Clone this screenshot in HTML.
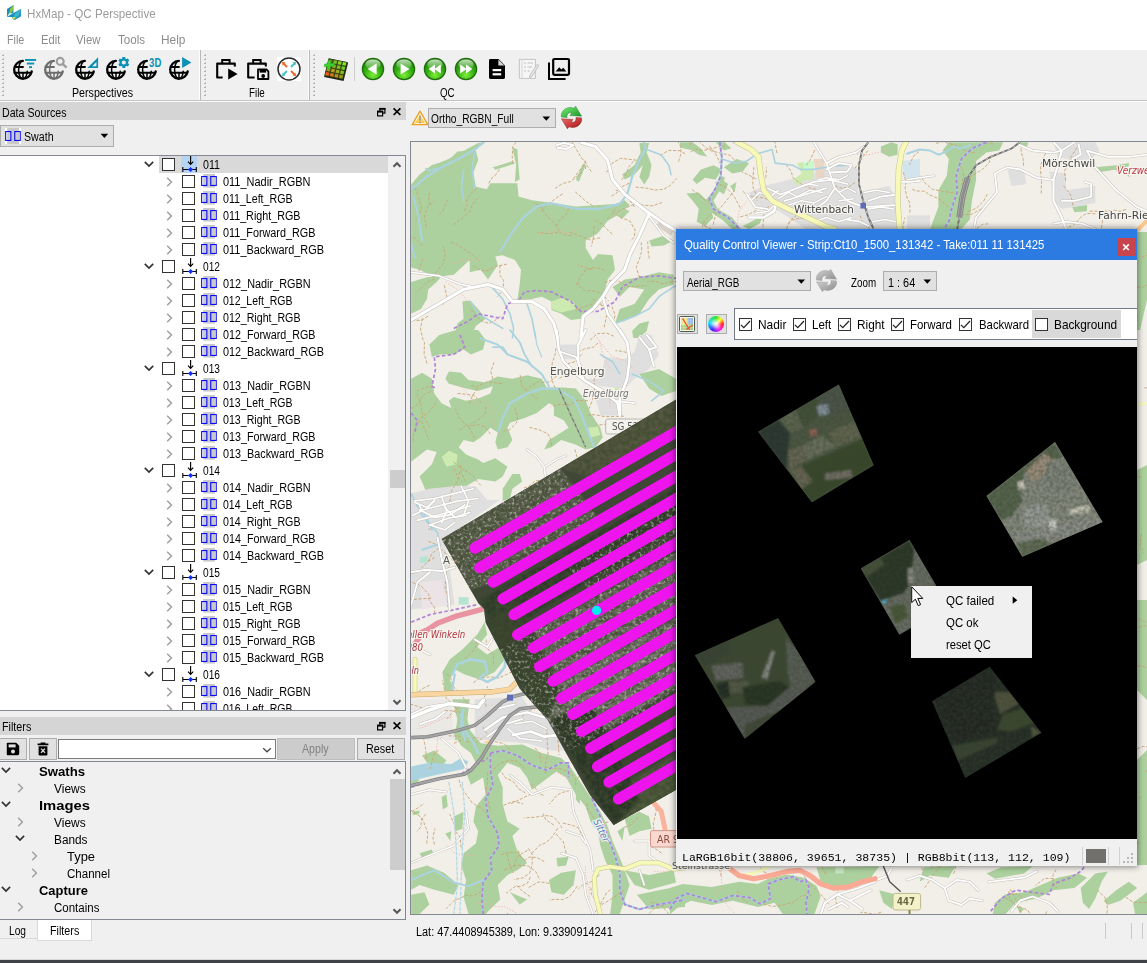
<!DOCTYPE html>
<html lang="en"><head><meta charset="utf-8"><title>HxMap - QC Perspective</title>
<style>
html,body{margin:0;padding:0}
body{width:1147px;height:963px;overflow:hidden;background:#f0f0f0;font-family:"Liberation Sans",sans-serif;font-size:12px;position:relative}
.t{position:absolute;white-space:pre;transform-origin:0 50%;line-height:1.3333;display:block}
.a{position:absolute}
svg{position:absolute;overflow:visible}

</style></head>
<body>
<div class="a" style="left:0px;top:0px;width:1147px;height:50px;background:#fff;"></div>
<svg style="left:0px;top:0px" width="28" height="26" viewBox="0 0 28 26">
<polygon points="7,9 13.4,5 13.4,13 7,17" fill="#1a8db9"/>
<polygon points="13.4,5 13.4,9.5 9,16 8,16.4 10.4,8.5" fill="#8cc63f"/>
<polygon points="7,17 9,13.6 13.4,13 " fill="#e8f4f8"/>
<polygon points="13.4,13 20.9,9 20.9,16.6 14.5,20 11.8,17.1 7,17" fill="#1690c2"/>
<polygon points="15,13.4 20.9,9 18.5,16.5 13.5,17" fill="#3db6c9"/>
<polygon points="11.9,17.1 16.7,16.9 13.7,20.3" fill="#8cc63f"/>
<polygon points="13.2,17.3 14.6,17.3 13.8,18.9" fill="#fff"/>
</svg>
<span class="t" style="left:27.3px;top:5.94px;font-size:12.5px;color:#9b9b9b;transform:scaleX(0.9310)">HxMap - QC Perspective</span>
<span class="t" style="left:6.6px;top:32.54px;font-size:12px;color:#8c8c8c;transform:scaleX(0.8943)">File</span>
<span class="t" style="left:40.5px;top:32.54px;font-size:12px;color:#8c8c8c;transform:scaleX(0.9329)">Edit</span>
<span class="t" style="left:76.4px;top:32.54px;font-size:12px;color:#8c8c8c;transform:scaleX(0.9459)">View</span>
<span class="t" style="left:117.7px;top:32.54px;font-size:12px;color:#8c8c8c;transform:scaleX(0.9637)">Tools</span>
<span class="t" style="left:161.3px;top:32.54px;font-size:12px;color:#8c8c8c;transform:scaleX(0.9884)">Help</span>
<div class="a" style="left:0px;top:50px;width:1147px;height:50px;background:#f0f0f0;"></div>
<div class="a" style="left:0px;top:100px;width:1147px;height:1px;background:#c4c4c4;"></div>
<div class="a" style="left:0px;top:101px;width:1147px;height:1px;background:#fbfbfb;"></div>
<svg style="left:0;top:0" width="1147" height="110"><rect x="3" y="54" width="1" height="1" fill="#c6c6c6"/><rect x="2" y="55" width="2" height="1" fill="#b2b2b2"/><rect x="3" y="58" width="1" height="1" fill="#c6c6c6"/><rect x="2" y="59" width="2" height="1" fill="#b2b2b2"/><rect x="3" y="62" width="1" height="1" fill="#c6c6c6"/><rect x="2" y="63" width="2" height="1" fill="#b2b2b2"/><rect x="3" y="66" width="1" height="1" fill="#c6c6c6"/><rect x="2" y="67" width="2" height="1" fill="#b2b2b2"/><rect x="3" y="70" width="1" height="1" fill="#c6c6c6"/><rect x="2" y="71" width="2" height="1" fill="#b2b2b2"/><rect x="3" y="74" width="1" height="1" fill="#c6c6c6"/><rect x="2" y="75" width="2" height="1" fill="#b2b2b2"/><rect x="3" y="78" width="1" height="1" fill="#c6c6c6"/><rect x="2" y="79" width="2" height="1" fill="#b2b2b2"/><rect x="3" y="82" width="1" height="1" fill="#c6c6c6"/><rect x="2" y="83" width="2" height="1" fill="#b2b2b2"/><rect x="3" y="86" width="1" height="1" fill="#c6c6c6"/><rect x="2" y="87" width="2" height="1" fill="#b2b2b2"/><rect x="3" y="90" width="1" height="1" fill="#c6c6c6"/><rect x="2" y="91" width="2" height="1" fill="#b2b2b2"/><rect x="3" y="94" width="1" height="1" fill="#c6c6c6"/><rect x="2" y="95" width="2" height="1" fill="#b2b2b2"/></svg>
<svg style="left:0;top:0" width="1147" height="110"><rect x="205" y="54" width="1" height="1" fill="#c6c6c6"/><rect x="204" y="55" width="2" height="1" fill="#b2b2b2"/><rect x="205" y="58" width="1" height="1" fill="#c6c6c6"/><rect x="204" y="59" width="2" height="1" fill="#b2b2b2"/><rect x="205" y="62" width="1" height="1" fill="#c6c6c6"/><rect x="204" y="63" width="2" height="1" fill="#b2b2b2"/><rect x="205" y="66" width="1" height="1" fill="#c6c6c6"/><rect x="204" y="67" width="2" height="1" fill="#b2b2b2"/><rect x="205" y="70" width="1" height="1" fill="#c6c6c6"/><rect x="204" y="71" width="2" height="1" fill="#b2b2b2"/><rect x="205" y="74" width="1" height="1" fill="#c6c6c6"/><rect x="204" y="75" width="2" height="1" fill="#b2b2b2"/><rect x="205" y="78" width="1" height="1" fill="#c6c6c6"/><rect x="204" y="79" width="2" height="1" fill="#b2b2b2"/><rect x="205" y="82" width="1" height="1" fill="#c6c6c6"/><rect x="204" y="83" width="2" height="1" fill="#b2b2b2"/><rect x="205" y="86" width="1" height="1" fill="#c6c6c6"/><rect x="204" y="87" width="2" height="1" fill="#b2b2b2"/><rect x="205" y="90" width="1" height="1" fill="#c6c6c6"/><rect x="204" y="91" width="2" height="1" fill="#b2b2b2"/><rect x="205" y="94" width="1" height="1" fill="#c6c6c6"/><rect x="204" y="95" width="2" height="1" fill="#b2b2b2"/></svg>
<svg style="left:0;top:0" width="1147" height="110"><rect x="314" y="54" width="1" height="1" fill="#c6c6c6"/><rect x="313" y="55" width="2" height="1" fill="#b2b2b2"/><rect x="314" y="58" width="1" height="1" fill="#c6c6c6"/><rect x="313" y="59" width="2" height="1" fill="#b2b2b2"/><rect x="314" y="62" width="1" height="1" fill="#c6c6c6"/><rect x="313" y="63" width="2" height="1" fill="#b2b2b2"/><rect x="314" y="66" width="1" height="1" fill="#c6c6c6"/><rect x="313" y="67" width="2" height="1" fill="#b2b2b2"/><rect x="314" y="70" width="1" height="1" fill="#c6c6c6"/><rect x="313" y="71" width="2" height="1" fill="#b2b2b2"/><rect x="314" y="74" width="1" height="1" fill="#c6c6c6"/><rect x="313" y="75" width="2" height="1" fill="#b2b2b2"/><rect x="314" y="78" width="1" height="1" fill="#c6c6c6"/><rect x="313" y="79" width="2" height="1" fill="#b2b2b2"/><rect x="314" y="82" width="1" height="1" fill="#c6c6c6"/><rect x="313" y="83" width="2" height="1" fill="#b2b2b2"/><rect x="314" y="86" width="1" height="1" fill="#c6c6c6"/><rect x="313" y="87" width="2" height="1" fill="#b2b2b2"/><rect x="314" y="90" width="1" height="1" fill="#c6c6c6"/><rect x="313" y="91" width="2" height="1" fill="#b2b2b2"/><rect x="314" y="94" width="1" height="1" fill="#c6c6c6"/><rect x="313" y="95" width="2" height="1" fill="#b2b2b2"/></svg>
<div class="a" style="left:199px;top:50px;width:1px;height:50px;background:#fdfdfd;"></div>
<div class="a" style="left:200px;top:50px;width:1px;height:50px;background:#b9b9b9;"></div>
<div class="a" style="left:308px;top:50px;width:1px;height:50px;background:#fdfdfd;"></div>
<div class="a" style="left:309px;top:50px;width:1px;height:50px;background:#b9b9b9;"></div>
<svg style="left:11px;top:56px" width="28" height="26" viewBox="-12 -14 28 26"><g transform="translate(0,-0.2)"><g fill="none" stroke="#000" stroke-width="2.3" stroke-linecap="round">
<path d="M -0.2 -8.85 A 8.85 8.85 0 1 0 8.75 1.5"/>
<path d="M -0.2 -8.9 A 4.3 8.9 0 0 0 0 8.9" stroke-width="1.5"/>
<path d="M 4.2 1.5 A 4.3 8.9 0 0 1 0 8.9" stroke-width="1.5"/>
<path d="M 0 3 V 8.6" stroke-width="1.5"/>
<path d="M -8.2 -2.8 H 0 M -8.4 2.9 H 8.4" stroke-width="1.9"/>
</g></g><g fill="#0b90b6"><rect x="2" y="-11" width="11.1" height="1.9"/><rect x="3.9" y="-7.4" width="7.3" height="1.9"/><rect x="6" y="-3.8" width="3" height="1.9"/></g></svg>
<svg style="left:42px;top:56px" width="28" height="26" viewBox="-12 -14 28 26"><g transform="translate(0,-0.2)"><g fill="none" stroke="#6c6c6c" stroke-width="2.3" stroke-linecap="round">
<path d="M -0.2 -8.85 A 8.85 8.85 0 1 0 8.75 1.5"/>
<path d="M -0.2 -8.9 A 4.3 8.9 0 0 0 0 8.9" stroke-width="1.5"/>
<path d="M 4.2 1.5 A 4.3 8.9 0 0 1 0 8.9" stroke-width="1.5"/>
<path d="M 0 3 V 8.6" stroke-width="1.5"/>
<path d="M -8.2 -2.8 H 0 M -8.4 2.9 H 8.4" stroke-width="1.9"/>
</g></g><g fill="none" stroke="#9d9d9d" stroke-width="2.1"><circle cx="6.2" cy="-8.6" r="3.5"/><path d="M 8.8 -5.9 L 12.6 -2.4" stroke-width="2.3"/></g></svg>
<svg style="left:73px;top:56px" width="28" height="26" viewBox="-12 -14 28 26"><g transform="translate(0,-0.2)"><g fill="none" stroke="#000" stroke-width="2.3" stroke-linecap="round">
<path d="M -0.2 -8.85 A 8.85 8.85 0 1 0 8.75 1.5"/>
<path d="M -0.2 -8.9 A 4.3 8.9 0 0 0 0 8.9" stroke-width="1.5"/>
<path d="M 4.2 1.5 A 4.3 8.9 0 0 1 0 8.9" stroke-width="1.5"/>
<path d="M 0 3 V 8.6" stroke-width="1.5"/>
<path d="M -8.2 -2.8 H 0 M -8.4 2.9 H 8.4" stroke-width="1.9"/>
</g></g><path d="M 13.1 -12.7 V -2 H 2.3 Z M 11.4 -7.9 V -3.8 H 7.2 Z" fill="#0b90b6" fill-rule="evenodd"/></svg>
<svg style="left:104px;top:56px" width="28" height="26" viewBox="-12 -14 28 26"><g transform="translate(0,-0.2)"><g fill="none" stroke="#000" stroke-width="2.3" stroke-linecap="round">
<path d="M -0.2 -8.85 A 8.85 8.85 0 1 0 8.75 1.5"/>
<path d="M -0.2 -8.9 A 4.3 8.9 0 0 0 0 8.9" stroke-width="1.5"/>
<path d="M 4.2 1.5 A 4.3 8.9 0 0 1 0 8.9" stroke-width="1.5"/>
<path d="M 0 3 V 8.6" stroke-width="1.5"/>
<path d="M -8.2 -2.8 H 0 M -8.4 2.9 H 8.4" stroke-width="1.9"/>
</g></g><g transform="translate(7.8,-7.5)" fill="#0b90b6"><rect x="-1.45" y="-5.6" width="2.9" height="11.2" rx="0.3" transform="rotate(0)"/><rect x="-1.45" y="-5.6" width="2.9" height="11.2" rx="0.3" transform="rotate(60)"/><rect x="-1.45" y="-5.6" width="2.9" height="11.2" rx="0.3" transform="rotate(120)"/><circle r="4.3"/><circle r="2.1" fill="#f0f0f0"/></g></svg>
<svg style="left:135px;top:56px" width="28" height="26" viewBox="-12 -14 28 26"><g transform="translate(0,-0.2)"><g fill="none" stroke="#000" stroke-width="2.3" stroke-linecap="round">
<path d="M -0.2 -8.85 A 8.85 8.85 0 1 0 8.75 1.5"/>
<path d="M -0.2 -8.9 A 4.3 8.9 0 0 0 0 8.9" stroke-width="1.5"/>
<path d="M 4.2 1.5 A 4.3 8.9 0 0 1 0 8.9" stroke-width="1.5"/>
<path d="M 0 3 V 8.6" stroke-width="1.5"/>
<path d="M -8.2 -2.8 H 0 M -8.4 2.9 H 8.4" stroke-width="1.9"/>
</g></g><text x="2.1" y="-3" font-family="Liberation Sans, sans-serif" font-weight="bold" font-size="13.2" fill="#0b90b6" textLength="12.2" lengthAdjust="spacingAndGlyphs">3D</text></svg>
<svg style="left:166.5px;top:56px" width="28" height="26" viewBox="-12 -14 28 26"><g transform="translate(0,-0.2)"><g fill="none" stroke="#000" stroke-width="2.3" stroke-linecap="round">
<path d="M -0.2 -8.85 A 8.85 8.85 0 1 0 8.75 1.5"/>
<path d="M -0.2 -8.9 A 4.3 8.9 0 0 0 0 8.9" stroke-width="1.5"/>
<path d="M 4.2 1.5 A 4.3 8.9 0 0 1 0 8.9" stroke-width="1.5"/>
<path d="M 0 3 V 8.6" stroke-width="1.5"/>
<path d="M -8.2 -2.8 H 0 M -8.4 2.9 H 8.4" stroke-width="1.9"/>
</g></g><path d="M 3.1 -13 L 12.4 -7.5 L 3.1 -2 Z" fill="#0b90b6"/></svg>
<span class="t" style="left:71.5px;top:86.24px;font-size:12px;color:#000;transform:scaleX(0.8879)">Perspectives</span>
<svg style="left:214px;top:56px" width="26" height="26" viewBox="0 0 26 26">
<path d="M 8.6 21.5 H 3.2 V 7.6 H 20.8 V 10.5" fill="none" stroke="#000" stroke-width="2.1" stroke-linejoin="round"/>
<path d="M 8.2 7.4 V 4 H 15.6 V 7.4" fill="none" stroke="#000" stroke-width="2"/>
<path d="M 14.2 12.6 L 23.6 18.1 L 14.2 23.6 Z" fill="#000"/></svg>
<svg style="left:245px;top:56px" width="26" height="26" viewBox="0 0 26 26">
<path d="M 9.6 21.5 H 3.2 V 7.6 H 20.8 V 10.5" fill="none" stroke="#000" stroke-width="2.1" stroke-linejoin="round"/>
<path d="M 8.2 7.4 V 4 H 15.6 V 7.4" fill="none" stroke="#000" stroke-width="2"/>
<path d="M 13 13.4 H 21.4 L 23.4 15.4 V 23 H 13 Z" fill="#f0f0f0" stroke="#000" stroke-width="1.8" stroke-linejoin="round"/>
<rect x="14.6" y="14" width="6.6" height="2.6" fill="#000"/><circle cx="18.2" cy="20" r="1.9" fill="#000"/></svg>
<svg style="left:277px;top:57px" width="24" height="24" viewBox="-12 -12 24 24">
<rect x="-12" y="-12" width="24" height="24" fill="#fff"/>
<circle r="11" fill="#fff" stroke="#2b2b2b" stroke-width="1.5"/>
<g stroke-width="2" fill="none">
<path d="M -2 -2 L -5.8 -5.8" stroke="#ee6a2c"/><path d="M 2 2 L 5.8 5.8" stroke="#ee6a2c"/>
<path d="M 2 -2 L 5.8 -5.8" stroke="#4fc1c9"/><path d="M -2 2 L -5.8 5.8" stroke="#4fc1c9"/></g>
<path d="M -7.2 -7.2 L -3.4 -6.4 L -6.4 -3.4 Z M 7.2 7.2 L 3.4 6.4 L 6.4 3.4 Z" fill="#ee6a2c"/>
<path d="M 7.2 -7.2 L 3.4 -6.4 L 6.4 -3.4 Z M -7.2 7.2 L -3.4 6.4 L -6.4 3.4 Z" fill="#4fc1c9"/>
</svg>
<span class="t" style="left:249.3px;top:86.24px;font-size:12px;color:#000;transform:scaleX(0.8168)">File</span>
<svg style="left:323px;top:56px" width="26" height="26" viewBox="0 0 26 26">
<g transform="matrix(18.3,3.7,-4.3,17.1,5.8,2.5)"><rect x="0" y="0" width="1.06" height="1.08" fill="#22280f"/><rect x="-0.01" y="-0.01" width="1.0" height="1.0" fill="#3a4418"/><rect x="0.035" y="0.035" width="0.18" height="0.18" fill="#4a8a14"/><rect x="0.28500000000000003" y="0.035" width="0.18" height="0.18" fill="#7fc01c"/><rect x="0.535" y="0.035" width="0.18" height="0.18" fill="#86d81f"/><rect x="0.785" y="0.035" width="0.18" height="0.18" fill="#7fe828"/><rect x="0.035" y="0.28500000000000003" width="0.18" height="0.18" fill="#a89414"/><rect x="0.28500000000000003" y="0.28500000000000003" width="0.18" height="0.18" fill="#8fb018"/><rect x="0.535" y="0.28500000000000003" width="0.18" height="0.18" fill="#79c41c"/><rect x="0.785" y="0.28500000000000003" width="0.18" height="0.18" fill="#6fd420"/><rect x="0.035" y="0.535" width="0.18" height="0.18" fill="#d08a18"/><rect x="0.28500000000000003" y="0.535" width="0.18" height="0.18" fill="#b8a018"/><rect x="0.535" y="0.535" width="0.18" height="0.18" fill="#9ab01a"/><rect x="0.785" y="0.535" width="0.18" height="0.18" fill="#86c01c"/><rect x="0.035" y="0.785" width="0.18" height="0.18" fill="#e8601a"/><rect x="0.28500000000000003" y="0.785" width="0.18" height="0.18" fill="#d87818"/><rect x="0.535" y="0.785" width="0.18" height="0.18" fill="#c08c18"/><rect x="0.785" y="0.785" width="0.18" height="0.18" fill="#a09c1a"/></g>
<path d="M 1.4 8.2 L 4.6 7.6 L 5.2 4.4 H 8 L 7.6 7.4 L 11.4 7.2 V 10 L 7.4 10.4 L 7 13.6 H 4 L 4.4 10.6 L 1.4 11 Z" fill="#3fd030" stroke="#2fae25" stroke-width="0.5"/></svg>
<div class="a" style="left:354px;top:57px;width:1px;height:24px;background:#cfcfcf;"></div>
<svg style="left:361px;top:56.599999999999994px" width="24" height="24" viewBox="-12 -12 24 24">
<defs><radialGradient id="gg373" cx="50%" cy="78%" r="70%"><stop offset="0" stop-color="#7ef03a"/><stop offset="0.55" stop-color="#34b012"/><stop offset="1" stop-color="#1c8608"/></radialGradient>
<linearGradient id="gh373" x1="0" y1="0" x2="0" y2="1"><stop offset="0" stop-color="#fff" stop-opacity="0.75"/><stop offset="1" stop-color="#fff" stop-opacity="0.05"/></linearGradient></defs>
<circle r="10.6" fill="url(#gg373)" stroke="#1f6e0c" stroke-width="1.3"/>
<ellipse cx="0" cy="-4.6" rx="7.6" ry="5" fill="url(#gh373)"/>
<g fill="#fff"><path d="M 3.6 -5.4 V 5.4 L -5.4 0 Z"/></g></svg>
<svg style="left:392px;top:56.599999999999994px" width="24" height="24" viewBox="-12 -12 24 24">
<defs><radialGradient id="gg404" cx="50%" cy="78%" r="70%"><stop offset="0" stop-color="#7ef03a"/><stop offset="0.55" stop-color="#34b012"/><stop offset="1" stop-color="#1c8608"/></radialGradient>
<linearGradient id="gh404" x1="0" y1="0" x2="0" y2="1"><stop offset="0" stop-color="#fff" stop-opacity="0.75"/><stop offset="1" stop-color="#fff" stop-opacity="0.05"/></linearGradient></defs>
<circle r="10.6" fill="url(#gg404)" stroke="#1f6e0c" stroke-width="1.3"/>
<ellipse cx="0" cy="-4.6" rx="7.6" ry="5" fill="url(#gh404)"/>
<g fill="#fff"><path d="M -3.4 -5.4 V 5.4 L 5.6 0 Z"/></g></svg>
<svg style="left:423px;top:56.599999999999994px" width="24" height="24" viewBox="-12 -12 24 24">
<defs><radialGradient id="gg435" cx="50%" cy="78%" r="70%"><stop offset="0" stop-color="#7ef03a"/><stop offset="0.55" stop-color="#34b012"/><stop offset="1" stop-color="#1c8608"/></radialGradient>
<linearGradient id="gh435" x1="0" y1="0" x2="0" y2="1"><stop offset="0" stop-color="#fff" stop-opacity="0.75"/><stop offset="1" stop-color="#fff" stop-opacity="0.05"/></linearGradient></defs>
<circle r="10.6" fill="url(#gg435)" stroke="#1f6e0c" stroke-width="1.3"/>
<ellipse cx="0" cy="-4.6" rx="7.6" ry="5" fill="url(#gh435)"/>
<g fill="#fff"><path d="M 0 -4.6 V 4.6 L -6.4 0 Z M 5.8 -4.6 V 4.6 L -0.6 0 Z"/></g></svg>
<svg style="left:454px;top:56.599999999999994px" width="24" height="24" viewBox="-12 -12 24 24">
<defs><radialGradient id="gg466" cx="50%" cy="78%" r="70%"><stop offset="0" stop-color="#7ef03a"/><stop offset="0.55" stop-color="#34b012"/><stop offset="1" stop-color="#1c8608"/></radialGradient>
<linearGradient id="gh466" x1="0" y1="0" x2="0" y2="1"><stop offset="0" stop-color="#fff" stop-opacity="0.75"/><stop offset="1" stop-color="#fff" stop-opacity="0.05"/></linearGradient></defs>
<circle r="10.6" fill="url(#gg466)" stroke="#1f6e0c" stroke-width="1.3"/>
<ellipse cx="0" cy="-4.6" rx="7.6" ry="5" fill="url(#gh466)"/>
<g fill="#fff"><path d="M 0 -4.6 V 4.6 L 6.4 0 Z M -5.8 -4.6 V 4.6 L 0.6 0 Z"/></g></svg>
<svg style="left:488px;top:58px" width="18" height="22" viewBox="0 0 18 22">
<path d="M 2.4 1 H 10.6 L 17 7.4 V 19.6 Q 17 21 15.6 21 H 2.4 Q 1 21 1 19.6 V 2.4 Q 1 1 2.4 1 Z" fill="#000"/>
<path d="M 10.4 1.6 V 7.6 H 16.4 Z" fill="#d8d8d8"/>
<rect x="4.6" y="11" width="8.6" height="2.2" fill="#fff"/><rect x="4.6" y="15.2" width="8.6" height="2.2" fill="#fff"/></svg>
<svg style="left:518px;top:58px" width="22" height="22" viewBox="0 0 22 22">
<rect x="1.4" y="1.4" width="16" height="19" fill="#f6f6f6" stroke="#c6c6c6" stroke-width="1"/>
<path d="M 4 1.4 V 20.4" stroke="#d4d4d4" stroke-width="1"/>
<g stroke="#c2c2c2" stroke-width="1.1"><path d="M 6 5 H 8 M 9.6 5 H 15 M 6 9 H 8 M 9.6 9 H 14 M 6 13 H 8 M 9.6 13 H 12"/></g>
<path d="M 19.2 6.2 L 20.8 7.4 L 14 18.4 L 11.6 19.6 L 12 17 Z" fill="#e8e8e8" stroke="#bdbdbd" stroke-width="0.9"/></svg>
<svg style="left:547px;top:57px" width="24" height="24" viewBox="0 0 24 24">
<path d="M 2 5.6 V 22 H 18.6" fill="none" stroke="#000" stroke-width="2"/>
<rect x="6.2" y="2" width="15.8" height="15.8" rx="1.2" fill="none" stroke="#000" stroke-width="2.2"/>
<path d="M 8.6 14.6 L 12.2 10.2 L 14.4 12.6 L 16.2 10.8 L 19.4 14.6 Z" fill="#000"/></svg>
<span class="t" style="left:439.6px;top:86.24px;font-size:12px;color:#000;transform:scaleX(0.8111)">QC</span>
<div class="a" style="left:0px;top:102.4px;width:405.6px;height:18px;background:#d5d5d5;"></div>
<span class="t" style="left:2px;top:106.44px;font-size:12px;color:#000;transform:scaleX(0.8872)">Data Sources</span>
<svg style="left:374px;top:103px" width="32" height="18" viewBox="0 0 32 18">
<g fill="#d5d5d5" stroke="#000" stroke-width="1.2"><rect x="5.9" y="5.5" width="5" height="4.6"/><path d="M 5.3 5.9 H 11.5" stroke-width="1.8"/><rect x="3.6" y="8.3" width="5" height="4.6"/><path d="M 3 8.7 H 9.2" stroke-width="1.8"/></g>
<path d="M 19.6 5.4 L 26.4 12 M 26.4 5.4 L 19.6 12" stroke="#000" stroke-width="1.7" fill="none"/></svg>
<div class="a" style="left:0px;top:125px;width:114px;height:22px;background:#e1e1e1;border:1px solid #adadad;box-sizing:border-box;"></div>
<svg style="left:5px;top:128px" width="16" height="16" viewBox="0 0 16 16">
<rect x="0" y="0" width="16" height="16" fill="#fff"/><rect x="2.2" y="0" width="11.8" height="16" fill="#c9c9c9"/>
<rect x="0.65" y="3.55" width="5.2" height="8.9" fill="none" stroke="#0a0af8" stroke-width="1.1"/><rect x="9.75" y="3.55" width="5.5" height="8.9" fill="none" stroke="#0a0af8" stroke-width="1.1"/></svg>
<span class="t" style="left:23.8px;top:130.44px;font-size:12px;color:#000;transform:scaleX(0.8873)">Swath</span>
<svg style="left:100px;top:133px" width="9" height="6"><path d="M 0.6 0.8 H 8.2 L 4.4 5 Z" fill="#000"/></svg>
<div class="a" style="left:0px;top:155px;width:406px;height:556px;background:#fff;border:1px solid #828790;box-sizing:border-box;border-left:none;"></div>
<div class="a" style="left:388px;top:156px;width:17px;height:554px;background:#f0f0f0;"></div>
<div class="a" style="left:390px;top:470px;width:15px;height:18px;background:#cdcdcd;"></div>
<svg style="left:390.6px;top:159px" width="12" height="12" viewBox="-6 -6 12 12"><path d="M -3.5 1.8 L 0 -1.8 L 3.5 1.8" fill="none" stroke="#555" stroke-width="2"/></svg>
<svg style="left:390.6px;top:695.5px" width="12" height="12" viewBox="-6 -6 12 12"><path d="M -3.5 -1.8 L 0 1.8 L 3.5 -1.8" fill="none" stroke="#555" stroke-width="2"/></svg>
<div class="a" style="left:0;top:156px;width:388px;height:554px;overflow:hidden">
<div class="a" style="left:159px;top:0px;width:229px;height:16.6px;background:#d9d9d9;"></div>
<svg style="left:142.5px;top:2.1999999999999993px" width="12" height="12" viewBox="-6 -6 12 12"><path d="M -4.2 -2.1 L 0 2.1 L 4.2 -2.1" fill="none" stroke="#333" stroke-width="1.7"/></svg>
<div class="a" style="left:162px;top:2px;width:13px;height:13px;box-sizing:border-box;border:1px solid #333;background:#fff"></div>
<svg style="left:181px;top:0px" width="16" height="17" viewBox="0 0 16 17"><rect x="0" y="0" width="16" height="16.6" fill="#b5d5f2"/>
<path d="M 9.6 0 V 8 M 7 5.6 L 9.6 8.4 L 12.2 5.6" fill="none" stroke="#000" stroke-width="1.15"/>
<path d="M 1.3 13.5 H 15.8 M 1.8 11 V 16 M 15.3 11 V 16" stroke="#000" stroke-width="1.1" fill="none"/>
<path d="M 9.6 10.9 L 12.2 13.5 L 9.6 16.1 L 7 13.5 Z" fill="#1030ff"/></svg>
<span class="t" style="left:203px;top:2.24px;font-size:12px;color:#000;transform:scaleX(0.8882)">011</span>
<svg style="left:162.6px;top:19.5px" width="12" height="12" viewBox="-6 -6 12 12"><path d="M -1.8 -4.2 L 2.4 0 L -1.8 4.2" fill="none" stroke="#a0a0a0" stroke-width="1.5"/></svg>
<div class="a" style="left:182px;top:19px;width:13px;height:13px;box-sizing:border-box;border:1px solid #333;background:#fff"></div>
<svg style="left:201px;top:17px" width="16" height="16" viewBox="0 0 16 16">
<rect x="2.2" y="1" width="11.8" height="13.6" fill="#c9c9c9"/>
<rect x="0.65" y="3.55" width="5.2" height="8.9" fill="none" stroke="#0a0af8" stroke-width="1.1"/><rect x="9.75" y="3.55" width="5.5" height="8.9" fill="none" stroke="#0a0af8" stroke-width="1.1"/></svg>
<span class="t" style="left:223px;top:19.24px;font-size:12px;color:#000;transform:scaleX(0.9131)">011_Nadir_RGBN</span>
<svg style="left:162.6px;top:36.5px" width="12" height="12" viewBox="-6 -6 12 12"><path d="M -1.8 -4.2 L 2.4 0 L -1.8 4.2" fill="none" stroke="#a0a0a0" stroke-width="1.5"/></svg>
<div class="a" style="left:182px;top:36px;width:13px;height:13px;box-sizing:border-box;border:1px solid #333;background:#fff"></div>
<svg style="left:201px;top:34px" width="16" height="16" viewBox="0 0 16 16">
<rect x="2.2" y="1" width="11.8" height="13.6" fill="#c9c9c9"/>
<rect x="0.65" y="3.55" width="5.2" height="8.9" fill="none" stroke="#0a0af8" stroke-width="1.1"/><rect x="9.75" y="3.55" width="5.5" height="8.9" fill="none" stroke="#0a0af8" stroke-width="1.1"/></svg>
<span class="t" style="left:223px;top:36.24px;font-size:12px;color:#000;transform:scaleX(0.8854)">011_Left_RGB</span>
<svg style="left:162.6px;top:53.5px" width="12" height="12" viewBox="-6 -6 12 12"><path d="M -1.8 -4.2 L 2.4 0 L -1.8 4.2" fill="none" stroke="#a0a0a0" stroke-width="1.5"/></svg>
<div class="a" style="left:182px;top:53px;width:13px;height:13px;box-sizing:border-box;border:1px solid #333;background:#fff"></div>
<svg style="left:201px;top:51px" width="16" height="16" viewBox="0 0 16 16">
<rect x="2.2" y="1" width="11.8" height="13.6" fill="#c9c9c9"/>
<rect x="0.65" y="3.55" width="5.2" height="8.9" fill="none" stroke="#0a0af8" stroke-width="1.1"/><rect x="9.75" y="3.55" width="5.5" height="8.9" fill="none" stroke="#0a0af8" stroke-width="1.1"/></svg>
<span class="t" style="left:223px;top:53.24px;font-size:12px;color:#000;transform:scaleX(0.8960)">011_Right_RGB</span>
<svg style="left:162.6px;top:70.5px" width="12" height="12" viewBox="-6 -6 12 12"><path d="M -1.8 -4.2 L 2.4 0 L -1.8 4.2" fill="none" stroke="#a0a0a0" stroke-width="1.5"/></svg>
<div class="a" style="left:182px;top:70px;width:13px;height:13px;box-sizing:border-box;border:1px solid #333;background:#fff"></div>
<svg style="left:201px;top:68px" width="16" height="16" viewBox="0 0 16 16">
<rect x="2.2" y="1" width="11.8" height="13.6" fill="#c9c9c9"/>
<rect x="0.65" y="3.55" width="5.2" height="8.9" fill="none" stroke="#0a0af8" stroke-width="1.1"/><rect x="9.75" y="3.55" width="5.5" height="8.9" fill="none" stroke="#0a0af8" stroke-width="1.1"/></svg>
<span class="t" style="left:223px;top:70.24px;font-size:12px;color:#000;transform:scaleX(0.9024)">011_Forward_RGB</span>
<svg style="left:162.6px;top:87.5px" width="12" height="12" viewBox="-6 -6 12 12"><path d="M -1.8 -4.2 L 2.4 0 L -1.8 4.2" fill="none" stroke="#a0a0a0" stroke-width="1.5"/></svg>
<div class="a" style="left:182px;top:87px;width:13px;height:13px;box-sizing:border-box;border:1px solid #333;background:#fff"></div>
<svg style="left:201px;top:85px" width="16" height="16" viewBox="0 0 16 16">
<rect x="2.2" y="1" width="11.8" height="13.6" fill="#c9c9c9"/>
<rect x="0.65" y="3.55" width="5.2" height="8.9" fill="none" stroke="#0a0af8" stroke-width="1.1"/><rect x="9.75" y="3.55" width="5.5" height="8.9" fill="none" stroke="#0a0af8" stroke-width="1.1"/></svg>
<span class="t" style="left:223px;top:87.24px;font-size:12px;color:#000;transform:scaleX(0.9085)">011_Backward_RGB</span>
<svg style="left:142.5px;top:104.2px" width="12" height="12" viewBox="-6 -6 12 12"><path d="M -4.2 -2.1 L 0 2.1 L 4.2 -2.1" fill="none" stroke="#333" stroke-width="1.7"/></svg>
<div class="a" style="left:162px;top:104px;width:13px;height:13px;box-sizing:border-box;border:1px solid #333;background:#fff"></div>
<svg style="left:181px;top:102px" width="16" height="17" viewBox="0 0 16 17">
<path d="M 9.6 0 V 8 M 7 5.6 L 9.6 8.4 L 12.2 5.6" fill="none" stroke="#000" stroke-width="1.15"/>
<path d="M 1.3 13.5 H 15.8 M 1.8 11 V 16 M 15.3 11 V 16" stroke="#000" stroke-width="1.1" fill="none"/>
<path d="M 9.6 10.9 L 12.2 13.5 L 9.6 16.1 L 7 13.5 Z" fill="#1030ff"/></svg>
<span class="t" style="left:203px;top:104.24px;font-size:12px;color:#000;transform:scaleX(0.8487)">012</span>
<svg style="left:162.6px;top:121.5px" width="12" height="12" viewBox="-6 -6 12 12"><path d="M -1.8 -4.2 L 2.4 0 L -1.8 4.2" fill="none" stroke="#a0a0a0" stroke-width="1.5"/></svg>
<div class="a" style="left:182px;top:121px;width:13px;height:13px;box-sizing:border-box;border:1px solid #333;background:#fff"></div>
<svg style="left:201px;top:119px" width="16" height="16" viewBox="0 0 16 16">
<rect x="2.2" y="1" width="11.8" height="13.6" fill="#c9c9c9"/>
<rect x="0.65" y="3.55" width="5.2" height="8.9" fill="none" stroke="#0a0af8" stroke-width="1.1"/><rect x="9.75" y="3.55" width="5.5" height="8.9" fill="none" stroke="#0a0af8" stroke-width="1.1"/></svg>
<span class="t" style="left:223px;top:121.24px;font-size:12px;color:#000;transform:scaleX(0.9047)">012_Nadir_RGBN</span>
<svg style="left:162.6px;top:138.5px" width="12" height="12" viewBox="-6 -6 12 12"><path d="M -1.8 -4.2 L 2.4 0 L -1.8 4.2" fill="none" stroke="#a0a0a0" stroke-width="1.5"/></svg>
<div class="a" style="left:182px;top:138px;width:13px;height:13px;box-sizing:border-box;border:1px solid #333;background:#fff"></div>
<svg style="left:201px;top:136px" width="16" height="16" viewBox="0 0 16 16">
<rect x="2.2" y="1" width="11.8" height="13.6" fill="#c9c9c9"/>
<rect x="0.65" y="3.55" width="5.2" height="8.9" fill="none" stroke="#0a0af8" stroke-width="1.1"/><rect x="9.75" y="3.55" width="5.5" height="8.9" fill="none" stroke="#0a0af8" stroke-width="1.1"/></svg>
<span class="t" style="left:223px;top:138.24px;font-size:12px;color:#000;transform:scaleX(0.8754)">012_Left_RGB</span>
<svg style="left:162.6px;top:155.5px" width="12" height="12" viewBox="-6 -6 12 12"><path d="M -1.8 -4.2 L 2.4 0 L -1.8 4.2" fill="none" stroke="#a0a0a0" stroke-width="1.5"/></svg>
<div class="a" style="left:182px;top:155px;width:13px;height:13px;box-sizing:border-box;border:1px solid #333;background:#fff"></div>
<svg style="left:201px;top:153px" width="16" height="16" viewBox="0 0 16 16">
<rect x="2.2" y="1" width="11.8" height="13.6" fill="#c9c9c9"/>
<rect x="0.65" y="3.55" width="5.2" height="8.9" fill="none" stroke="#0a0af8" stroke-width="1.1"/><rect x="9.75" y="3.55" width="5.5" height="8.9" fill="none" stroke="#0a0af8" stroke-width="1.1"/></svg>
<span class="t" style="left:223px;top:155.24px;font-size:12px;color:#000;transform:scaleX(0.8868)">012_Right_RGB</span>
<svg style="left:162.6px;top:172.5px" width="12" height="12" viewBox="-6 -6 12 12"><path d="M -1.8 -4.2 L 2.4 0 L -1.8 4.2" fill="none" stroke="#a0a0a0" stroke-width="1.5"/></svg>
<div class="a" style="left:182px;top:172px;width:13px;height:13px;box-sizing:border-box;border:1px solid #333;background:#fff"></div>
<svg style="left:201px;top:170px" width="16" height="16" viewBox="0 0 16 16">
<rect x="2.2" y="1" width="11.8" height="13.6" fill="#c9c9c9"/>
<rect x="0.65" y="3.55" width="5.2" height="8.9" fill="none" stroke="#0a0af8" stroke-width="1.1"/><rect x="9.75" y="3.55" width="5.5" height="8.9" fill="none" stroke="#0a0af8" stroke-width="1.1"/></svg>
<span class="t" style="left:223px;top:172.24px;font-size:12px;color:#000;transform:scaleX(0.8947)">012_Forward_RGB</span>
<svg style="left:162.6px;top:189.5px" width="12" height="12" viewBox="-6 -6 12 12"><path d="M -1.8 -4.2 L 2.4 0 L -1.8 4.2" fill="none" stroke="#a0a0a0" stroke-width="1.5"/></svg>
<div class="a" style="left:182px;top:189px;width:13px;height:13px;box-sizing:border-box;border:1px solid #333;background:#fff"></div>
<svg style="left:201px;top:187px" width="16" height="16" viewBox="0 0 16 16">
<rect x="2.2" y="1" width="11.8" height="13.6" fill="#c9c9c9"/>
<rect x="0.65" y="3.55" width="5.2" height="8.9" fill="none" stroke="#0a0af8" stroke-width="1.1"/><rect x="9.75" y="3.55" width="5.5" height="8.9" fill="none" stroke="#0a0af8" stroke-width="1.1"/></svg>
<span class="t" style="left:223px;top:189.24px;font-size:12px;color:#000;transform:scaleX(0.9013)">012_Backward_RGB</span>
<svg style="left:142.5px;top:206.2px" width="12" height="12" viewBox="-6 -6 12 12"><path d="M -4.2 -2.1 L 0 2.1 L 4.2 -2.1" fill="none" stroke="#333" stroke-width="1.7"/></svg>
<div class="a" style="left:162px;top:206px;width:13px;height:13px;box-sizing:border-box;border:1px solid #333;background:#fff"></div>
<svg style="left:181px;top:204px" width="16" height="17" viewBox="0 0 16 17">
<path d="M 9.6 0 V 8 M 7 5.6 L 9.6 8.4 L 12.2 5.6" fill="none" stroke="#000" stroke-width="1.15"/>
<path d="M 1.3 13.5 H 15.8 M 1.8 11 V 16 M 15.3 11 V 16" stroke="#000" stroke-width="1.1" fill="none"/>
<path d="M 9.6 10.9 L 12.2 13.5 L 9.6 16.1 L 7 13.5 Z" fill="#1030ff"/></svg>
<span class="t" style="left:203px;top:206.24px;font-size:12px;color:#000;transform:scaleX(0.8487)">013</span>
<svg style="left:162.6px;top:223.5px" width="12" height="12" viewBox="-6 -6 12 12"><path d="M -1.8 -4.2 L 2.4 0 L -1.8 4.2" fill="none" stroke="#a0a0a0" stroke-width="1.5"/></svg>
<div class="a" style="left:182px;top:223px;width:13px;height:13px;box-sizing:border-box;border:1px solid #333;background:#fff"></div>
<svg style="left:201px;top:221px" width="16" height="16" viewBox="0 0 16 16">
<rect x="2.2" y="1" width="11.8" height="13.6" fill="#c9c9c9"/>
<rect x="0.65" y="3.55" width="5.2" height="8.9" fill="none" stroke="#0a0af8" stroke-width="1.1"/><rect x="9.75" y="3.55" width="5.5" height="8.9" fill="none" stroke="#0a0af8" stroke-width="1.1"/></svg>
<span class="t" style="left:223px;top:223.24px;font-size:12px;color:#000;transform:scaleX(0.9047)">013_Nadir_RGBN</span>
<svg style="left:162.6px;top:240.5px" width="12" height="12" viewBox="-6 -6 12 12"><path d="M -1.8 -4.2 L 2.4 0 L -1.8 4.2" fill="none" stroke="#a0a0a0" stroke-width="1.5"/></svg>
<div class="a" style="left:182px;top:240px;width:13px;height:13px;box-sizing:border-box;border:1px solid #333;background:#fff"></div>
<svg style="left:201px;top:238px" width="16" height="16" viewBox="0 0 16 16">
<rect x="2.2" y="1" width="11.8" height="13.6" fill="#c9c9c9"/>
<rect x="0.65" y="3.55" width="5.2" height="8.9" fill="none" stroke="#0a0af8" stroke-width="1.1"/><rect x="9.75" y="3.55" width="5.5" height="8.9" fill="none" stroke="#0a0af8" stroke-width="1.1"/></svg>
<span class="t" style="left:223px;top:240.24px;font-size:12px;color:#000;transform:scaleX(0.8754)">013_Left_RGB</span>
<svg style="left:162.6px;top:257.5px" width="12" height="12" viewBox="-6 -6 12 12"><path d="M -1.8 -4.2 L 2.4 0 L -1.8 4.2" fill="none" stroke="#a0a0a0" stroke-width="1.5"/></svg>
<div class="a" style="left:182px;top:257px;width:13px;height:13px;box-sizing:border-box;border:1px solid #333;background:#fff"></div>
<svg style="left:201px;top:255px" width="16" height="16" viewBox="0 0 16 16">
<rect x="2.2" y="1" width="11.8" height="13.6" fill="#c9c9c9"/>
<rect x="0.65" y="3.55" width="5.2" height="8.9" fill="none" stroke="#0a0af8" stroke-width="1.1"/><rect x="9.75" y="3.55" width="5.5" height="8.9" fill="none" stroke="#0a0af8" stroke-width="1.1"/></svg>
<span class="t" style="left:223px;top:257.24px;font-size:12px;color:#000;transform:scaleX(0.8868)">013_Right_RGB</span>
<svg style="left:162.6px;top:274.5px" width="12" height="12" viewBox="-6 -6 12 12"><path d="M -1.8 -4.2 L 2.4 0 L -1.8 4.2" fill="none" stroke="#a0a0a0" stroke-width="1.5"/></svg>
<div class="a" style="left:182px;top:274px;width:13px;height:13px;box-sizing:border-box;border:1px solid #333;background:#fff"></div>
<svg style="left:201px;top:272px" width="16" height="16" viewBox="0 0 16 16">
<rect x="2.2" y="1" width="11.8" height="13.6" fill="#c9c9c9"/>
<rect x="0.65" y="3.55" width="5.2" height="8.9" fill="none" stroke="#0a0af8" stroke-width="1.1"/><rect x="9.75" y="3.55" width="5.5" height="8.9" fill="none" stroke="#0a0af8" stroke-width="1.1"/></svg>
<span class="t" style="left:223px;top:274.24px;font-size:12px;color:#000;transform:scaleX(0.8947)">013_Forward_RGB</span>
<svg style="left:162.6px;top:291.5px" width="12" height="12" viewBox="-6 -6 12 12"><path d="M -1.8 -4.2 L 2.4 0 L -1.8 4.2" fill="none" stroke="#a0a0a0" stroke-width="1.5"/></svg>
<div class="a" style="left:182px;top:291px;width:13px;height:13px;box-sizing:border-box;border:1px solid #333;background:#fff"></div>
<svg style="left:201px;top:289px" width="16" height="16" viewBox="0 0 16 16">
<rect x="2.2" y="1" width="11.8" height="13.6" fill="#c9c9c9"/>
<rect x="0.65" y="3.55" width="5.2" height="8.9" fill="none" stroke="#0a0af8" stroke-width="1.1"/><rect x="9.75" y="3.55" width="5.5" height="8.9" fill="none" stroke="#0a0af8" stroke-width="1.1"/></svg>
<span class="t" style="left:223px;top:291.24px;font-size:12px;color:#000;transform:scaleX(0.9013)">013_Backward_RGB</span>
<svg style="left:142.5px;top:308.2px" width="12" height="12" viewBox="-6 -6 12 12"><path d="M -4.2 -2.1 L 0 2.1 L 4.2 -2.1" fill="none" stroke="#333" stroke-width="1.7"/></svg>
<div class="a" style="left:162px;top:308px;width:13px;height:13px;box-sizing:border-box;border:1px solid #333;background:#fff"></div>
<svg style="left:181px;top:306px" width="16" height="17" viewBox="0 0 16 17">
<path d="M 9.6 0 V 8 M 7 5.6 L 9.6 8.4 L 12.2 5.6" fill="none" stroke="#000" stroke-width="1.15"/>
<path d="M 1.3 13.5 H 15.8 M 1.8 11 V 16 M 15.3 11 V 16" stroke="#000" stroke-width="1.1" fill="none"/>
<path d="M 9.6 10.9 L 12.2 13.5 L 9.6 16.1 L 7 13.5 Z" fill="#1030ff"/></svg>
<span class="t" style="left:203px;top:308.24px;font-size:12px;color:#000;transform:scaleX(0.8487)">014</span>
<svg style="left:162.6px;top:325.5px" width="12" height="12" viewBox="-6 -6 12 12"><path d="M -1.8 -4.2 L 2.4 0 L -1.8 4.2" fill="none" stroke="#a0a0a0" stroke-width="1.5"/></svg>
<div class="a" style="left:182px;top:325px;width:13px;height:13px;box-sizing:border-box;border:1px solid #333;background:#fff"></div>
<svg style="left:201px;top:323px" width="16" height="16" viewBox="0 0 16 16">
<rect x="2.2" y="1" width="11.8" height="13.6" fill="#c9c9c9"/>
<rect x="0.65" y="3.55" width="5.2" height="8.9" fill="none" stroke="#0a0af8" stroke-width="1.1"/><rect x="9.75" y="3.55" width="5.5" height="8.9" fill="none" stroke="#0a0af8" stroke-width="1.1"/></svg>
<span class="t" style="left:223px;top:325.24px;font-size:12px;color:#000;transform:scaleX(0.9047)">014_Nadir_RGBN</span>
<svg style="left:162.6px;top:342.5px" width="12" height="12" viewBox="-6 -6 12 12"><path d="M -1.8 -4.2 L 2.4 0 L -1.8 4.2" fill="none" stroke="#a0a0a0" stroke-width="1.5"/></svg>
<div class="a" style="left:182px;top:342px;width:13px;height:13px;box-sizing:border-box;border:1px solid #333;background:#fff"></div>
<svg style="left:201px;top:340px" width="16" height="16" viewBox="0 0 16 16">
<rect x="2.2" y="1" width="11.8" height="13.6" fill="#c9c9c9"/>
<rect x="0.65" y="3.55" width="5.2" height="8.9" fill="none" stroke="#0a0af8" stroke-width="1.1"/><rect x="9.75" y="3.55" width="5.5" height="8.9" fill="none" stroke="#0a0af8" stroke-width="1.1"/></svg>
<span class="t" style="left:223px;top:342.24px;font-size:12px;color:#000;transform:scaleX(0.8754)">014_Left_RGB</span>
<svg style="left:162.6px;top:359.5px" width="12" height="12" viewBox="-6 -6 12 12"><path d="M -1.8 -4.2 L 2.4 0 L -1.8 4.2" fill="none" stroke="#a0a0a0" stroke-width="1.5"/></svg>
<div class="a" style="left:182px;top:359px;width:13px;height:13px;box-sizing:border-box;border:1px solid #333;background:#fff"></div>
<svg style="left:201px;top:357px" width="16" height="16" viewBox="0 0 16 16">
<rect x="2.2" y="1" width="11.8" height="13.6" fill="#c9c9c9"/>
<rect x="0.65" y="3.55" width="5.2" height="8.9" fill="none" stroke="#0a0af8" stroke-width="1.1"/><rect x="9.75" y="3.55" width="5.5" height="8.9" fill="none" stroke="#0a0af8" stroke-width="1.1"/></svg>
<span class="t" style="left:223px;top:359.24px;font-size:12px;color:#000;transform:scaleX(0.8868)">014_Right_RGB</span>
<svg style="left:162.6px;top:376.5px" width="12" height="12" viewBox="-6 -6 12 12"><path d="M -1.8 -4.2 L 2.4 0 L -1.8 4.2" fill="none" stroke="#a0a0a0" stroke-width="1.5"/></svg>
<div class="a" style="left:182px;top:376px;width:13px;height:13px;box-sizing:border-box;border:1px solid #333;background:#fff"></div>
<svg style="left:201px;top:374px" width="16" height="16" viewBox="0 0 16 16">
<rect x="2.2" y="1" width="11.8" height="13.6" fill="#c9c9c9"/>
<rect x="0.65" y="3.55" width="5.2" height="8.9" fill="none" stroke="#0a0af8" stroke-width="1.1"/><rect x="9.75" y="3.55" width="5.5" height="8.9" fill="none" stroke="#0a0af8" stroke-width="1.1"/></svg>
<span class="t" style="left:223px;top:376.24px;font-size:12px;color:#000;transform:scaleX(0.8947)">014_Forward_RGB</span>
<svg style="left:162.6px;top:393.5px" width="12" height="12" viewBox="-6 -6 12 12"><path d="M -1.8 -4.2 L 2.4 0 L -1.8 4.2" fill="none" stroke="#a0a0a0" stroke-width="1.5"/></svg>
<div class="a" style="left:182px;top:393px;width:13px;height:13px;box-sizing:border-box;border:1px solid #333;background:#fff"></div>
<svg style="left:201px;top:391px" width="16" height="16" viewBox="0 0 16 16">
<rect x="2.2" y="1" width="11.8" height="13.6" fill="#c9c9c9"/>
<rect x="0.65" y="3.55" width="5.2" height="8.9" fill="none" stroke="#0a0af8" stroke-width="1.1"/><rect x="9.75" y="3.55" width="5.5" height="8.9" fill="none" stroke="#0a0af8" stroke-width="1.1"/></svg>
<span class="t" style="left:223px;top:393.24px;font-size:12px;color:#000;transform:scaleX(0.9013)">014_Backward_RGB</span>
<svg style="left:142.5px;top:410.2px" width="12" height="12" viewBox="-6 -6 12 12"><path d="M -4.2 -2.1 L 0 2.1 L 4.2 -2.1" fill="none" stroke="#333" stroke-width="1.7"/></svg>
<div class="a" style="left:162px;top:410px;width:13px;height:13px;box-sizing:border-box;border:1px solid #333;background:#fff"></div>
<svg style="left:181px;top:408px" width="16" height="17" viewBox="0 0 16 17">
<path d="M 9.6 0 V 8 M 7 5.6 L 9.6 8.4 L 12.2 5.6" fill="none" stroke="#000" stroke-width="1.15"/>
<path d="M 1.3 13.5 H 15.8 M 1.8 11 V 16 M 15.3 11 V 16" stroke="#000" stroke-width="1.1" fill="none"/>
<path d="M 9.6 10.9 L 12.2 13.5 L 9.6 16.1 L 7 13.5 Z" fill="#1030ff"/></svg>
<span class="t" style="left:203px;top:410.24px;font-size:12px;color:#000;transform:scaleX(0.8487)">015</span>
<svg style="left:162.6px;top:427.5px" width="12" height="12" viewBox="-6 -6 12 12"><path d="M -1.8 -4.2 L 2.4 0 L -1.8 4.2" fill="none" stroke="#a0a0a0" stroke-width="1.5"/></svg>
<div class="a" style="left:182px;top:427px;width:13px;height:13px;box-sizing:border-box;border:1px solid #333;background:#fff"></div>
<svg style="left:201px;top:425px" width="16" height="16" viewBox="0 0 16 16">
<rect x="2.2" y="1" width="11.8" height="13.6" fill="#c9c9c9"/>
<rect x="0.65" y="3.55" width="5.2" height="8.9" fill="none" stroke="#0a0af8" stroke-width="1.1"/><rect x="9.75" y="3.55" width="5.5" height="8.9" fill="none" stroke="#0a0af8" stroke-width="1.1"/></svg>
<span class="t" style="left:223px;top:427.24px;font-size:12px;color:#000;transform:scaleX(0.9047)">015_Nadir_RGBN</span>
<svg style="left:162.6px;top:444.5px" width="12" height="12" viewBox="-6 -6 12 12"><path d="M -1.8 -4.2 L 2.4 0 L -1.8 4.2" fill="none" stroke="#a0a0a0" stroke-width="1.5"/></svg>
<div class="a" style="left:182px;top:444px;width:13px;height:13px;box-sizing:border-box;border:1px solid #333;background:#fff"></div>
<svg style="left:201px;top:442px" width="16" height="16" viewBox="0 0 16 16">
<rect x="2.2" y="1" width="11.8" height="13.6" fill="#c9c9c9"/>
<rect x="0.65" y="3.55" width="5.2" height="8.9" fill="none" stroke="#0a0af8" stroke-width="1.1"/><rect x="9.75" y="3.55" width="5.5" height="8.9" fill="none" stroke="#0a0af8" stroke-width="1.1"/></svg>
<span class="t" style="left:223px;top:444.24px;font-size:12px;color:#000;transform:scaleX(0.8754)">015_Left_RGB</span>
<svg style="left:162.6px;top:461.5px" width="12" height="12" viewBox="-6 -6 12 12"><path d="M -1.8 -4.2 L 2.4 0 L -1.8 4.2" fill="none" stroke="#a0a0a0" stroke-width="1.5"/></svg>
<div class="a" style="left:182px;top:461px;width:13px;height:13px;box-sizing:border-box;border:1px solid #333;background:#fff"></div>
<svg style="left:201px;top:459px" width="16" height="16" viewBox="0 0 16 16">
<rect x="2.2" y="1" width="11.8" height="13.6" fill="#c9c9c9"/>
<rect x="0.65" y="3.55" width="5.2" height="8.9" fill="none" stroke="#0a0af8" stroke-width="1.1"/><rect x="9.75" y="3.55" width="5.5" height="8.9" fill="none" stroke="#0a0af8" stroke-width="1.1"/></svg>
<span class="t" style="left:223px;top:461.24px;font-size:12px;color:#000;transform:scaleX(0.8868)">015_Right_RGB</span>
<svg style="left:162.6px;top:478.5px" width="12" height="12" viewBox="-6 -6 12 12"><path d="M -1.8 -4.2 L 2.4 0 L -1.8 4.2" fill="none" stroke="#a0a0a0" stroke-width="1.5"/></svg>
<div class="a" style="left:182px;top:478px;width:13px;height:13px;box-sizing:border-box;border:1px solid #333;background:#fff"></div>
<svg style="left:201px;top:476px" width="16" height="16" viewBox="0 0 16 16">
<rect x="2.2" y="1" width="11.8" height="13.6" fill="#c9c9c9"/>
<rect x="0.65" y="3.55" width="5.2" height="8.9" fill="none" stroke="#0a0af8" stroke-width="1.1"/><rect x="9.75" y="3.55" width="5.5" height="8.9" fill="none" stroke="#0a0af8" stroke-width="1.1"/></svg>
<span class="t" style="left:223px;top:478.24px;font-size:12px;color:#000;transform:scaleX(0.8947)">015_Forward_RGB</span>
<svg style="left:162.6px;top:495.5px" width="12" height="12" viewBox="-6 -6 12 12"><path d="M -1.8 -4.2 L 2.4 0 L -1.8 4.2" fill="none" stroke="#a0a0a0" stroke-width="1.5"/></svg>
<div class="a" style="left:182px;top:495px;width:13px;height:13px;box-sizing:border-box;border:1px solid #333;background:#fff"></div>
<svg style="left:201px;top:493px" width="16" height="16" viewBox="0 0 16 16">
<rect x="2.2" y="1" width="11.8" height="13.6" fill="#c9c9c9"/>
<rect x="0.65" y="3.55" width="5.2" height="8.9" fill="none" stroke="#0a0af8" stroke-width="1.1"/><rect x="9.75" y="3.55" width="5.5" height="8.9" fill="none" stroke="#0a0af8" stroke-width="1.1"/></svg>
<span class="t" style="left:223px;top:495.24px;font-size:12px;color:#000;transform:scaleX(0.9013)">015_Backward_RGB</span>
<svg style="left:142.5px;top:512.2px" width="12" height="12" viewBox="-6 -6 12 12"><path d="M -4.2 -2.1 L 0 2.1 L 4.2 -2.1" fill="none" stroke="#333" stroke-width="1.7"/></svg>
<div class="a" style="left:162px;top:512px;width:13px;height:13px;box-sizing:border-box;border:1px solid #333;background:#fff"></div>
<svg style="left:181px;top:510px" width="16" height="17" viewBox="0 0 16 17">
<path d="M 9.6 0 V 8 M 7 5.6 L 9.6 8.4 L 12.2 5.6" fill="none" stroke="#000" stroke-width="1.15"/>
<path d="M 1.3 13.5 H 15.8 M 1.8 11 V 16 M 15.3 11 V 16" stroke="#000" stroke-width="1.1" fill="none"/>
<path d="M 9.6 10.9 L 12.2 13.5 L 9.6 16.1 L 7 13.5 Z" fill="#1030ff"/></svg>
<span class="t" style="left:203px;top:512.24px;font-size:12px;color:#000;transform:scaleX(0.8487)">016</span>
<svg style="left:162.6px;top:529.5px" width="12" height="12" viewBox="-6 -6 12 12"><path d="M -1.8 -4.2 L 2.4 0 L -1.8 4.2" fill="none" stroke="#a0a0a0" stroke-width="1.5"/></svg>
<div class="a" style="left:182px;top:529px;width:13px;height:13px;box-sizing:border-box;border:1px solid #333;background:#fff"></div>
<svg style="left:201px;top:527px" width="16" height="16" viewBox="0 0 16 16">
<rect x="2.2" y="1" width="11.8" height="13.6" fill="#c9c9c9"/>
<rect x="0.65" y="3.55" width="5.2" height="8.9" fill="none" stroke="#0a0af8" stroke-width="1.1"/><rect x="9.75" y="3.55" width="5.5" height="8.9" fill="none" stroke="#0a0af8" stroke-width="1.1"/></svg>
<span class="t" style="left:223px;top:529.24px;font-size:12px;color:#000;transform:scaleX(0.9047)">016_Nadir_RGBN</span>
<svg style="left:162.6px;top:546.5px" width="12" height="12" viewBox="-6 -6 12 12"><path d="M -1.8 -4.2 L 2.4 0 L -1.8 4.2" fill="none" stroke="#a0a0a0" stroke-width="1.5"/></svg>
<div class="a" style="left:182px;top:546px;width:13px;height:13px;box-sizing:border-box;border:1px solid #333;background:#fff"></div>
<svg style="left:201px;top:544px" width="16" height="16" viewBox="0 0 16 16">
<rect x="2.2" y="1" width="11.8" height="13.6" fill="#c9c9c9"/>
<rect x="0.65" y="3.55" width="5.2" height="8.9" fill="none" stroke="#0a0af8" stroke-width="1.1"/><rect x="9.75" y="3.55" width="5.5" height="8.9" fill="none" stroke="#0a0af8" stroke-width="1.1"/></svg>
<span class="t" style="left:223px;top:546.24px;font-size:12px;color:#000;transform:scaleX(0.8754)">016_Left_RGB</span>
</div>
<div class="a" style="left:0px;top:716.8px;width:405.6px;height:17.8px;background:#d5d5d5;"></div>
<span class="t" style="left:2.2px;top:720.24px;font-size:12px;color:#000;transform:scaleX(0.8968)">Filters</span>
<svg style="left:374px;top:717.2px" width="32" height="18" viewBox="0 0 32 18">
<g fill="#d5d5d5" stroke="#000" stroke-width="1.2"><rect x="5.9" y="5.5" width="5" height="4.6"/><path d="M 5.3 5.9 H 11.5" stroke-width="1.8"/><rect x="3.6" y="8.3" width="5" height="4.6"/><path d="M 3 8.7 H 9.2" stroke-width="1.8"/></g>
<path d="M 19.6 5.4 L 26.4 12 M 26.4 5.4 L 19.6 12" stroke="#000" stroke-width="1.7" fill="none"/></svg>
<div class="a" style="left:0px;top:738px;width:27px;height:22px;background:#e1e1e1;border:1px solid #adadad;box-sizing:border-box;border-left:none;"></div>
<svg style="left:6px;top:742px" width="14" height="14" viewBox="0 0 14 14"><path d="M 1.6 0.8 H 10.2 L 13.2 3.8 V 11.8 Q 13.2 13.2 11.8 13.2 H 1.6 Q 0.8 13.2 0.8 12.4 V 1.6 Q 0.8 0.8 1.6 0.8 Z" fill="#000"/><rect x="2.6" y="2.4" width="7" height="3" fill="#e1e1e1"/><circle cx="7" cy="9.4" r="2" fill="#e1e1e1"/></svg>
<div class="a" style="left:29px;top:738px;width:27.5px;height:22px;background:#e1e1e1;border:1px solid #adadad;box-sizing:border-box;"></div>
<svg style="left:37px;top:742px" width="12" height="14" viewBox="0 0 12 14"><path d="M 3.6 0.6 H 8.4 V 1.6 H 11.4 V 3.2 H 0.6 V 1.6 H 3.6 Z" fill="#000"/><path d="M 1.6 4.2 H 10.4 V 12.2 Q 10.4 13.4 9.2 13.4 H 2.8 Q 1.6 13.4 1.6 12.2 Z" fill="#000"/><path d="M 4 6.6 L 8 10.8 M 8 6.6 L 4 10.8" stroke="#e1e1e1" stroke-width="1.3"/></svg>
<div class="a" style="left:58px;top:739px;width:217.5px;height:20px;background:#fff;border:1px solid #7a7a7a;box-sizing:border-box;"></div>
<svg style="left:261px;top:744px" width="12" height="12" viewBox="-6 -6 12 12"><path d="M -3.8 -1.8 L 0 1.8 L 3.8 -1.8" fill="none" stroke="#444" stroke-width="1.2"/></svg>
<div class="a" style="left:277px;top:738px;width:78px;height:21.5px;background:#cccccc;border:1px solid #bfbfbf;box-sizing:border-box;"></div>
<span class="t" style="left:301.6px;top:742.44px;font-size:12px;color:#838383;transform:scaleX(0.8857)">Apply</span>
<div class="a" style="left:357px;top:738px;width:48px;height:21.5px;background:#e1e1e1;border:1px solid #adadad;box-sizing:border-box;"></div>
<span class="t" style="left:366.2px;top:742.44px;font-size:12px;color:#000;transform:scaleX(0.8993)">Reset</span>
<div class="a" style="left:0px;top:761px;width:406px;height:159px;background:#f0f0f0;border:1px solid #828790;box-sizing:border-box;border-left:none;"></div>
<div class="a" style="left:390px;top:779px;width:14.5px;height:91px;background:#cdcdcd;"></div>
<svg style="left:390.6px;top:765.5px" width="12" height="12" viewBox="-6 -6 12 12"><path d="M -3.5 1.8 L 0 -1.8 L 3.5 1.8" fill="none" stroke="#555" stroke-width="2"/></svg>
<svg style="left:390.6px;top:905px" width="12" height="12" viewBox="-6 -6 12 12"><path d="M -3.5 -1.8 L 0 1.8 L 3.5 -1.8" fill="none" stroke="#555" stroke-width="2"/></svg>
<svg style="left:-0.5px;top:764px" width="12" height="12" viewBox="-6 -6 12 12"><path d="M -4.1 -2.1 L 0 2.1 L 4.1 -2.1" fill="none" stroke="#333" stroke-width="1.7"/></svg>
<span class="t" style="left:39px;top:764.84px;font-size:12px;color:#000;font-weight:bold;transform:scaleX(1.0972)">Swaths</span>
<svg style="left:14.0px;top:781.5px" width="12" height="12" viewBox="-6 -6 12 12"><path d="M -1.8 -4.2 L 2.4 0 L -1.8 4.2" fill="none" stroke="#a0a0a0" stroke-width="1.5"/></svg>
<span class="t" style="left:53.5px;top:781.84px;font-size:12px;color:#000;transform:scaleX(0.9938)">Views</span>
<svg style="left:-0.5px;top:798px" width="12" height="12" viewBox="-6 -6 12 12"><path d="M -4.1 -2.1 L 0 2.1 L 4.1 -2.1" fill="none" stroke="#333" stroke-width="1.7"/></svg>
<span class="t" style="left:39px;top:798.84px;font-size:12px;color:#000;font-weight:bold;transform:scaleX(1.2331)">Images</span>
<svg style="left:14.0px;top:815.5px" width="12" height="12" viewBox="-6 -6 12 12"><path d="M -1.8 -4.2 L 2.4 0 L -1.8 4.2" fill="none" stroke="#a0a0a0" stroke-width="1.5"/></svg>
<span class="t" style="left:53.5px;top:815.84px;font-size:12px;color:#000;transform:scaleX(0.9938)">Views</span>
<svg style="left:13.8px;top:832px" width="12" height="12" viewBox="-6 -6 12 12"><path d="M -4.1 -2.1 L 0 2.1 L 4.1 -2.1" fill="none" stroke="#333" stroke-width="1.7"/></svg>
<span class="t" style="left:53.5px;top:832.84px;font-size:12px;color:#000;transform:scaleX(0.9844)">Bands</span>
<svg style="left:28.0px;top:849.5px" width="12" height="12" viewBox="-6 -6 12 12"><path d="M -1.8 -4.2 L 2.4 0 L -1.8 4.2" fill="none" stroke="#a0a0a0" stroke-width="1.5"/></svg>
<span class="t" style="left:67.4px;top:849.84px;font-size:12px;color:#000;transform:scaleX(1.0763)">Type</span>
<svg style="left:28.0px;top:866.5px" width="12" height="12" viewBox="-6 -6 12 12"><path d="M -1.8 -4.2 L 2.4 0 L -1.8 4.2" fill="none" stroke="#a0a0a0" stroke-width="1.5"/></svg>
<span class="t" style="left:67.4px;top:866.84px;font-size:12px;color:#000;transform:scaleX(0.9619)">Channel</span>
<svg style="left:-0.5px;top:883px" width="12" height="12" viewBox="-6 -6 12 12"><path d="M -4.1 -2.1 L 0 2.1 L 4.1 -2.1" fill="none" stroke="#333" stroke-width="1.7"/></svg>
<span class="t" style="left:39px;top:883.84px;font-size:12px;color:#000;font-weight:bold;transform:scaleX(1.0784)">Capture</span>
<svg style="left:14.0px;top:900.5px" width="12" height="12" viewBox="-6 -6 12 12"><path d="M -1.8 -4.2 L 2.4 0 L -1.8 4.2" fill="none" stroke="#a0a0a0" stroke-width="1.5"/></svg>
<span class="t" style="left:53.5px;top:900.84px;font-size:12px;color:#000;transform:scaleX(0.9583)">Contains</span>
<div class="a" style="left:0px;top:921px;width:38px;height:18px;background:#f0f0f0;border:1px solid #d9d9d9;box-sizing:border-box;border-left:none;border-top:none;"></div>
<div class="a" style="left:37px;top:920px;width:55px;height:21px;background:#fff;border:1px solid #d9d9d9;box-sizing:border-box;border-top:none;"></div>
<span class="t" style="left:9.2px;top:923.64px;font-size:12px;color:#000;transform:scaleX(0.8487)">Log</span>
<span class="t" style="left:50.3px;top:924.04px;font-size:12px;color:#000;transform:scaleX(0.8968)">Filters</span>
<span class="t" style="left:416.3px;top:925.44px;font-size:12px;color:#000;transform:scaleX(0.9070)">Lat: 47.4408945389, Lon: 9.3390914241</span>
<div class="a" style="left:1105px;top:923px;width:1px;height:16px;background:#c9c9c9;"></div>
<div class="a" style="left:1131px;top:923px;width:1px;height:16px;background:#c9c9c9;"></div>
<div class="a" style="left:1142px;top:923px;width:1px;height:16px;background:#c9c9c9;"></div>
<div class="a" style="left:0px;top:960px;width:1147px;height:3px;background:#3f4347;"></div>
<div class="a" style="left:0px;top:959px;width:1147px;height:1px;background:#d8d8d8;"></div>
<svg style="left:411px;top:110px" width="18" height="16" viewBox="0 0 18 16">
<defs><linearGradient id="wg" x1="0" y1="0" x2="0" y2="1"><stop offset="0" stop-color="#fdf0b0"/><stop offset="1" stop-color="#f6c341"/></linearGradient></defs>
<path d="M 9 1.2 L 16.8 14.6 H 1.2 Z" fill="url(#wg)" stroke="#eea026" stroke-width="1.3" stroke-linejoin="round"/><path d="M 9 3.6 L 14.8 13.5 H 3.2 Z" fill="none" stroke="#fff6d8" stroke-width="0.9" stroke-linejoin="round"/>
<path d="M 9 5.6 V 10.4" stroke="#9a9a9a" stroke-width="1.6"/><circle cx="9" cy="12.4" r="0.95" fill="#9a9a9a"/></svg>
<div class="a" style="left:428px;top:108px;width:128px;height:20px;background:#e1e1e1;border:1px solid #adadad;box-sizing:border-box;"></div>
<span class="t" style="left:431.4px;top:110.23px;font-size:13px;color:#000;transform:scaleX(0.7850)">Ortho_RGBN_Full</span>
<svg style="left:542px;top:115.6px" width="9" height="6"><path d="M 0.5 0.4 H 8.1 L 4.3 4.7 Z" fill="#000"/></svg>
<svg style="left:560px;top:106px" width="23" height="23" viewBox="0 0 23 23">
<defs><linearGradient id="rg1" x1="0" y1="0" x2="1" y2="1"><stop offset="0" stop-color="#7cf070"/><stop offset="1" stop-color="#15902a"/></linearGradient>
<linearGradient id="rr1" x1="0" y1="0" x2="1" y2="1"><stop offset="0" stop-color="#f47070"/><stop offset="1" stop-color="#a01010"/></linearGradient></defs>
<path d="M 1.4 11 C 0.4 4.4 7.6 -0.4 14 2.2 L 15.6 0.2 L 21.6 10.2 L 10 9.6 L 11.8 7 C 8.8 6 6.6 7.8 7 11.6 Z" fill="url(#rg1)" stroke="#2a8a30" stroke-width="0.5"/>
<path d="M 21.6 12 C 22.6 18.6 15.4 23.4 9 20.8 L 7.4 22.8 L 1.4 12.8 L 13 13.4 L 11.2 16 C 14.2 17 16.4 15.2 16 11.4 Z" fill="url(#rr1)" stroke="#8a2020" stroke-width="0.5"/></svg>
<svg style="left:0;top:0" width="1147" height="963" viewBox="0 0 1147 963"><defs><clipPath id="mapclip"><rect x="411" y="142" width="736" height="772"/></clipPath></defs><g clip-path="url(#mapclip)">
<rect x="411" y="142" width="736" height="772" fill="#f2efe9"/>
<polygon points="411.1,184.4 419.6,174.6 431.9,164.9 448.9,160.0 457.5,151.4 475.8,150.2 478.2,160.0 473.4,172.2 475.8,186.8 486.8,189.3 490.4,183.2 517.3,183.2 518.5,196.6 532.0,200.3 551.5,202.7 575.9,206.4 615.0,203.9 624.7,200.3 629.6,205.1 619.8,213.7 607.6,221.0 597.9,233.2 585.7,240.5 585.7,247.9 593.0,260.1 597.9,254.0 612.5,255.2 615.0,269.8 607.6,279.6 604.0,294.2 597.9,306.5 590.5,311.3 580.8,318.7 571.0,319.9 561.2,313.8 551.5,310.1 551.5,301.6 541.7,296.7 532.0,299.1 517.3,300.4 519.7,284.5 521.0,269.8 514.9,260.1 502.7,255.2 495.3,256.4 497.8,265.0 488.0,279.6 480.7,269.8 469.7,272.3 469.7,260.1 453.8,274.7 434.3,277.2 419.6,269.8 411.1,267.4" fill="#add19e" />
<polygon points="411.1,282.0 427.0,277.2 441.6,275.9 436.7,282.0 428.2,289.4 427.0,299.1 420.9,308.9 411.1,313.8" fill="#add19e" />
<polygon points="453.8,338.0 457.5,323.5 463.6,318.7 462.4,301.6 469.7,300.4 478.2,308.9 485.6,318.7 475.8,326.0 470.9,338.0" fill="#add19e" />
<polygon points="551.5,301.6 561.2,297.9 573.5,301.6 575.9,308.9 561.2,312.6 551.5,308.9" fill="#cdebb0" />
<polygon points="478.2,142.9 485.6,142.4 466.0,155.1 453.8,162.4 434.3,169.7 427.0,174.6 429.4,167.3 448.9,158.8" fill="#add19e" />
<polygon points="512.4,147.8 517.3,149.0 518.5,167.3 519.7,179.5 514.9,181.9 516.1,164.9" fill="#add19e" />
<polygon points="492.9,167.3 512.4,161.2 514.9,163.6 495.3,169.7" fill="#add19e" />
<polygon points="575.9,179.5 583.2,163.6 585.7,164.9 578.8,181.9" fill="#add19e" />
<polygon points="639.4,142.9 649.1,142.9 646.7,152.6 651.6,164.9 649.1,177.1 644.3,184.4 639.4,177.1 643.0,164.9 634.5,174.6 624.7,179.5 622.3,174.6 634.5,164.9 640.6,152.6" fill="#add19e" />
<polygon points="649.1,240.5 663.8,235.7 673.6,240.5 663.8,245.4 651.6,246.6" fill="#add19e" />
<polygon points="612.5,286.9 624.7,279.6 639.4,277.2 658.9,272.3 673.6,274.7 673.6,284.5 658.9,289.4 649.1,299.1 639.4,313.8 624.7,321.1 615.0,323.5 619.8,308.9 634.5,304.0 644.3,289.4 629.6,286.9 619.8,296.7" fill="#add19e" />
<polygon points="632.1,330.9 639.4,323.5 649.1,321.1 646.7,330.9 639.4,338.0 633.3,338.0" fill="#add19e" />
<polygon points="617.4,216.1 624.7,208.8 629.6,211.2 622.3,218.6" fill="#add19e" />
<polygon points="658.9,221.0 673.6,230.8 671.1,235.7 656.5,225.9" fill="#d9d0c9" />
<polygon points="749.1,192.4 763.7,186.1 788.8,179.8 813.9,173.6 826.5,167.3 847.4,163.1 857.9,169.4 857.9,192.4 889.2,186.1 897.6,200.8 897.6,229.0 805.5,229.0 788.8,217.5 772.1,207.1 759.5,209.1 751.1,200.8" fill="#e0dfdf" />
<polygon points="680.0,142.2 692.6,142.2 700.9,148.5 707.2,156.8 698.8,154.7 692.6,150.6 680.0,147.4" fill="#add19e" />
<polygon points="715.6,142.2 725.0,142.2 731.3,148.5 723.9,150.6" fill="#add19e" />
<polygon points="692.6,179.8 700.9,169.4 713.5,165.2 721.8,169.4 715.6,179.8 705.1,177.8 696.7,184.0" fill="#add19e" />
<polygon points="686.3,193.5 698.8,192.4 707.2,200.8 713.5,217.5 705.1,225.9 696.7,221.7 698.8,209.1 692.6,200.8" fill="#add19e" />
<polygon points="723.9,167.3 736.5,158.9 749.1,163.1 742.8,171.5 732.3,173.6" fill="#add19e" />
<polygon points="719.8,177.8 728.1,184.0 723.9,194.5 717.7,190.3" fill="#add19e" />
<polygon points="730.2,186.1 736.5,181.9 734.4,192.4" fill="#add19e" />
<polygon points="880.9,146.4 891.3,142.2 897.6,144.3 897.6,154.7 889.2,156.8 880.9,152.6" fill="#add19e" />
<polygon points="742.8,225.9 755.3,219.6 763.7,215.4 759.5,223.8 749.1,229.0" fill="#add19e" />
<polygon points="705.1,200.8 715.6,188.2 721.8,175.7 725.0,177.8 719.8,190.3 713.5,200.8 717.7,209.1 732.3,217.5 740.7,229.0 732.3,229.0 721.8,219.6 709.3,211.2" fill="#add19e" />
<polygon points="797.2,163.1 813.9,161.0 813.9,179.8 805.5,179.8 797.2,186.1 793.0,179.8 801.4,173.6" fill="#cdebb0" />
<polygon points="803.5,162.1 813.9,161.4 813.9,169.4 803.5,169.4" fill="#c8facc" />
<polygon points="813.9,158.9 824.4,158.9 824.4,177.8 816.0,177.8" fill="#e8d5c4" />
<polygon points="901.8,161.0 920.0,158.9 920.0,177.8 903.9,177.8" fill="#d4e4ee" />
<polygon points="948.8,142.2 1003.3,142.2 999.1,150.6 986.5,152.6 976.1,161.0 976.1,179.8 971.9,200.8 969.8,219.6 961.4,229.0 930.0,229.0 938.4,207.1 938.4,190.3 946.8,175.7 948.8,158.9 942.6,150.6" fill="#add19e" />
<polygon points="1072.3,207.1 1087.0,205.0 1087.0,211.2 1074.4,212.3" fill="#add19e" />
<polygon points="1095.3,167.3 1116.2,165.2 1128.8,163.1 1128.8,166.2 1116.2,169.4 1097.4,172.5" fill="#add19e" />
<polygon points="1020.0,142.2 1028.4,142.2 1026.3,148.5 1021.0,147.4" fill="#add19e" />
<polygon points="907.0,161.0 917.5,161.0 918.5,177.8 907.0,178.8" fill="#d4e4ee" />
<polygon points="1053.5,142.2 1095.3,142.2 1099.5,150.6 1091.1,158.9 1074.4,161.0 1057.7,156.8" fill="#e0dfdf" />
<polygon points="1007.4,169.4 1024.2,169.4 1026.3,184.0 1011.6,186.1" fill="#e0dfdf" />
<polygon points="1049.3,171.5 1066.0,173.6 1066.0,190.3 1095.3,186.1 1095.3,202.9 1061.8,209.1 1053.5,200.8" fill="#e0dfdf" />
<polygon points="907.0,215.4 930.0,215.4 930.0,229.0 907.0,229.0" fill="#e0dfdf" />
<polygon points="429.4,344.6 439.2,334.9 456.3,330.0 478.2,330.0 485.6,339.8 483.1,349.5 470.9,354.4 463.6,349.5 453.8,354.4 439.2,354.4 431.9,356.9" fill="#add19e" />
<polygon points="411.1,378.8 422.1,372.7 431.9,378.8 434.3,393.5 441.6,403.2 451.4,408.1 448.9,400.8 453.8,397.1 466.0,400.8 478.2,398.4 490.4,393.5 492.9,386.2 478.2,391.0 466.0,388.6 448.9,383.7 445.3,378.8 448.9,371.5 461.2,372.7 468.5,380.0 485.6,382.5 497.8,376.4 512.4,378.8 527.1,375.2 541.7,378.8 546.6,387.4 563.7,387.4 575.9,388.6 585.7,400.8 590.5,413.0 600.3,427.7 602.8,437.4 595.4,447.2 585.7,449.6 575.9,444.7 561.2,439.9 551.5,447.2 544.2,449.6 549.0,439.9 561.2,432.5 568.6,427.7 563.7,420.3 553.9,415.4 553.9,405.7 549.0,403.2 536.8,413.0 524.6,417.9 510.0,422.8 507.5,427.7 512.4,439.9 507.5,447.2 497.8,449.6 495.3,442.3 497.8,432.5 490.4,427.7 480.7,437.4 473.4,442.3 463.6,439.9 458.7,447.2 466.0,454.5 478.2,459.4 483.1,463.1 495.3,458.2 507.5,466.7 502.7,476.5 495.3,481.4 478.2,478.9 466.0,486.2 453.8,486.2 427.0,493.6 419.6,476.5 431.9,464.3 436.7,452.1 427.0,449.6 417.2,457.0 411.1,461.8" fill="#add19e" />
<polygon points="512.4,474.0 519.7,474.0 522.2,481.4 512.4,488.7 510.0,498.5 502.7,500.9 502.7,488.7 507.5,481.4" fill="#add19e" />
<polygon points="441.6,457.0 448.9,450.8 457.5,454.5 456.3,464.3 446.5,466.7" fill="#cdebb0" />
<polygon points="612.5,378.8 622.3,375.2 624.7,386.2 615.0,391.0" fill="#cdebb0" />
<polygon points="588.1,427.7 597.9,426.4 600.3,435.0 590.5,437.4" fill="#cdebb0" />
<polygon points="411.1,493.6 429.4,488.7 453.8,486.2 475.8,486.2 488.0,500.9 478.2,513.1 461.2,522.9 453.8,530.0 411.1,530.0" fill="#e0dfdf" />
<polygon points="556.4,344.6 575.9,344.6 580.8,378.8 600.3,386.2 624.7,388.6 634.5,378.8 649.1,369.1 658.9,354.4 651.6,334.9 639.4,334.9 634.5,352.0 624.7,359.3 605.2,356.9 600.3,378.8 585.7,378.8 575.9,359.3 561.2,359.3" fill="#e0dfdf" />
<polygon points="595.4,398.4 619.8,395.9 622.3,415.4 600.3,415.4" fill="#e0dfdf" />
<polygon points="639.4,373.9 658.9,369.1 676.0,378.8 676.0,391.0 661.3,395.9 649.1,388.6" fill="#add19e" />
<polygon points="411.2,500.0 499.7,500.0 442.4,539.9 464.8,599.7 454.8,604.6 411.2,609.6" fill="#e0dfdf" />
<polygon points="419.9,582.2 442.4,579.7 447.4,604.6 422.4,609.6" fill="#ebe3e6" />
<polygon points="447.4,549.8 469.8,547.3 479.7,604.6 454.8,607.1" fill="#f2efe9" />
<polygon points="411.2,699.3 449.8,699.3 454.8,739.9 411.2,739.9" fill="#ebe9e6" />
<polygon points="474.8,699.3 522.1,696.8 544.5,734.2 544.5,739.9 474.8,739.9" fill="#e0dfdf" />
<polygon points="442.4,671.9 449.8,659.4 462.3,649.5 477.2,634.5 484.7,622.1 487.2,634.5 477.2,647.0 487.2,654.5 499.7,647.0 504.7,659.4 494.7,671.9 479.7,679.4 464.8,674.4 454.8,669.4 449.8,679.4 454.8,691.8 444.9,691.8" fill="#add19e" />
<polygon points="452.3,699.3 469.8,699.3 467.3,719.2 472.3,739.9 454.8,739.9 457.3,719.2" fill="#add19e" />
<polygon points="458.6,597.2 468.5,597.2 468.5,604.6 458.6,604.6" fill="#b5e3d1" />
<polygon points="419.9,557.3 427.4,556.1 427.9,562.3 420.4,563.5" fill="#b5e3d1" />
<polygon points="484.3,742.0 495.7,736.7 492.2,743.7 487.0,745.4" fill="#f9d6a0" />
<polygon points="478.2,714.0 546.6,714.0 563.7,750.6 551.5,750.6 527.1,743.3 497.8,740.9 485.6,733.5" fill="#e0dfdf" />
<polygon points="461.2,714.0 468.5,728.6 480.7,743.3 497.8,745.7 522.2,744.5 541.7,753.1 561.2,757.9 571.0,767.7 580.8,782.4 590.5,797.0 600.3,811.7 607.6,826.3 612.5,841.0 619.8,858.0 624.7,870.2 629.6,884.9 624.7,899.5 619.8,914.0 610.1,914.0 612.5,894.7 612.5,875.1 605.2,860.5 600.3,845.8 597.9,831.2 590.5,821.4 585.7,806.8 575.9,794.6 566.1,777.5 556.4,771.4 541.7,782.4 532.0,789.7 527.1,777.5 519.7,767.7 507.5,762.8 497.8,775.0 502.7,787.2 502.7,804.3 507.5,821.4 519.7,828.7 512.4,836.1 517.3,850.7 527.1,862.9 517.3,870.2 507.5,875.1 497.8,884.9 500.2,899.5 485.6,914.0 468.5,914.0 463.6,897.1 466.0,880.0 461.2,865.4 463.6,853.2 475.8,843.4 478.2,831.2 473.4,821.4 475.8,806.8 485.6,794.6 483.1,777.5 470.9,784.8 466.0,772.6 475.8,762.8 470.9,753.1 461.2,745.7 453.8,733.5" fill="#add19e" />
<polygon points="422.1,755.5 434.3,750.6 446.5,760.4 441.6,766.5 427.0,762.8" fill="#add19e" />
<polygon points="411.1,772.6 419.6,779.9 411.1,787.2" fill="#add19e" />
<polygon points="549.0,880.0 561.2,872.7 575.9,870.2 573.5,884.9 563.7,894.7 551.5,892.2" fill="#add19e" />
<polygon points="556.4,858.0 568.6,856.8 566.1,865.4 557.6,866.6" fill="#add19e" />
<polygon points="510.0,892.2 527.1,899.5 519.7,904.4" fill="#add19e" />
<polygon points="411.1,870.2 427.0,865.4 444.1,872.7 458.7,884.9 453.8,894.7 434.3,889.8 419.6,884.9 411.1,889.8" fill="#add19e" />
<polygon points="411.1,894.7 424.5,892.2 429.4,904.4 419.6,914.0 411.1,914.0" fill="#add19e" />
<polygon points="624.7,819.0 639.4,811.7 649.1,816.5 651.6,828.7 639.4,831.2 629.6,836.1" fill="#add19e" />
<polygon points="617.4,831.2 624.7,826.3 622.3,841.0" fill="#add19e" />
<polygon points="624.7,870.2 649.1,875.1 673.6,870.2 676.0,882.5 649.1,889.8 634.5,884.9" fill="#add19e" />
<polygon points="636.9,894.7 685.0,884.9 685.0,906.9 649.1,909.3" fill="#add19e" />
<polygon points="441.6,797.0 446.5,794.6 447.7,806.8 442.8,809.2" fill="#add19e" />
<polygon points="453.8,816.5 463.6,811.7 462.4,828.7 455.0,831.2" fill="#add19e" />
<polygon points="445.3,833.6 451.4,831.2 450.2,841.0" fill="#add19e" />
<polygon points="412.3,811.7 419.6,810.4 419.2,814.1 412.8,815.3" fill="#add19e" />
<polygon points="419.6,853.2 431.9,849.5 433.1,853.2 422.1,858.0" fill="#add19e" />
<polygon points="575.9,787.2 580.8,787.2 579.6,804.3 575.9,799.4" fill="#add19e" />
<polygon points="411.1,766.5 429.4,762.8 451.4,764.0 461.2,757.9 468.5,761.6 463.6,768.9 441.6,773.8 419.6,778.7 411.1,781.1" fill="#aad3df" />
<polygon points="670.0,888.1 682.6,883.9 711.8,887.1 739.1,881.8 757.9,883.9 768.3,878.7 787.2,874.5 803.9,877.7 816.5,886.0 820.7,896.5 814.4,914.3 783.0,914.3 774.6,902.8 757.9,907.0 732.8,900.7 711.8,904.9 690.9,900.7 678.4,907.0 670.0,914.3" fill="#add19e" />
<polygon points="816.5,867.2 879.2,866.2 870.9,877.7 850.0,885.0 833.2,887.1 820.7,881.8" fill="#add19e" />
<polygon points="835.3,867.2 843.7,867.2 843.7,873.5 835.3,873.5" fill="#c8e6c0" />
<polygon points="879.2,890.2 896.0,894.4 891.8,909.1 883.4,902.8" fill="#add19e" />
<polygon points="923.7,867.2 955.1,866.2 948.8,877.7 930.0,875.6 919.6,881.8" fill="#add19e" />
<polygon points="986.5,873.5 1001.2,867.2 1032.5,866.2 1024.2,873.5 994.9,878.7" fill="#add19e" />
<polygon points="992.8,914.3 994.9,902.8 1005.3,894.4 1024.2,892.3 1040.9,885.0 1057.7,877.7 1078.6,873.5 1087.0,877.7 1074.4,888.1 1053.5,890.2 1036.7,898.6 1015.8,902.8 1005.3,914.3" fill="#add19e" />
<polygon points="1080.7,888.1 1095.3,873.5 1107.9,871.4 1101.6,881.8 1095.3,898.6 1089.0,909.1 1082.8,902.8" fill="#add19e" />
<polygon points="1103.7,900.7 1116.2,890.2 1128.8,881.8 1137.2,888.1 1120.4,900.7 1107.9,904.9" fill="#add19e" />
<polygon points="1133.0,902.8 1147.0,892.3 1147.0,914.3 1135.1,914.3" fill="#add19e" />
<polygon points="1015.8,904.9 1024.2,909.1 1020.0,913.2" fill="#add19e" />
<polygon points="1137,232 1147,232 1147,300 1140,330 1137,330" fill="#add19e" />
<polygon points="1137,470 1147,465 1147,560 1137,565" fill="#add19e" />
<polygon points="1137,600 1147,600 1147,700 1137,690" fill="#add19e" />
<polygon points="1137,760 1147,750 1147,865 1137,865" fill="#add19e" />
<path d="M649.3 258.5l-1.0 -5.6l-0.6 -11.3M569.0 208.4l-3.7 7.1l-4.7 3.5l-4.9 8.0M1108.5 587.5l-3.1 10.6l0.0 6.0l3.7 6.1M1011.7 281.5l-8.3 -2.9l-5.2 1.5l-7.5 6.2M725.7 384.5l-6.3 -2.3l-10.4 1.1l-5.5 4.5l-5.7 4.8l-6.7 6.4M464.9 537.2l7.2 4.4l9.6 -0.9l8.7 2.4l5.0 5.2M922.7 600.9l-5.6 0.6l-9.0 4.1l-5.2 8.7l-2.4 8.7l-4.1 7.0M938.4 826.8l-3.7 8.5l-2.5 6.0l-1.0 10.1l0.5 11.4l0.3 6.2M706.6 356.5l1.4 6.8l2.4 7.1l-2.5 11.4l1.7 6.0l4.0 5.3M767.9 596.8l3.5 8.0l1.9 7.0M503.4 805.3l10.3 -4.0l9.4 2.5M822.6 449.3l-4.8 2.5l-3.0 5.7l-0.1 7.4l2.9 4.1l5.1 2.6M678.6 161.7l1.9 -6.5l0.6 -7.5l-4.8 -9.8l1.9 -8.0l1.2 -5.5M486.2 406.5l-0.7 6.4l-5.1 5.5l-9.7 6.0M969.0 372.1l-2.6 -6.3l-3.4 -5.1M979.1 553.2l3.4 -8.7l7.2 -7.3l2.3 -6.3l2.2 -10.4M558.1 522.4l2.3 -8.0l-1.3 -9.1M664.4 766.2l3.4 -6.7l0.5 -6.6l-2.2 -6.0l-2.0 -11.1M1029.6 512.2l-0.8 -5.8l-2.9 -9.5M557.7 828.3l-6.3 9.7l-6.4 5.2l-5.3 1.9l-8.2 8.7M431.3 598.1l-9.2 0.6l-11.5 1.1l-7.4 4.8M426.7 759.1l-1.3 -11.5l-2.2 -10.9M1019.1 304.9l-0.1 10.3l2.0 8.6l-1.3 5.3l-6.1 9.5M898.6 771.2l-8.6 -1.3l-7.0 4.0l-2.9 4.1M999.2 275.1l-7.3 0.6l-8.9 0.5M988.2 223.9l-5.3 0.3l-6.7 4.7l-3.3 10.8M457.6 393.4l8.1 0.8l8.3 1.2l7.1 6.9M1056.1 869.4l-3.0 5.1l-0.1 8.1l3.7 5.5M464.8 658.8l7.0 -6.4l4.1 -5.4l1.1 -8.2M960.6 214.7l10.8 -0.4l7.0 -3.9l6.5 -3.5M555.1 387.9l-3.2 -7.6l-0.9 -7.6M791.8 370.1l9.5 4.4l2.6 5.1M606.5 172.6l5.5 -9.2l8.3 -5.0l7.8 0.7l8.5 1.2M775.0 394.5l-0.4 5.5l-6.0 7.3l-5.0 2.5M1041.2 193.4l0.3 -12.0l-1.0 -11.4l0.4 -5.3l4.2 -10.8l5.9 -3.5M544.3 861.7l-7.4 -4.2l-7.4 -0.5l-5.5 3.9M422.3 707.9l-6.3 -2.2l-9.3 -2.5l-8.5 -4.4M812.8 828.1l11.8 0.9l10.7 -1.6l9.4 1.4l7.4 0.1M451.0 242.2l5.1 1.8l6.4 4.2l9.8 6.5l7.4 6.5M444.3 285.1l2.5 11.5l-3.8 8.0M590.9 887.5l0.5 7.3l4.2 5.5l2.8 6.1l0.3 5.6M1012.3 253.1l-7.1 0.9l-8.0 4.3l-9.2 4.5l-9.7 2.3l-7.4 -2.2M651.0 902.2l10.4 3.2l6.2 7.1l4.1 9.9M513.5 546.3l-8.0 -4.2l-5.0 -8.4M921.3 319.5l10.8 4.4l8.0 1.7l4.7 -2.1M802.1 330.8l-4.9 9.0l-4.3 7.6l-3.6 4.1l-5.9 3.3l-3.1 6.1M947.8 300.4l-0.6 -7.7l-1.0 -9.7l2.5 -9.0l2.5 -4.9l-0.1 -6.8M958.0 377.0l-7.7 -3.3l-2.8 -5.0M571.2 520.0l-2.5 -7.9l-8.4 -7.5l-11.3 -3.6l-3.1 -4.1M748.8 775.0l6.8 3.6l5.5 10.1l5.0 2.6l4.6 5.0l7.5 5.4M875.9 357.8l10.7 3.7l4.9 1.6l7.8 -3.2l6.4 -3.1M514.6 407.5l2.9 9.8l-1.1 5.7l-7.1 7.0l-6.9 1.5M685.0 445.3l7.8 -1.6l4.6 -2.6M485.9 786.4l0.9 6.8l0.7 6.3l3.3 11.2M1061.8 768.8l-2.3 -4.8l-0.9 -8.1l2.2 -9.2M621.6 179.8l4.8 -6.3l2.3 -6.4l6.0 -7.5M710.0 326.2l-7.6 5.7l-2.8 8.0l-6.2 6.3l-4.8 5.6l-7.0 3.8M814.2 330.4l5.0 5.7l1.9 6.1M425.8 814.1l-4.5 5.8l-0.3 6.9l-3.8 4.5M781.5 628.1l1.6 -11.2l-0.2 -9.5l-0.8 -7.1M1010.4 889.3l5.2 10.0l4.5 7.9l7.3 2.7l6.2 8.8l1.4 11.7M593.9 226.2l-0.2 10.1l-2.3 10.1M747.6 567.8l11.3 -1.4l7.1 0.6l6.1 -2.9M879.3 681.3l10.6 4.8l6.8 -0.0M992.8 142.9l-7.2 0.5l-6.2 -2.6l-8.0 -3.7l-7.7 1.7l-5.4 0.1M553.9 825.1l-8.1 -5.3l-2.5 -6.1M436.1 403.0l-6.4 8.4l-7.1 4.7l-6.4 9.9l-3.3 10.2l0.5 6.5M970.7 369.7l11.2 -1.7l11.2 -1.9l6.5 -6.5l5.3 -1.1l5.9 -7.0M716.7 690.0l-1.6 11.1l-5.4 10.7l-6.4 3.5l-6.8 9.3l-4.3 2.9M900.0 434.3l-3.7 4.4l-0.6 5.5l0.0 11.2l-0.8 10.3M690.8 735.5l2.1 9.7l5.2 7.1l4.7 5.5l3.1 7.7l1.3 6.6M871.3 454.5l-2.0 11.3l1.7 10.1l-2.8 6.8l-0.9 11.7l-1.6 6.6M938.4 386.3l-4.2 8.2l-9.1 7.2M459.1 779.7l2.0 7.4l4.6 6.6l6.7 9.4l9.3 5.2l7.2 8.0M979.8 610.8l-4.4 9.5l-4.6 7.2l-2.5 5.6l-2.7 9.2M765.5 562.4l0.3 11.9l1.9 5.2l6.7 5.2l4.8 6.6l6.6 4.3M867.5 662.4l2.6 -6.6l0.5 -6.9M598.0 343.0l-4.5 4.1l-8.9 1.8l-7.0 3.3M1141.4 533.7l-1.2 11.9l3.7 7.5M1013.9 790.9l6.6 -0.1l7.4 -5.5M1020.4 291.9l6.3 2.7l8.2 8.3l8.9 2.2M867.3 310.0l-1.3 11.9l5.2 8.7l-0.4 10.7M1013.7 457.7l-0.9 5.1l-1.4 8.3l-0.4 10.6l-1.6 5.9M804.0 646.2l-5.0 4.9l-5.9 10.1l-2.4 8.6l-0.6 7.9M1047.1 911.4l-4.2 6.6l-7.4 3.1l-3.7 4.4M477.6 588.1l-1.1 5.3l3.1 10.2l3.9 8.1M1093.4 711.2l6.2 6.1l1.1 5.6l2.2 10.4l-2.7 5.8M504.2 870.1l8.5 -3.7l5.5 -1.2l9.8 0.7l7.7 5.5l4.1 8.4M863.4 293.4l-8.0 8.4l-2.1 7.2l2.5 11.5M1011.3 290.7l6.4 -3.5l6.5 -4.9M1035.9 742.7l-4.0 -6.9l-2.4 -7.8l-1.9 -4.8l-1.8 -8.2M584.1 731.5l6.5 -8.4l2.7 -4.7l2.4 -7.2l5.8 -6.3l4.3 -3.0M506.9 853.9l1.9 8.3l4.5 10.8M511.2 803.7l10.7 -5.2l10.5 -5.2M1085.2 269.5l-2.7 -7.0l-0.1 -6.1l3.6 -5.9M1011.3 252.8l-6.3 2.6l-6.7 2.7l-3.2 5.4l-0.7 11.5l-3.5 10.7M535.2 747.9l4.6 6.0l1.2 8.8M837.9 823.3l4.2 6.4l5.2 5.5l6.9 2.3l6.4 -1.7l11.6 -1.2M629.1 540.4l-6.6 7.8l-2.2 6.7l-3.7 7.0l-1.6 5.1M770.5 614.9l6.9 -3.0l4.3 -6.1M576.1 592.5l-10.1 -3.9l-5.1 0.5l-9.5 -3.1M742.8 191.2l4.9 4.8l9.5 0.8l7.3 1.3l7.5 3.0M1100.7 708.3l5.3 7.0l4.7 4.7M454.0 743.3l5.8 -2.6l8.2 -2.3l10.7 -0.8M539.5 380.8l-8.5 5.4l-7.3 4.9M687.1 479.1l8.0 -1.7l4.7 -3.2M582.0 172.0l-5.1 4.6l-6.4 4.9l-8.4 2.2l-7.9 5.3M1121.3 309.5l3.9 -10.6l4.8 -4.3M528.2 848.3l3.8 5.5l0.3 9.4l-2.3 9.4l-6.5 5.1l-9.7 1.9M1042.1 479.5l1.9 -7.5l3.2 -8.4l-0.5 -5.2l-5.6 -7.5M530.1 896.6l-8.0 -5.7l-6.8 -7.1M953.3 192.8l-11.6 -1.7l-9.5 -1.9l-7.7 -6.8l-4.0 -6.6M592.5 298.8l7.4 5.8l5.3 2.1M483.0 726.7l3.3 6.0l7.6 8.7l10.1 2.2l7.3 7.4M854.1 509.5l-3.1 4.2l-3.5 4.5M756.1 179.1l-6.1 -3.5l-7.9 -3.6M623.2 721.4l8.0 2.7l4.6 4.3l5.5 5.0l2.5 6.4M1105.7 361.0l1.3 5.6l0.2 5.6l-3.6 9.2M990.2 626.8l-10.7 3.4l-7.9 -0.3l-7.4 -1.8l-8.0 0.3l-6.2 -0.2M1134.1 628.9l9.8 -3.1l9.5 0.4l7.2 -1.2M525.3 792.9l-6.9 -4.3l-5.3 -7.3l-7.5 -3.3l-3.9 -5.4M552.0 374.8l0.2 -11.8l3.0 -8.7l0.8 -6.6M1114.5 341.7l7.0 -6.6l2.3 -5.6M520.2 375.2l1.2 9.4l4.0 5.0l3.9 3.5l8.7 5.9M921.4 528.4l-6.7 -1.1l-4.4 -2.4l-10.9 -1.5l-8.3 -3.7l-8.9 -6.4M902.6 645.7l8.2 -4.7l6.0 -4.0l5.2 -2.2M719.8 746.0l-4.4 -6.7l-5.6 -7.5l-6.8 -7.0M1095.6 283.3l-5.8 -6.1l-0.5 -5.2M810.9 266.2l1.3 -5.6l2.9 -8.3l5.1 -6.9M881.5 782.0l-7.3 -3.8l-2.5 -5.8l-4.4 -10.7l-0.6 -9.3l0.8 -6.7M692.0 189.5l7.7 5.9l4.2 4.0l6.9 3.7l5.1 10.6l-2.9 11.4M751.1 269.0l9.4 -0.1l8.9 -0.5M577.3 886.1l-4.0 5.8l-3.7 4.6l-6.8 3.1l-6.9 -0.4l-6.7 0.8M724.6 285.5l9.4 -1.7l7.6 -3.5l5.4 -1.4l5.8 1.8M634.1 439.3l3.6 4.8l1.6 9.3l3.8 3.3l2.1 9.4M595.0 220.4l7.3 3.6l4.2 4.9l6.6 5.8M859.6 673.2l11.2 1.0l9.6 5.2M556.3 676.8l-5.3 -2.4l-7.9 0.8l-7.8 -2.9l-7.6 -3.6l-5.3 -8.4M592.5 269.1l-7.2 -1.1l-7.7 -3.5M629.5 501.6l-4.6 6.0l-3.9 3.3M444.8 710.6l8.4 0.1l4.4 2.8M939.6 624.7l-3.4 9.9l-4.5 10.4l-0.8 7.4l1.3 5.2M623.8 416.2l-6.9 0.2l-11.8 0.3l-10.4 -2.0l-7.2 0.3M631.2 594.7l-6.8 -5.8l-7.6 -4.9M704.3 225.8l8.7 4.1l7.5 8.5l5.0 7.9l3.7 9.1l2.5 9.5M567.4 656.9l-4.3 4.6l-1.0 10.4l-6.0 7.5M682.5 777.1l4.2 -4.7l0.4 -5.1l1.6 -8.9l5.8 -6.2M795.3 778.7l2.9 -11.1l0.9 -5.0l0.2 -9.1l7.0 -9.6l4.5 -6.5M486.1 639.6l0.5 8.0l6.6 7.1l0.7 11.0M571.6 235.7l-6.6 -0.9l-5.7 -2.8l-10.3 1.8l-10.9 -1.4M948.1 207.1l-8.4 -7.9l-10.8 -4.7l-3.8 -3.3l-9.5 -0.3l-4.9 -2.6M639.9 705.1l2.6 6.7l-2.5 9.8l-1.3 6.0l-4.4 3.8l-6.1 0.4M1001.2 510.2l7.5 -7.3l5.5 -4.4l3.2 -11.4l5.8 -9.1l3.0 -8.8M1130.4 783.8l-8.6 -8.1l-7.1 -3.0l-10.1 -2.3l-8.1 1.2M917.8 390.2l-2.5 10.4l-3.7 3.8l-10.1 3.4M1049.3 583.5l0.4 5.6l-0.1 10.6l4.1 9.4l-1.3 6.5l-3.3 9.2M753.5 301.5l-3.5 7.4l1.5 10.5M979.3 321.8l-4.4 -7.5l-4.9 -7.7l-5.3 -3.4l-9.8 -1.2M678.0 577.7l-6.5 9.4l-6.2 9.2l-3.3 7.5M471.2 385.8l5.0 1.1l10.8 -5.0l8.4 0.7l6.7 1.2M984.5 470.8l4.1 -3.3l2.8 -5.6l-0.6 -5.3M821.2 814.2l-9.2 -2.3l-6.7 -7.4M477.2 388.0l-4.9 8.3l-3.0 7.5M528.6 887.6l10.1 -5.7l5.4 0.6l5.1 0.9M1087.5 341.1l-5.2 3.1l-11.4 2.1l-7.1 -0.5l-10.1 -2.0l-6.8 2.5M600.2 237.8l-10.4 2.1l-10.4 -4.2l-10.8 -3.8M999.0 263.2l10.0 -4.7l5.9 0.6M740.2 216.9l7.9 -2.2l9.5 -5.1M762.5 627.0l2.1 5.9l4.5 10.3l2.9 5.3M718.8 332.5l6.2 -0.4l7.2 -0.6l5.1 2.7l2.2 4.9M1069.7 657.9l-1.3 5.7l-6.5 9.9l-3.2 6.0l-0.8 6.6l0.3 7.9M530.4 784.6l4.4 2.6l4.2 6.1l4.5 2.2M1023.5 548.5l6.8 3.9l6.1 1.3l6.7 5.5l5.9 1.9l9.7 4.8M1065.5 706.2l-3.1 -8.8l-0.5 -10.7l0.4 -6.4M459.4 707.7l-6.3 3.9l-6.2 7.2M1107.0 211.7l-4.5 8.5l-1.2 8.9l-3.8 3.6l-8.0 4.1l-7.5 -0.2M1097.0 889.9l7.9 7.3l2.2 6.9l0.1 7.7l-1.8 5.1M1053.4 878.5l-8.8 -0.1l-9.3 7.2M575.6 282.8l8.8 7.7l11.5 0.6l6.3 2.6l6.2 7.1M752.5 326.0l-9.9 -1.7l-5.2 2.7l-7.5 3.9l-4.1 4.1M709.6 247.7l-9.0 -0.7l-5.6 -2.6l-7.3 -8.9M697.1 466.6l4.7 -10.6l5.3 -5.1M587.9 400.7l-10.9 -0.4l-7.2 4.8l-11.5 -0.6l-7.6 2.3M876.7 423.3l-6.4 0.3l-6.5 -1.2M720.7 448.5l10.5 1.8l8.5 7.3l9.5 0.5l9.4 -2.6l7.3 -4.9M1091.3 621.6l1.0 11.6l2.7 6.6M887.6 234.9l-9.1 -0.1l-6.6 -4.7l-9.0 -6.6l-3.2 -8.5M612.7 710.1l3.7 -8.5l4.7 -8.3l0.9 -9.9l0.4 -8.8M862.0 504.0l-0.9 6.3l-2.5 11.5l-0.8 11.4M530.4 877.0l-3.1 6.3l-6.4 3.0l-6.1 0.3l-8.8 6.8M734.8 189.9l-6.4 8.2l-7.6 9.2l-9.3 6.8l-7.1 6.6l-2.0 6.1M860.5 355.6l7.9 -6.4l7.9 -2.6M988.7 689.0l4.5 -3.5l6.3 -6.2l1.9 -7.5M1141.8 257.5l8.4 -3.8l6.8 -4.5l8.0 -6.1l4.6 -6.2M819.7 438.8l-2.0 6.8l-3.5 10.0l-1.9 7.4l1.4 10.7l4.2 11.0M858.6 329.3l-10.0 6.1l-2.4 6.4l-5.6 4.3l-5.9 4.1l-7.3 3.4M1018.7 703.3l-7.4 5.5l-7.7 8.7l-7.2 4.9l-3.0 7.0l-2.4 8.6M833.5 821.2l9.7 -3.7l8.9 1.8l9.1 4.6l7.5 -0.8l5.3 -1.6M639.6 277.6l-3.4 -10.2l4.0 -10.5l1.5 -5.9l-0.4 -8.6M782.6 287.2l7.0 9.7l2.3 4.8M713.8 750.1l-6.3 4.6l-1.9 4.7M432.7 277.2l6.7 -9.0l3.7 -4.7l2.2 -9.0l-2.2 -8.3M786.0 164.4l5.5 7.5l1.1 5.3l8.1 6.5l9.1 4.2l6.0 1.4M607.2 218.8l5.6 -5.9l3.0 -4.5M1066.4 591.8l4.3 -5.1l1.8 -5.8l2.6 -5.7l-2.9 -10.7l-2.5 -7.5M596.4 826.6l6.8 -3.6l6.4 -1.2M638.5 817.7l-4.8 3.9l-3.4 3.8l-7.4 2.4M678.1 400.6l3.2 -4.4l1.1 -10.7l-0.7 -6.7l-3.6 -6.0M585.6 169.0l-0.7 -6.7l-3.8 -5.2l-5.6 -8.9l-3.9 -7.3M996.1 327.4l-6.6 3.8l-6.4 -0.8l-6.2 -5.8M578.3 491.5l4.7 6.6l-0.6 8.7l0.5 8.6l5.7 8.5M909.9 212.6l-0.2 -10.0l-2.5 -4.4l-2.2 -9.6l1.1 -6.5l-3.0 -10.8M461.1 847.5l-0.8 -10.0l-4.3 -5.5l-1.7 -7.6l-4.4 -10.0M752.8 626.8l-0.9 -6.2l-3.5 -10.0l-0.8 -11.3M429.6 685.3l-8.5 4.0l-3.7 4.5l-9.7 3.1l-5.3 0.1l-4.9 3.7M556.8 376.0l-7.3 5.9l-8.9 0.5M578.6 526.4l-8.4 -3.3l-3.2 -4.8l-2.1 -9.4l3.7 -10.5l4.4 -8.9M1128.0 667.8l11.2 -2.0l5.5 1.0l7.0 3.4l7.6 7.7M617.9 211.4l6.7 -3.0l9.0 -3.9l9.4 0.6l9.7 0.7l9.2 -3.2M1034.1 742.8l-7.6 6.4l-6.6 1.9l-11.5 2.5M880.2 561.9l3.3 6.6l8.1 4.8M512.0 671.8l-6.0 2.9l-7.4 3.4l-7.3 -1.3l-11.1 1.1l-7.4 5.1M656.5 771.5l-5.2 -3.2l-3.7 -10.2l-3.0 -5.7M918.9 151.6l-5.3 4.5l-4.3 8.9M740.7 229.2l-3.8 5.9l-3.2 4.2l-6.7 9.8l-5.6 8.6l-3.4 9.6M605.6 640.0l6.7 -5.7l2.0 -11.3l3.5 -8.7l8.0 -5.3l4.0 -5.4M513.0 163.4l-0.8 -6.2l0.7 -10.9l3.8 -4.9M988.5 783.1l-2.1 -9.3l-2.7 -6.0l-9.2 -6.9l-3.0 -6.1M453.5 224.8l9.1 -7.2l6.6 -5.3l2.8 -6.5l2.8 -4.8l4.4 -4.3M737.2 890.7l4.1 7.3l6.0 4.7M434.6 613.5l0.1 -5.5l-5.6 -8.2l-0.3 -5.4l-7.9 -8.6l-9.4 -3.7M689.8 145.2l3.5 -7.5l4.1 -7.6l3.4 -8.1l3.3 -5.1M706.4 612.2l5.0 5.4l4.5 7.7M721.0 426.6l-5.7 -4.8l-1.7 -4.9l-6.8 -7.0M740.2 207.8l-5.4 -10.3l-4.2 -5.2l-4.7 -4.9l-10.7 -4.9M560.3 720.9l-0.2 6.3l-2.6 9.6l0.9 8.2l0.6 9.9M952.4 843.9l-8.3 -6.6l-8.4 -1.4l-10.7 -1.8l-6.6 -6.7l-1.1 -8.5M749.6 671.6l-9.7 -3.7l-10.3 1.5l-4.8 4.6M685.0 153.7l-5.0 -3.0l-11.4 -0.3l-10.2 6.2M559.4 230.6l-5.8 -8.4l-7.6 -7.0l-5.8 -9.1l-6.8 -3.5M953.6 873.9l2.0 -7.2l0.5 -7.3M854.8 168.4l3.9 -5.0l6.0 -9.0l3.7 -4.4M426.4 227.2l-2.0 -11.3l3.3 -9.1l6.7 -6.2M595.2 911.9l3.3 -3.9l2.8 -5.4l5.2 -9.8l4.1 -3.3M545.2 773.7l0.4 -11.8l2.5 -7.8l-0.8 -11.7l-0.4 -7.5l-0.1 -7.2M507.4 624.2l-0.6 7.3l-0.4 11.6l1.7 7.2l1.6 6.4M594.1 818.5l-3.2 -5.1l-3.6 -4.0l-0.3 -7.5M833.1 593.2l1.3 11.2l4.0 5.0M724.7 583.4l3.4 5.7l0.7 5.9l7.8 8.8l6.1 4.4M1039.0 331.3l5.1 -8.5l7.9 -7.9l7.9 -3.3l10.5 1.7l4.0 4.6M562.1 828.1l-4.8 -7.6l-4.6 -4.1l-7.1 -0.8l-10.0 1.5l-11.5 0.9M661.6 853.2l-5.7 -4.3l-7.5 -3.5M1125.3 674.9l2.1 -6.9l-1.8 -11.1M813.2 727.6l-3.1 -5.8l-3.8 -5.2l-5.2 -9.8M888.0 293.9l0.2 -5.6l5.1 -9.9l1.5 -5.8M549.5 556.5l6.4 -1.2l9.3 -4.3l7.6 -1.7l7.4 0.2M453.3 461.8l9.3 7.4l10.0 5.9l2.6 4.5l6.7 6.9M641.7 462.5l-3.4 -3.8l-7.9 -3.7l-4.6 -5.9l-5.6 -4.9M911.6 810.5l7.8 5.2l4.3 7.1l8.9 3.4l7.4 4.9M930.9 573.8l-0.9 5.0l-1.4 9.5l-3.8 6.5l-6.2 2.3M967.8 211.4l8.3 -3.0l7.5 -7.2l4.2 -8.3M953.9 839.0l5.3 -5.2l7.2 -3.7l6.5 0.2M1082.5 837.6l-6.6 9.2l-0.8 10.1l4.8 8.2M706.8 809.1l11.1 2.8l6.0 7.2l6.0 3.2l7.9 1.2l6.3 -1.4M969.7 638.2l0.8 8.9l6.0 9.3l0.4 6.9l-3.1 10.3l0.1 7.3M768.4 829.8l4.4 3.1l5.9 9.3l1.2 5.2l-1.2 8.0l-0.3 6.0M1100.0 670.9l4.3 -2.7l6.1 0.1l5.3 1.9M535.2 669.1l7.0 6.7l6.0 4.3l3.5 8.4l6.8 6.4M422.3 246.1l-6.5 -7.8l-10.9 -2.7l-5.4 2.1l-11.4 -3.2l-4.8 -1.5M575.8 559.2l-6.9 -8.4l-0.3 -5.5M1125.3 800.7l6.8 1.0l6.5 -2.0l3.3 -4.2M785.4 457.1l-7.3 -0.2l-6.7 4.7l-4.4 5.8l-6.0 10.3M959.5 349.4l-4.8 3.7l-10.7 3.2l-11.2 -1.5l-6.3 -2.1l-11.3 -3.8M921.5 705.6l5.5 1.0l4.9 1.8l6.3 4.7M822.1 670.7l-8.2 3.7l-8.5 4.2l-6.5 3.6l-6.9 3.2M1018.2 752.9l6.7 -3.9l8.2 -4.3l7.0 -1.7l8.8 -0.5M575.3 614.9l-4.2 6.2l-5.9 6.8l-5.4 0.8l-7.4 -1.6l-6.1 1.3M680.2 662.1l10.2 5.6l5.1 8.1l-0.1 7.3l2.0 10.9l2.2 7.6M928.1 431.6l-3.4 4.5l-5.8 10.5l-5.7 5.8l-7.2 7.7M969.5 257.7l-4.2 -8.6l-2.4 -8.3l0.9 -6.7l1.1 -4.9M602.1 597.9l-5.5 4.0l-4.6 6.6l-5.1 6.8l-0.4 5.9M1116.4 366.2l3.7 -6.7l-1.5 -10.2M1124.8 474.7l-6.9 -3.5l-9.6 -6.3l-11.7 -1.7l-6.9 -3.3M900.9 396.3l8.4 2.4l10.9 3.0l4.2 3.1l6.0 5.7l8.3 7.1M716.4 507.6l4.0 -4.4l4.5 -2.3l4.2 -4.8l8.0 -8.2l3.4 -6.5M696.2 497.0l4.0 3.2l8.6 6.7M569.7 492.7l5.8 -6.1l1.3 -9.7l0.2 -9.1M1145.6 772.6l3.1 -5.5l5.9 -2.3l8.2 -2.8M474.7 438.2l-3.8 -7.7l-2.9 -4.5l-8.3 -7.3l-4.5 -10.0M600.2 297.9l5.7 7.7l2.0 5.6l-1.9 7.1l-2.0 9.8M899.6 705.0l8.9 -0.7l6.6 -2.2M996.9 367.1l-3.7 -9.4l-4.6 -4.5l-10.4 -3.6l-5.8 1.2l-10.1 -3.5M776.9 153.0l-1.8 -9.6l0.4 -7.1l-3.7 -10.2M518.3 850.6l2.0 6.1l4.2 3.4M575.7 785.5l-0.1 -6.1l-5.9 -7.9l-10.4 -3.1l-6.6 -0.0l-7.2 -0.9M823.6 260.9l5.8 -3.0l9.6 1.3l11.5 -2.8l5.4 -2.8M625.2 647.5l-3.9 -9.3l-4.7 -8.6l-9.3 -5.5M500.9 854.8l7.1 -2.3l8.5 0.3M1095.4 213.8l-8.8 -0.4l-5.1 3.0l-7.4 8.5l-6.1 2.4M1091.5 167.0l-10.7 -4.6l-4.3 -3.1M656.2 489.1l4.7 9.4l3.7 4.0l3.5 4.5l5.9 8.7M849.4 498.2l9.8 0.9l10.9 -0.3M467.1 703.7l-6.2 -9.8l-7.8 -7.6l-2.3 -8.0l-3.9 -4.1M1058.0 232.4l-6.5 1.8l-5.2 0.9M599.6 874.9l-8.9 7.1l-8.2 3.1l-4.2 3.8M488.8 183.4l3.3 -5.7l4.7 -3.9l2.7 -4.5M700.4 542.0l2.8 8.6l5.8 7.1M988.0 690.7l7.2 -1.5l4.7 -4.5l5.8 -2.4M634.5 206.9l-6.8 -9.4l-5.4 -5.7l-6.5 -1.6M951.0 666.0l1.5 6.2l-3.4 9.2l-3.3 4.4l0.6 11.2M438.8 547.7l-7.1 6.2l-3.9 8.5M1033.5 749.3l8.2 6.8l8.1 6.6l5.3 4.3l4.1 5.8M449.8 501.9l1.6 -10.7l5.8 -9.5l3.1 -11.3M802.3 872.3l5.2 9.6l6.9 6.0l7.8 8.0l7.1 9.1M1065.7 180.8l-1.3 -9.7l5.0 -9.5l2.0 -5.3l5.8 -9.1l3.1 -8.6M1026.5 754.2l11.5 2.0l6.4 5.4l5.9 3.9l8.8 0.7l6.8 -3.7M753.9 167.1l-1.1 11.2l0.2 8.8l2.5 6.0l1.6 7.5M1070.8 442.8l-2.1 6.2l-7.1 6.0l-7.7 1.1M778.8 879.9l-10.1 -6.1l-4.7 -1.9l-3.6 -4.4M592.0 578.4l-3.9 -11.2l-0.1 -10.3l1.3 -5.8l3.7 -5.7M717.2 539.0l-6.9 3.1l-9.2 1.8l-8.1 3.1l-11.3 1.4M777.6 422.8l10.4 4.1l7.5 -1.2M640.0 537.6l6.9 2.2l11.4 -2.3l5.7 2.0l8.1 4.1l7.6 -1.3M961.1 637.2l0.9 8.8l2.5 11.6l0.0 10.6M908.9 435.7l6.9 0.2l8.2 -3.8l10.6 0.2l5.9 -1.2M790.8 819.3l3.3 10.9l2.1 11.6l-1.6 7.4M921.4 352.3l3.2 -6.5l2.1 -5.4l0.3 -7.8l-1.4 -11.7l-2.8 -5.8M1079.9 489.6l5.8 -4.3l4.5 -9.3l3.5 -8.2M904.6 723.0l-3.5 6.9l-8.6 6.8l-2.9 7.6l2.7 8.3M924.8 377.9l-6.4 -2.1l-8.5 2.5l-9.7 -0.6l-10.6 0.6M492.9 379.0l-2.1 -7.5l3.4 -9.6M662.5 445.1l7.6 -6.5l3.6 -9.5l2.7 -11.2l-0.4 -6.5M912.9 855.8l5.9 7.7l4.1 6.7M833.3 353.4l1.0 -9.6l3.8 -7.6l9.6 -5.9M957.9 775.8l-9.1 -4.0l-7.1 -6.0l-5.1 -2.1l-9.3 -5.5M611.9 306.5l3.2 8.4l-1.0 5.5M428.2 541.3l7.6 3.0l6.0 5.5l8.7 8.0l5.9 7.0M434.7 557.2l-7.8 5.2l-5.0 5.3l-4.9 4.3l-6.2 2.0l-10.5 -1.8M806.3 165.5l3.9 -5.6l4.9 -10.6M612.5 211.1l6.8 6.0l10.4 3.7l5.4 9.1l-0.8 7.3l-3.9 3.9M762.7 245.2l-7.0 6.2l-1.9 5.9l-3.4 4.3l-4.8 1.7l-10.5 -0.4M957.9 739.0l-0.5 11.6l-5.9 8.1l-4.4 3.2l-2.5 4.4M1046.6 699.4l-5.8 -7.4l-4.0 -6.0l-4.1 -4.1l-4.3 -8.9M720.9 164.7l-4.8 -9.9l-6.7 -9.0M768.7 205.9l-5.3 9.3l0.0 5.8l-0.7 8.5l2.1 6.4M426.6 843.6l1.3 -10.0l-3.8 -10.6l-2.5 -5.4l-8.3 -5.7l-4.2 -3.1M1009.5 893.3l8.9 1.1l8.4 7.1M660.1 574.0l-3.8 5.2l-4.7 10.1l1.4 11.1M1106.4 481.7l-6.1 -6.6l-4.7 -10.0l-7.5 -5.9l-4.7 -11.0l-0.8 -8.2M1059.1 609.8l3.5 4.2l10.4 5.9l7.7 1.1l9.2 5.5l7.6 6.8M439.2 214.4l3.7 -3.8l4.6 -10.6M572.6 660.7l4.4 -4.2l1.3 -10.2l-4.9 -10.7l-0.8 -6.3l1.8 -5.9M787.9 223.7l3.7 -3.4l8.6 -2.3l8.4 1.6l8.6 3.2l4.0 3.9M450.9 563.1l-4.2 7.8l-0.6 6.3l-1.1 10.8l3.0 9.5l-0.2 9.7M1134.7 615.0l3.9 4.0l10.2 4.6l2.5 5.0l5.1 5.1M628.6 523.5l-3.3 -3.8l-5.6 -1.5l-7.9 -4.6l-6.9 -4.3M710.8 613.7l-0.6 -10.8l1.3 -5.1M912.1 798.2l-7.4 9.0l-5.7 8.2M596.9 374.0l-2.7 5.5l0.2 11.6l-1.7 8.1l-3.7 9.6M963.3 393.6l1.1 -5.0l-1.8 -11.1M1088.8 395.8l6.6 -8.3l3.8 -4.3l6.6 -2.8M872.5 425.4l-8.5 2.1l-8.8 0.3l-6.6 -4.3l-3.9 -9.0l1.4 -5.5M567.3 363.9l7.7 -2.3l7.9 -8.5M860.4 616.2l1.1 6.6l2.5 4.5l1.6 6.3l6.4 9.8M884.5 598.4l-2.2 -6.8l-4.4 -3.3M421.7 421.1l3.4 8.9l3.8 10.5M1088.6 489.4l4.9 -6.2l6.5 -4.8l5.4 -1.8l7.1 2.1M1023.6 165.7l-0.4 -6.5l-1.9 -7.1l-1.0 -10.9M464.5 211.1l2.6 -5.7l-0.4 -5.7l4.4 -6.3l6.6 -6.1M575.3 192.0l5.7 4.8l4.5 4.3l8.5 5.6M683.7 270.3l0.2 -6.2l4.4 -10.6l-2.5 -9.2M1063.6 730.8l6.2 -5.5l5.2 -1.1l10.9 0.2M583.8 164.7l-5.3 7.1l-4.6 6.3M767.9 854.6l4.6 -3.5l2.3 -7.2l3.1 -11.1l1.9 -5.2l-0.4 -10.2M825.3 813.8l8.2 -8.2l4.9 -4.5l3.9 -10.3l-0.2 -5.6l-4.1 -10.7M750.2 706.6l4.5 3.4l9.9 3.5l9.6 -2.6l6.5 -2.0l9.0 -2.6M1008.3 838.9l-3.8 -5.4l-5.4 -7.5M890.2 254.0l6.9 -8.6l5.3 -10.0l0.3 -6.6l2.0 -11.1M471.3 309.5l6.8 8.5l5.9 4.2l5.4 1.1l5.5 -2.8l6.6 -5.2M459.4 430.5l5.0 -4.1l6.3 -0.7l7.1 -1.1l6.7 1.7l6.3 8.1M434.4 279.0l-9.4 4.5l-7.4 7.9M524.9 768.7l-7.3 -6.9l-6.5 -1.7l-11.3 3.3l-4.3 4.2l-6.7 6.1M1063.5 185.9l6.8 8.3l1.9 6.5l1.2 6.5M522.0 716.7l5.8 -5.6l11.2 -3.7l5.3 1.3l5.1 3.5l5.5 0.5M688.4 373.8l-4.9 -6.9l-5.3 -8.2M683.0 544.9l-11.0 2.5l-6.2 0.8l-6.7 -0.9l-7.4 1.7l-9.6 1.9M465.0 714.3l-6.8 -2.7l-4.6 -6.7l-7.6 -7.0l-2.1 -11.0l-1.7 -7.1M1125.8 897.2l6.4 4.5l10.2 1.1l9.9 -0.7M690.7 523.6l-8.9 6.8l-3.1 8.0l-7.4 5.7M886.7 504.5l-7.4 1.3l-8.0 -0.9l-7.9 2.9l-5.1 8.3M529.5 427.4l9.2 2.2l9.1 4.1l3.0 5.6l0.9 7.1M599.2 776.3l-5.0 -1.1l-9.7 -2.6M611.5 196.1l5.7 -3.5l3.3 -5.3l9.5 -4.5M585.0 160.5l2.3 5.6l5.1 7.0M646.6 464.2l-10.7 4.1l-5.3 4.4l-1.4 5.2l-4.7 3.6M1049.9 395.7l-10.5 4.7l-5.1 1.8l-6.7 7.2M694.5 695.5l-1.6 5.4l-2.6 5.8M931.9 762.7l4.5 -9.8l3.1 -7.4l-3.3 -11.1M569.8 790.4l-8.3 2.3l-4.7 2.6l-3.3 4.0l-4.2 4.9M939.4 492.7l5.0 5.1l3.6 5.8l5.6 3.4M978.7 780.4l-3.0 -8.1l-6.1 -8.4l-5.5 -4.5l-6.0 -2.8M540.0 627.9l2.6 5.2l3.7 7.8M678.0 695.0l-5.1 2.0l-7.3 4.2M596.9 658.1l-3.6 11.0l-2.0 9.7l-2.6 10.1l-3.9 6.1M448.6 735.8l11.0 0.4l7.0 5.5l9.8 0.5l7.9 -5.4M1038.4 651.9l-0.7 9.9l-3.7 9.4M434.5 844.4l-1.6 -7.0l2.1 -9.0M710.1 327.0l-6.9 3.1l-8.1 -1.0l-5.5 -1.1l-7.9 -8.5l-3.3 -7.0M577.7 284.8l1.5 -6.2l6.1 -8.2l7.9 -2.9l8.5 1.4l4.3 2.9M788.4 770.5l-5.7 -8.3l-1.1 -9.7l0.6 -5.4l-3.7 -5.5M664.0 749.9l-6.5 9.7l-3.7 10.3M1013.7 347.3l-6.0 4.9l-6.5 9.6l0.9 9.7l-2.7 10.0M828.3 845.9l9.0 -4.5l10.6 -1.1M597.4 648.4l-2.7 8.4l-0.8 10.7l1.5 10.8l-3.8 10.5M513.4 866.3l4.0 -10.1l10.1 -5.8M757.1 498.5l2.3 -7.2l-1.7 -5.6l2.7 -11.0M429.8 427.7l-3.1 -5.6l-4.2 -6.6l-1.6 -11.6l-3.7 -8.7l1.2 -8.2M1073.2 708.4l-2.7 5.1l-6.2 8.8l-5.0 6.7l-5.6 9.7M900.8 302.5l-9.3 2.5l-9.3 -2.3l-7.8 -2.7l-4.7 -2.2M507.4 913.0l-0.3 10.5l1.1 6.5l-1.8 10.5l2.4 10.9M1141.4 476.6l-6.3 0.9l-6.7 3.0M949.9 286.2l-5.2 -3.0l-4.7 -11.0M824.0 755.9l-0.7 7.5l-4.1 5.0M428.2 529.9l9.4 -6.7l5.2 -3.1l10.0 -3.7M723.0 606.8l2.0 6.2l0.7 5.3l-2.6 10.3l-4.5 4.2M987.1 557.8l2.9 5.5l-0.4 11.8l-1.9 5.4M751.3 600.7l-2.0 5.0l-6.8 4.4l-2.3 5.0l-7.2 6.5l-2.7 7.8M881.1 912.2l-6.2 2.2l-7.4 -1.4l-7.1 -0.7M878.4 486.0l6.6 2.6l10.5 2.7l7.4 5.4l5.8 3.9M792.6 506.3l-7.1 2.3l-4.9 2.5l-5.1 8.7M658.0 686.2l5.4 -9.4l2.9 -4.4l6.9 -4.6M785.6 691.9l-1.7 -5.9l-0.7 -10.2l-6.8 -7.1l-5.4 -8.1l-4.8 -5.4M831.6 311.6l3.0 -7.2l-0.3 -5.8l5.1 -9.3M430.7 391.5l-7.8 3.7l-3.9 7.9l-5.5 4.7l-5.8 0.5l-8.4 3.9M827.1 803.7l9.4 -5.1l4.8 -1.6l6.8 1.6l11.3 2.5l5.5 0.3M565.3 710.7l4.7 2.6l10.0 1.7l10.1 5.3l4.0 7.9M1089.6 211.2l5.3 0.0l10.1 -0.0l9.3 -1.0l6.2 1.1l6.7 -2.4M472.9 265.9l8.1 4.8l6.1 -0.0l8.3 -4.1l11.5 -2.5M676.4 897.8l-7.0 4.2l-4.4 2.8l-10.7 3.6l-7.9 8.0l-8.7 3.5M893.3 485.9l-3.5 -8.1l0.7 -5.1M734.1 159.8l-4.0 -4.5l-10.2 -2.3l-8.2 -2.0l-5.3 -3.0l-6.4 -5.6M1090.2 683.7l8.5 -4.7l9.3 -4.0l10.1 -6.0l11.4 1.2M863.8 386.2l-6.5 0.5l-9.2 -1.3l-7.7 4.7l-6.7 6.8M823.0 760.4l-10.2 4.2l-8.1 -2.4l-3.9 -3.6l-4.4 -3.4l-6.1 -3.6M784.6 686.3l6.0 -3.5l5.3 -9.7l4.1 -9.2M599.9 705.8l-10.4 -3.0l-5.5 -0.0M601.0 745.8l-1.0 9.8l-2.1 6.6l-3.5 6.3l-6.8 7.2l-5.2 0.9M1026.4 768.3l-0.8 10.9l-3.7 5.7l-4.5 6.8M429.8 205.1l-1.3 -9.1l2.1 -5.2M625.2 790.4l-6.5 -8.0l-5.0 -9.6l-4.5 -4.2M1078.1 314.3l3.6 -10.8l-0.7 -11.3l1.1 -11.7M978.6 629.0l-7.8 1.5l-7.0 1.7l-5.1 5.8l-6.7 5.0l-5.3 3.6M601.5 543.9l5.0 3.6l8.2 0.9l6.8 0.7l8.8 -0.7M971.7 597.0l7.9 8.7l0.4 6.0M839.6 888.4l-2.9 4.3l-1.0 5.8l1.2 9.3M825.4 874.0l-4.8 -10.4l-8.8 -7.7l-3.6 -5.0l-5.5 -3.1M626.7 689.9l-2.3 -6.0l-7.1 -4.9M898.7 723.5l-2.0 11.3l-7.4 6.3M935.9 143.4l6.7 -1.8l9.5 2.8l7.1 2.2l7.2 4.9l8.9 1.4M1138.3 841.6l-2.9 6.2l-7.1 4.8l-7.8 8.8M709.1 680.4l10.1 -1.2l5.5 -2.6l7.8 -5.7l12.0 0.0l7.2 6.0M891.9 266.4l-3.9 -10.6l-3.8 -4.6l-5.6 -2.4M844.2 760.3l3.6 7.0l2.1 4.7M453.8 468.3l4.6 9.7l4.1 3.9M762.4 441.2l-1.4 9.6l-4.7 6.7M781.3 855.1l-6.6 -1.6l-8.4 -5.9l-5.1 -2.1M966.3 199.3l-1.1 -6.0l-3.2 -6.6l1.2 -9.9l0.2 -6.2l-3.4 -4.8M1034.8 642.3l4.1 3.3l8.6 0.4M961.6 289.7l-7.5 2.9l-5.6 0.8l-4.6 -2.1M574.9 449.5l1.9 6.8l3.0 6.0M897.8 396.9l7.0 3.9l5.5 0.1l11.9 1.0l4.5 3.5l6.6 5.2M553.8 659.1l-11.0 3.6l-8.3 -1.0l-7.8 3.1l-6.1 7.7l-7.3 5.3M1129.6 176.9l-5.0 -5.3l-8.9 -1.7M943.1 410.6l-4.9 -9.6l-6.5 -4.7l-5.8 -1.0l-7.8 -1.9M584.1 842.4l-1.5 -5.6l-4.1 -8.8l-4.8 -2.3l-10.8 -2.6M1144.3 387.7l9.5 0.8l6.8 5.9l8.3 2.4l7.1 1.9l8.5 0.7M843.8 313.8l-1.4 7.8l-2.5 5.8l-3.0 6.2M977.8 685.2l-1.8 -11.3l-1.1 -7.6l-3.3 -7.1l-1.5 -10.6l-1.7 -10.0M567.7 491.0l-3.2 4.6l-3.9 8.7l-9.1 7.6l-7.1 7.2M599.3 424.9l7.8 -0.9l9.1 -1.9M1066.0 812.4l-1.0 8.2l-4.3 9.2l0.0 5.7M556.0 834.0l7.4 8.0l1.8 7.9l2.4 6.8M1128.0 283.6l9.0 3.6l5.3 0.1l4.9 -2.3l5.2 -3.1M988.2 535.1l6.4 4.5l5.0 4.6l7.7 0.6l5.1 -0.5M684.6 729.7l-4.0 4.9l-0.2 9.7M860.7 368.8l5.8 7.0l4.0 6.1l6.9 2.4M885.3 606.7l-7.7 2.4l-10.6 -4.3M422.3 318.2l-1.7 10.9l1.9 8.9l2.0 4.9l-0.4 10.7l3.0 10.0M763.7 904.0l8.8 2.6l9.1 -1.5l11.4 -2.4l9.1 -7.4l10.3 -0.2M961.5 866.8l4.4 -4.7l0.3 -5.6l-3.8 -6.6l-4.9 -7.0M623.9 683.9l-7.8 3.8l-3.8 5.9l-3.9 5.3M696.2 796.6l-5.3 -1.9l-4.3 -6.3l-8.7 -4.0l-6.5 -3.4M652.7 794.4l1.3 11.2l2.4 4.4l-1.3 6.3l-1.8 7.3l0.6 6.2M929.5 269.1l2.5 -6.1l8.4 -5.0M908.3 525.7l-5.4 0.6l-5.3 3.4l-8.4 1.1M927.8 736.8l-6.7 -5.7l-5.4 -8.6l-6.2 -3.1l-6.3 -1.2M1127.5 750.0l10.1 -1.4l5.4 -2.2l8.4 0.9M815.7 268.7l9.2 -2.0l9.8 -0.8M788.0 255.9l-1.1 -10.7l-0.3 -5.1M1066.2 481.7l5.8 -9.4l1.5 -11.2l-0.5 -5.2l-1.7 -5.2l-7.5 -5.7M499.9 265.3l0.1 10.1l3.6 5.3l-0.5 9.2l-5.8 6.7M415.0 187.5l3.9 10.8l2.5 8.9l-1.4 5.8l-4.1 7.2M989.5 494.0l6.1 8.2l1.2 6.6l-0.7 7.7M575.9 309.7l7.0 -2.5l8.8 -3.3l10.6 0.1l7.5 2.3M528.7 525.1l5.3 -8.9l2.6 -5.7l5.7 -3.0l9.5 1.4l8.8 -1.8M1074.0 345.6l-4.3 6.3l-4.2 5.0M732.9 143.5l3.9 -4.5l6.4 -6.3l9.7 -2.2l7.5 -6.2M481.4 891.5l-8.5 4.6l-6.3 -0.9l-7.2 3.2l-5.6 2.4l-7.7 7.9M696.6 257.0l7.1 5.7l9.2 2.3l5.5 1.3M1132.5 814.7l-6.2 1.9l-7.1 -0.7M946.0 318.2l-8.0 -2.3l-9.0 3.1l-6.1 0.4l-10.1 -0.1M485.4 789.6l2.1 -6.1l-0.1 -10.8M604.5 282.8l6.2 -2.5l7.8 1.1l9.7 5.3l10.2 -0.4l8.4 -0.9M428.0 316.1l-6.6 4.3l-7.7 -0.2l-5.4 1.3l-7.9 -3.3M735.4 479.4l-2.1 -10.6l3.9 -10.0l-0.2 -5.3l-4.9 -10.6l1.6 -11.9M785.3 233.4l1.3 -4.9l4.0 -8.5l6.6 -5.0l2.8 -6.5l6.5 -7.7M561.6 638.1l-7.7 -2.5l-9.2 -0.6l-5.8 0.9l-7.0 -0.6M992.9 378.0l-9.8 2.5l-7.6 8.7l-0.5 10.1M682.4 280.7l-5.8 0.6l-8.3 1.3l-5.6 1.3l-7.2 -2.7l-8.3 0.5M935.0 434.4l-7.6 -5.0l-4.8 -4.9l-1.1 -6.0l-3.0 -8.8M677.0 607.7l-1.3 11.2l2.2 8.7l1.9 4.9M738.0 848.9l-3.2 4.4l-5.4 2.0l-8.1 5.9l-2.0 7.4l2.1 8.0M422.6 258.7l-2.3 8.6l-2.2 5.0M624.2 890.0l-9.5 6.9l-10.1 6.1l-8.5 4.5M635.7 187.1l9.8 0.9l9.8 2.1l8.4 -0.8l6.9 -4.1l6.1 -6.8M631.1 354.2l-8.2 -2.8l-7.5 -0.8M644.0 784.7l-0.7 7.9l-4.1 5.6l-10.9 2.9l-10.6 -4.7M600.3 770.7l-8.7 -1.7l-10.1 3.4l-3.6 5.8M928.8 420.2l-3.1 -5.4l-2.2 -6.8l0.7 -6.3M883.5 550.1l-7.7 -1.1l-5.9 -2.5l-7.2 -5.3M1129.5 362.6l-3.3 -5.4l0.9 -11.7l5.3 -10.7l4.4 -9.9l0.5 -10.2M937.2 866.6l7.2 -3.9l6.8 -6.2l11.2 -0.6l7.8 -4.2M541.1 210.4l8.4 -7.2l4.7 -3.7l9.8 -6.7M1008.9 891.1l0.6 7.7l5.6 5.8M690.6 151.8l5.0 -2.6l7.7 1.2l9.0 -1.9l7.7 -2.1l5.6 -0.2M741.0 306.4l3.6 4.6l0.9 5.1M934.3 767.0l0.6 -6.1l1.0 -6.8l0.1 -6.3M932.3 584.4l3.6 -10.9l6.2 -6.5l5.7 -10.0l1.9 -5.4M656.3 687.3l11.3 -2.3l8.0 1.5l10.2 1.4l5.7 -0.7M867.1 766.5l2.6 5.9l1.2 6.2l4.1 9.2M765.8 177.9l0.5 -5.5l0.1 -5.1M764.8 460.1l4.7 -3.7l2.2 -7.6l0.5 -9.4l-0.3 -5.4l2.3 -4.5M438.5 750.2l-4.0 3.1l-1.8 5.1l-2.5 10.6M924.5 887.8l3.1 -4.0l3.3 -6.0l3.4 -4.3l5.1 -5.7l5.1 -5.9M486.2 706.7l-2.0 -9.0l3.5 -11.4M969.3 177.3l4.3 -2.5l9.5 -6.0l5.9 -5.8l2.3 -9.1M855.1 182.5l-7.3 5.2l-9.0 0.3l-4.1 -3.2M749.5 568.4l0.2 -8.3l1.9 -8.5l5.6 -10.2M421.2 389.3l6.2 -2.6l6.1 1.0M604.2 707.7l3.9 -4.6l9.7 -4.5l4.4 -6.8l10.5 -5.1M524.0 488.1l4.8 -1.9l6.5 -5.4l6.1 -0.5l7.2 3.0M814.2 858.4l7.5 -1.5l8.1 3.5l10.8 -2.6l7.9 2.1M963.7 518.1l1.7 -11.4l3.6 -5.5M411.7 811.6l5.4 -3.2l7.0 -5.0M1005.0 898.1l6.5 3.1l7.4 6.4l3.3 8.3M613.9 336.3l-6.9 -3.2l-9.8 0.6l-8.3 7.4M559.4 378.4l6.0 -3.5l8.2 -1.2l5.8 1.8l7.2 -1.9M1058.6 267.0l9.6 -1.1l5.2 -4.3M899.4 816.4l-3.5 7.0l-0.4 9.1l0.3 7.4l0.8 7.5l-4.1 10.3M460.3 465.2l1.0 7.2l4.7 10.0" stroke="#c7a574" stroke-width="0.9" stroke-dasharray="3.2 1.6" fill="none"/><path d="M880.9 513.0l-9.3 2.2l-12.8 1.9M599.7 341.7l7.0 8.6l4.7 5.9l12.4 4.0l10.4 9.0M663.4 637.1l-10.7 -8.1l-5.7 -6.3l-5.4 -6.3l-6.8 -6.9M1082.4 841.4l10.4 -3.5l6.0 -5.3l4.6 -4.0M933.1 758.2l-4.6 7.7l-6.2 4.6l-9.2 3.2l-6.8 3.2M999.9 706.3l7.2 2.5l11.1 2.0M915.9 492.8l-4.1 5.1l-6.9 8.1l-8.3 11.1M715.4 413.0l-7.5 8.1l-9.5 10.2M653.5 439.6l13.8 -0.9l7.7 0.1l6.3 -3.7l9.3 -8.0M1065.5 324.5l5.8 -7.3l1.9 -11.7l-1.7 -7.5M479.0 260.0l-6.5 0.4l-11.2 0.0l-6.0 2.1l-5.9 2.1M953.2 624.9l-5.6 5.9l-4.8 5.4l-11.7 6.9M1074.1 728.0l4.7 7.8l3.4 6.7l-1.1 11.3l-1.5 11.0M484.7 400.2l6.2 7.3l3.2 11.8l0.0 8.4M582.0 685.7l-4.7 9.4l-3.8 8.0l-8.4 10.4l-2.2 12.7M834.4 722.8l-11.1 -5.0l-7.5 -1.6l-8.9 -5.4l-6.5 -7.5M437.9 737.4l-1.5 11.5l1.3 11.4l6.3 10.3M1001.0 623.8l6.5 -8.6l6.0 -4.6l5.6 -6.7M481.6 411.0l-4.9 -7.9l-6.5 -6.2l-8.9 -10.5l-9.7 -7.1M715.3 637.9l-11.4 -0.4l-7.5 -4.5l-10.3 -9.2M947.3 313.6l-1.8 7.9l-0.5 11.8M887.3 359.6l-8.4 3.1l-8.6 1.6l-9.3 1.7M474.8 855.7l-12.2 -0.3l-8.4 -2.5l-8.6 -8.8M824.5 509.1l-1.5 7.9l-3.2 7.2M593.3 332.6l6.2 8.2l2.1 8.5l2.8 11.0l6.4 9.0M724.0 900.5l3.7 5.6l6.8 7.2l8.9 9.6l2.2 10.8M791.4 256.7l-5.3 10.9l-5.5 12.3l-2.0 9.0M1115.8 407.5l8.7 -5.6l6.9 -0.3l11.3 4.5M962.5 605.8l12.1 1.8l7.8 3.5M914.9 459.0l-2.6 -10.7l1.2 -9.6M609.8 406.6l0.2 -7.4l-2.8 -8.3M839.1 287.3l2.6 -6.1l7.1 -9.4M857.0 154.2l11.3 0.6l12.9 -3.2l9.9 -3.6M799.8 351.1l-7.7 -0.3l-12.2 4.9M900.3 592.1l10.4 8.1l9.7 6.3l11.6 7.7M777.8 593.2l3.4 -6.2l5.5 -5.0M983.3 453.9l8.9 -3.0l6.5 -4.5l8.9 -6.8l11.0 -7.1M787.4 537.7l5.9 -3.3l5.3 -5.8M445.6 282.0l11.0 7.0l8.2 8.5l3.7 7.5M947.6 301.1l-9.3 -2.9l-10.1 2.6l-7.2 4.9l-11.8 1.3M735.5 232.6l2.0 -12.1l1.9 -10.3l7.1 -8.6M893.8 596.5l-7.0 -0.3l-9.4 0.4l-10.4 1.3M677.2 444.0l-8.3 7.0l-6.1 6.0l-3.3 9.4M539.8 234.6l12.2 -4.5l8.2 1.5l8.5 1.2l12.1 -5.1M1026.6 328.1l-6.1 11.7l-2.8 6.3l-0.5 12.5l-3.3 8.3M668.2 773.1l3.0 -13.4l1.0 -7.7l3.7 -8.8M837.9 750.5l7.7 -8.6l1.3 -9.2l1.7 -11.6l7.2 -7.9M734.5 309.8l9.2 -8.5l5.1 -10.6M654.4 871.2l6.1 0.9l13.3 -2.1l8.5 -5.2M1031.5 487.8l-0.5 8.4l-2.6 12.9M790.2 338.6l-10.5 -5.4l-11.3 -2.6l-10.8 1.3M843.4 484.8l5.1 -7.6l7.3 -5.7l7.0 -5.9l12.3 -4.7M724.2 853.2l1.5 7.5l-4.7 11.7l0.9 13.3l-6.4 10.8M788.5 603.1l9.0 7.1l4.5 4.0l5.3 7.8l7.3 3.5M566.8 777.2l-12.6 -5.8l-8.4 -9.0l-5.9 -9.9M451.1 717.2l-6.3 0.3l-7.3 3.5l-11.5 5.1l-9.0 2.9M589.2 899.9l-0.4 -12.8l-3.7 -13.4l0.5 -9.2M984.9 746.0l-7.5 1.1l-13.5 -3.0l-10.6 -4.4l-8.1 -1.1M474.8 902.3l10.5 1.4l8.3 2.7l11.0 0.4l12.2 6.3M790.9 369.9l-5.3 -3.3l-9.4 -3.9" stroke="#f4a9a0" stroke-width="0.9" stroke-dasharray="1.2 1.8" fill="none"/>
<polyline points="411.1,189.3 424.5,178.3 441.6,167.3 461.2,157.5 475.8,149.0 483.1,142.4" fill="none" stroke="#aad3df" stroke-width="2.2" stroke-linejoin="round" stroke-linecap="round"/>
<polyline points="425.8,168.5 429.4,171.0 441.6,167.3" fill="none" stroke="#aad3df" stroke-width="1.6" stroke-linejoin="round" stroke-linecap="round"/>
<polyline points="474.6,152.6 472.1,169.7 474.6,188.0" fill="none" stroke="#aad3df" stroke-width="1.6" stroke-linejoin="round" stroke-linecap="round"/>
<polyline points="463.6,169.7 461.6,186.8 463.6,201.5" fill="none" stroke="#aad3df" stroke-width="1.6" stroke-linejoin="round" stroke-linecap="round"/>
<polyline points="413.5,196.6 418.4,216.1 422.1,240.5" fill="none" stroke="#aad3df" stroke-width="2" stroke-linejoin="round" stroke-linecap="round"/>
<polyline points="411.1,243.0 414.8,257.6" fill="none" stroke="#aad3df" stroke-width="2" stroke-linejoin="round" stroke-linecap="round"/>
<polyline points="500.2,251.5 510.0,235.7 522.2,218.6 536.8,206.4 551.5,203.4 575.9,208.8 600.3,208.8 619.8,203.9 627.2,194.2 632.1,177.1 639.4,160.0 645.5,149.0 644.3,142.4" fill="none" stroke="#aad3df" stroke-width="2.2" stroke-linejoin="round" stroke-linecap="round"/>
<polyline points="645.5,149.0 661.3,155.1 668.7,164.9 671.1,174.6" fill="none" stroke="#aad3df" stroke-width="1.6" stroke-linejoin="round" stroke-linecap="round"/>
<polyline points="491.7,286.9 502.7,299.1 510.0,313.8 513.6,328.4 512.4,338.0" fill="none" stroke="#aad3df" stroke-width="1.6" stroke-linejoin="round" stroke-linecap="round"/>
<polyline points="470.9,301.6 478.2,313.8 502.7,328.4" fill="none" stroke="#aad3df" stroke-width="1.6" stroke-linejoin="round" stroke-linecap="round"/>
<polyline points="527.1,304.0 532.0,318.7 535.6,338.0" fill="none" stroke="#aad3df" stroke-width="1.6" stroke-linejoin="round" stroke-linecap="round"/>
<polyline points="615.0,323.5 634.5,316.2 649.1,308.9 658.9,296.7 673.6,286.9 685.0,282.0" fill="none" stroke="#aad3df" stroke-width="1.6" stroke-linejoin="round" stroke-linecap="round"/>
<polyline points="719.8,142.2 721.8,156.8 720.8,175.7 715.6,188.2 709.3,198.7 713.5,209.1 728.1,217.5 736.5,225.9 739.6,229.0" fill="none" stroke="#aad3df" stroke-width="2.2" stroke-linejoin="round" stroke-linecap="round"/>
<polyline points="721.8,158.9 734.4,163.1 747.0,161.0 757.4,153.7 772.1,149.5 775.2,163.1 793.0,165.2 800.3,169.4 813.9,169.4 830.7,166.2 849.5,165.2" fill="none" stroke="#aad3df" stroke-width="1.6" stroke-linejoin="round" stroke-linecap="round"/>
<polyline points="907.0,153.7 919.6,149.5 930.0,150.6 938.4,154.7 948.8,150.6 953.0,146.4 961.4,148.5 969.8,145.3" fill="none" stroke="#aad3df" stroke-width="2" stroke-linejoin="round" stroke-linecap="round"/>
<polyline points="986.5,142.2 971.9,148.5 961.4,158.9 956.2,175.7 957.2,192.4 952.0,207.1 948.8,221.7 943.6,229.0" fill="none" stroke="#aad3df" stroke-width="2" stroke-linejoin="round" stroke-linecap="round"/>
<polyline points="499.0,430.1 502.7,417.9 510.0,403.2 527.1,393.5 541.7,388.6 556.4,388.6 573.5,398.4 580.8,413.0 588.1,432.5 594.2,447.2" fill="none" stroke="#aad3df" stroke-width="2.2" stroke-linejoin="round" stroke-linecap="round"/>
<polyline points="480.7,338.5 497.8,344.6 507.5,354.4 527.1,361.7 541.7,373.9 549.0,386.2" fill="none" stroke="#aad3df" stroke-width="2" stroke-linejoin="round" stroke-linecap="round"/>
<polyline points="510.0,330.0 519.7,342.2 524.6,354.4 532.0,366.6" fill="none" stroke="#aad3df" stroke-width="1.8" stroke-linejoin="round" stroke-linecap="round"/>
<polyline points="492.9,347.1 502.7,347.1 507.5,354.4" fill="none" stroke="#aad3df" stroke-width="1.8" stroke-linejoin="round" stroke-linecap="round"/>
<polyline points="600.3,354.4 612.5,361.7 619.8,373.9" fill="none" stroke="#aad3df" stroke-width="1.6" stroke-linejoin="round" stroke-linecap="round"/>
<polyline points="632.1,373.9 649.1,381.3 663.8,391.0 651.6,400.8" fill="none" stroke="#aad3df" stroke-width="1.6" stroke-linejoin="round" stroke-linecap="round"/>
<polyline points="411.1,493.6 417.2,505.8 427.0,518.0 431.9,530.0" fill="none" stroke="#aad3df" stroke-width="1.8" stroke-linejoin="round" stroke-linecap="round"/>
<polyline points="534.4,330.0 536.8,344.6 541.7,356.9" fill="none" stroke="#aad3df" stroke-width="1.2" stroke-linejoin="round" stroke-linecap="round"/>
<polyline points="452.3,674.4 457.3,664.4 469.8,659.4 484.7,661.9 487.2,671.9 479.7,678.1 487.2,681.9 497.2,676.9 504.7,666.9 505.9,654.5" fill="none" stroke="#aad3df" stroke-width="2.6" stroke-linejoin="round" stroke-linecap="round"/>
<polyline points="454.8,674.4 452.3,689.3" fill="none" stroke="#aad3df" stroke-width="2.2" stroke-linejoin="round" stroke-linecap="round"/>
<polyline points="463.5,709.3 461.1,724.2 464.8,739.9" fill="none" stroke="#aad3df" stroke-width="2.4" stroke-linejoin="round" stroke-linecap="round"/>
<polyline points="419.9,512.5 427.4,522.4 437.4,532.4 439.9,544.8" fill="none" stroke="#aad3df" stroke-width="1.6" stroke-linejoin="round" stroke-linecap="round"/>
<polyline points="422.4,549.8 429.9,547.3 437.4,544.8" fill="none" stroke="#aad3df" stroke-width="2" stroke-linejoin="round" stroke-linecap="round"/>
<polyline points="461.2,714.0 463.6,728.6 473.4,743.3 478.2,753.1" fill="none" stroke="#aad3df" stroke-width="2.6" stroke-linejoin="round" stroke-linecap="round"/>
<polyline points="411.1,880.0 434.3,870.2 453.8,882.5 468.5,886.1 483.1,880.0" fill="none" stroke="#aad3df" stroke-width="2" stroke-linejoin="round" stroke-linecap="round"/>
<polyline points="490.4,753.1 502.7,750.6 517.3,755.5 532.0,765.3 546.6,770.2 561.2,762.8 568.6,762.8 568.6,777.5" fill="none" stroke="#aad3df" stroke-width="1.8" stroke-linejoin="round" stroke-linecap="round"/>
<polyline points="490.4,753.1 490.4,770.2 492.9,784.8 485.6,799.4 488.0,816.5 497.8,833.6 499.0,845.8 490.4,858.0 491.7,870.2 483.1,882.5 481.9,899.5 483.1,914.0" fill="none" stroke="#aad3df" stroke-width="1.8" stroke-linejoin="round" stroke-linecap="round"/>
<polyline points="591.8,798.2 600.3,816.5 607.6,836.1 615.0,855.6 619.8,872.7 619.8,889.8 624.7,904.4 639.4,909.3 658.9,904.4 673.6,902.0 685.0,899.5" fill="none" stroke="#aad3df" stroke-width="2.2" stroke-linejoin="round" stroke-linecap="round"/>
<polyline points="670.0,909.1 676.3,898.6 686.7,893.4 701.4,897.5 716.0,901.7 732.8,895.5 749.5,897.5 760.0,903.8 770.4,898.6 768.3,883.9 778.8,879.8 793.5,876.6 799.7,881.8 806.0,879.8 809.2,888.1 806.0,902.8 807.1,914.3" fill="none" stroke="#aad3df" stroke-width="2" stroke-linejoin="round" stroke-linecap="round"/>
<polyline points="453.8,328.4 468.5,321.1 478.2,313.8 502.7,318.7 507.5,304.0 519.7,299.1 524.6,291.8 536.8,290.6 551.5,291.8 571.0,301.6 580.8,311.3 597.9,311.3 615.0,301.6 622.3,286.9 639.4,277.2 658.9,275.9 676.0,278.4" fill="none" stroke="#b184d6" stroke-width="1.7" stroke-dasharray="3.6 2.2" stroke-linejoin="round"/>
<polyline points="719.8,142.2 721.8,156.8 720.8,175.7 715.6,188.2 709.3,198.7 713.5,209.1 728.1,217.5 736.5,225.9 739.6,229.0" fill="none" stroke="#b184d6" stroke-width="1.7" stroke-dasharray="3.6 2.2" stroke-linejoin="round"/>
<polyline points="986.5,142.2 971.9,148.5 961.4,158.9 956.2,175.7 957.2,192.4 952.0,207.1 948.8,221.7 943.6,229.0" fill="none" stroke="#b184d6" stroke-width="1.7" stroke-dasharray="3.6 2.2" stroke-linejoin="round"/>
<polyline points="459.9,334.9 464.8,347.1 453.8,354.4 434.3,356.9 435.5,369.1 431.9,386.2 436.7,388.6" fill="none" stroke="#b184d6" stroke-width="1.7" stroke-dasharray="3.6 2.2" stroke-linejoin="round"/>
<polyline points="411.1,413.0 417.2,420.3 414.8,432.5" fill="none" stroke="#b184d6" stroke-width="1.7" stroke-dasharray="3.6 2.2" stroke-linejoin="round"/>
<polyline points="411.2,622.1 429.9,614.6 454.8,609.6 477.2,604.6" fill="none" stroke="#b184d6" stroke-width="1.7" stroke-dasharray="3.6 2.2" stroke-linejoin="round"/>
<polyline points="490.4,753.1 502.7,750.6 517.3,755.5 532.0,765.3 546.6,770.2 561.2,762.8 568.6,762.8 568.6,777.5" fill="none" stroke="#b184d6" stroke-width="1.7" stroke-dasharray="3.6 2.2" stroke-linejoin="round"/>
<polyline points="490.4,753.1 490.4,770.2 492.9,784.8 485.6,799.4 488.0,816.5 497.8,833.6 499.0,845.8 490.4,858.0 491.7,870.2 483.1,882.5 481.9,899.5 483.1,914.0" fill="none" stroke="#b184d6" stroke-width="1.7" stroke-dasharray="3.6 2.2" stroke-linejoin="round"/>
<polyline points="591.8,798.2 600.3,816.5 607.6,836.1 615.0,855.6 619.8,872.7 619.8,889.8 624.7,904.4 639.4,909.3 658.9,904.4 673.6,902.0 685.0,899.5" fill="none" stroke="#b184d6" stroke-width="1.7" stroke-dasharray="3.6 2.2" stroke-linejoin="round"/>
<polyline points="411.1,787.2 434.3,779.9 461.2,773.8 475.8,765.3 488.0,757.9" fill="none" stroke="#b184d6" stroke-width="1.7" stroke-dasharray="3.6 2.2" stroke-linejoin="round"/>
<polyline points="670.0,909.1 676.3,898.6 686.7,893.4 701.4,897.5 716.0,901.7 732.8,895.5 749.5,897.5 760.0,903.8 770.4,898.6 768.3,883.9 778.8,879.8 793.5,876.6 799.7,881.8 806.0,879.8 809.2,888.1 806.0,902.8 807.1,914.3" fill="none" stroke="#b184d6" stroke-width="1.7" stroke-dasharray="3.6 2.2" stroke-linejoin="round"/>
<polyline points="990.7,911.1 1001.2,898.6 1015.8,890.2 1032.5,892.3 1049.3,894.4 1053.5,883.9 1070.2,877.7 1080.7,871.4 1084.9,866.2" fill="none" stroke="#b184d6" stroke-width="1.7" stroke-dasharray="3.6 2.2" stroke-linejoin="round"/>
<polyline points="580.8,142.4 595.4,146.5 607.6,160.0 612.5,179.5 624.7,194.2 646.7,211.2 663.8,223.4 678.4,232.0" fill="none" stroke="#c4c1bb" stroke-width="4" stroke-linejoin="round" stroke-linecap="round"/>
<polyline points="649.1,213.7 639.4,235.7 629.6,255.2 624.7,269.8 610.1,284.5 602.8,296.7 593.0,308.9 583.2,316.2 580.8,338.0" fill="none" stroke="#c4c1bb" stroke-width="4" stroke-linejoin="round" stroke-linecap="round"/>
<polyline points="411.1,319.9 434.3,306.5 463.6,289.4 488.0,284.5 502.7,289.4 512.4,301.6 532.0,301.6 544.2,308.9 553.9,323.5 557.6,338.0" fill="none" stroke="#c4c1bb" stroke-width="4" stroke-linejoin="round" stroke-linecap="round"/>
<polyline points="602.8,296.7 607.6,313.8 619.8,330.9 624.7,338.0" fill="none" stroke="#c4c1bb" stroke-width="3.4" stroke-linejoin="round" stroke-linecap="round"/>
<polyline points="411.1,272.3 439.2,275.9 461.2,284.5 470.9,286.4" fill="none" stroke="#c4c1bb" stroke-width="2.6" stroke-linejoin="round" stroke-linecap="round"/>
<polyline points="649.1,216.1 663.8,235.7 673.6,243.0" fill="none" stroke="#c4c1bb" stroke-width="2.6" stroke-linejoin="round" stroke-linecap="round"/>
<polyline points="556.4,145.3 563.7,142.9 573.5,145.3 566.1,149.0 557.6,147.8" fill="none" stroke="#c4c1bb" stroke-width="3" stroke-linejoin="round" stroke-linecap="round"/>
<polyline points="813.9,142.2 826.5,163.1 834.8,188.2 826.5,200.8 818.1,207.1" fill="none" stroke="#c4c1bb" stroke-width="2.8" stroke-linejoin="round" stroke-linecap="round"/>
<polyline points="834.8,188.2 847.4,200.8 864.1,207.1 897.6,205.0" fill="none" stroke="#c4c1bb" stroke-width="2.8" stroke-linejoin="round" stroke-linecap="round"/>
<polyline points="749.1,217.5 763.7,217.5 774.2,211.2 776.3,202.9" fill="none" stroke="#c4c1bb" stroke-width="3.6" stroke-linejoin="round" stroke-linecap="round"/>
<polyline points="747.0,194.5 755.3,207.1 767.9,209.1" fill="none" stroke="#c4c1bb" stroke-width="2.8" stroke-linejoin="round" stroke-linecap="round"/>
<polyline points="767.9,188.2 780.4,194.5 797.2,188.2 813.9,181.9 830.7,179.8 847.4,184.0" fill="none" stroke="#c4c1bb" stroke-width="2.8" stroke-linejoin="round" stroke-linecap="round"/>
<polyline points="784.6,200.8 805.5,194.5 826.5,188.2" fill="none" stroke="#c4c1bb" stroke-width="2.8" stroke-linejoin="round" stroke-linecap="round"/>
<polyline points="826.5,163.1 839.0,156.8 855.8,152.6 864.1,146.4" fill="none" stroke="#c4c1bb" stroke-width="2.8" stroke-linejoin="round" stroke-linecap="round"/>
<polyline points="826.5,169.4 839.0,163.1 851.6,165.2 847.4,171.5 830.7,172.5" fill="none" stroke="#c4c1bb" stroke-width="2.8" stroke-linejoin="round" stroke-linecap="round"/>
<polyline points="847.4,219.6 860.0,221.7 868.3,225.9" fill="none" stroke="#c4c1bb" stroke-width="2.8" stroke-linejoin="round" stroke-linecap="round"/>
<polyline points="868.3,200.8 880.9,196.6 897.6,194.5" fill="none" stroke="#c4c1bb" stroke-width="2.8" stroke-linejoin="round" stroke-linecap="round"/>
<polyline points="897.6,181.9 910.2,181.9 920.0,180.9" fill="none" stroke="#c4c1bb" stroke-width="2.8" stroke-linejoin="round" stroke-linecap="round"/>
<polyline points="751.1,200.8 759.5,192.4 770.0,196.6 778.3,190.3" fill="none" stroke="#c4c1bb" stroke-width="2.5" stroke-linejoin="round" stroke-linecap="round"/>
<polyline points="755.3,213.3 767.9,211.2 774.2,205.0" fill="none" stroke="#c4c1bb" stroke-width="2.5" stroke-linejoin="round" stroke-linecap="round"/>
<polyline points="778.3,198.7 788.8,192.4 797.2,196.6 809.7,190.3 822.3,192.4" fill="none" stroke="#c4c1bb" stroke-width="2.5" stroke-linejoin="round" stroke-linecap="round"/>
<polyline points="788.8,205.0 801.4,200.8 813.9,202.9 826.5,196.6" fill="none" stroke="#c4c1bb" stroke-width="2.5" stroke-linejoin="round" stroke-linecap="round"/>
<polyline points="805.5,213.3 818.1,209.1 830.7,211.2 839.0,205.0" fill="none" stroke="#c4c1bb" stroke-width="2.5" stroke-linejoin="round" stroke-linecap="round"/>
<polyline points="813.9,221.7 826.5,217.5 839.0,221.7 851.6,217.5" fill="none" stroke="#c4c1bb" stroke-width="2.5" stroke-linejoin="round" stroke-linecap="round"/>
<polyline points="839.0,192.4 847.4,188.2 855.8,192.4" fill="none" stroke="#c4c1bb" stroke-width="2.5" stroke-linejoin="round" stroke-linecap="round"/>
<polyline points="839.0,200.8 853.7,198.7" fill="none" stroke="#c4c1bb" stroke-width="2.5" stroke-linejoin="round" stroke-linecap="round"/>
<polyline points="864.1,192.4 876.7,190.3 889.2,192.4" fill="none" stroke="#c4c1bb" stroke-width="2.5" stroke-linejoin="round" stroke-linecap="round"/>
<polyline points="868.3,209.1 880.9,207.1 893.4,209.1" fill="none" stroke="#c4c1bb" stroke-width="2.5" stroke-linejoin="round" stroke-linecap="round"/>
<polyline points="872.5,221.7 885.1,219.6 895.5,221.7" fill="none" stroke="#c4c1bb" stroke-width="2.5" stroke-linejoin="round" stroke-linecap="round"/>
<polyline points="818.1,179.8 826.5,177.8 839.0,179.8 847.4,175.7" fill="none" stroke="#c4c1bb" stroke-width="2.5" stroke-linejoin="round" stroke-linecap="round"/>
<polyline points="801.4,186.1 809.7,184.0 818.1,186.1" fill="none" stroke="#c4c1bb" stroke-width="2.5" stroke-linejoin="round" stroke-linecap="round"/>
<polyline points="1017.9,144.3 1032.5,150.6 1053.5,152.6 1061.8,150.6 1074.4,142.2" fill="none" stroke="#c4c1bb" stroke-width="2.8" stroke-linejoin="round" stroke-linecap="round"/>
<polyline points="1061.8,150.6 1057.7,165.2 1053.5,179.8 1053.5,200.8 1061.8,217.5 1066.0,229.0" fill="none" stroke="#c4c1bb" stroke-width="3.2" stroke-linejoin="round" stroke-linecap="round"/>
<polyline points="1053.5,179.8 1036.7,177.8 1020.0,169.4 1007.4,167.3 994.9,173.6 997.0,192.4 986.5,205.0 976.1,217.5 974.0,229.0" fill="none" stroke="#c4c1bb" stroke-width="2.8" stroke-linejoin="round" stroke-linecap="round"/>
<polyline points="1087.0,150.6 1107.9,156.8 1128.8,156.8 1147.0,154.7" fill="none" stroke="#c4c1bb" stroke-width="2.8" stroke-linejoin="round" stroke-linecap="round"/>
<polyline points="1087.0,150.6 1095.3,167.3 1116.2,190.3 1137.2,207.1 1147.0,211.2" fill="none" stroke="#c4c1bb" stroke-width="2.8" stroke-linejoin="round" stroke-linecap="round"/>
<polyline points="1061.8,200.8 1074.4,200.8 1091.1,196.6 1091.1,184.0 1084.9,181.9" fill="none" stroke="#c4c1bb" stroke-width="2.8" stroke-linejoin="round" stroke-linecap="round"/>
<polyline points="1053.5,223.8 1066.0,221.7 1082.8,223.8 1095.3,229.0" fill="none" stroke="#c4c1bb" stroke-width="2.8" stroke-linejoin="round" stroke-linecap="round"/>
<polyline points="907.0,179.8 919.6,177.8 934.2,175.7" fill="none" stroke="#c4c1bb" stroke-width="2.6" stroke-linejoin="round" stroke-linecap="round"/>
<polyline points="1078.6,144.3 1080.7,154.7 1072.3,158.9" fill="none" stroke="#c4c1bb" stroke-width="3" stroke-linejoin="round" stroke-linecap="round"/>
<polyline points="1053.5,142.2 1061.8,150.6" fill="none" stroke="#c4c1bb" stroke-width="3" stroke-linejoin="round" stroke-linecap="round"/>
<polyline points="556.4,330.0 558.8,349.5 563.7,361.7 575.9,373.9 585.7,381.3 607.6,393.5 617.4,403.2 619.8,415.4" fill="none" stroke="#c4c1bb" stroke-width="3.4" stroke-linejoin="round" stroke-linecap="round"/>
<polyline points="585.7,330.0 578.3,344.6 578.3,361.7 583.2,378.8" fill="none" stroke="#c4c1bb" stroke-width="3.4" stroke-linejoin="round" stroke-linecap="round"/>
<polyline points="619.8,330.0 627.2,342.2 629.6,359.3 627.2,378.8 619.8,398.4 619.8,415.4" fill="none" stroke="#c4c1bb" stroke-width="3.6" stroke-linejoin="round" stroke-linecap="round"/>
<polyline points="639.4,337.3 649.1,349.5 654.0,366.6" fill="none" stroke="#c4c1bb" stroke-width="3" stroke-linejoin="round" stroke-linecap="round"/>
<polyline points="646.7,334.9 656.5,347.1 649.1,349.5" fill="none" stroke="#c4c1bb" stroke-width="3" stroke-linejoin="round" stroke-linecap="round"/>
<polyline points="561.2,352.0 575.9,356.9 580.8,366.6" fill="none" stroke="#c4c1bb" stroke-width="2.8" stroke-linejoin="round" stroke-linecap="round"/>
<polyline points="585.7,381.3 600.3,391.0 615.0,400.8 634.5,403.2" fill="none" stroke="#c4c1bb" stroke-width="2.8" stroke-linejoin="round" stroke-linecap="round"/>
<polyline points="527.1,449.6 536.8,457.0 544.2,466.7 545.4,476.5" fill="none" stroke="#c4c1bb" stroke-width="2.6" stroke-linejoin="round" stroke-linecap="round"/>
<polyline points="545.4,466.7 556.4,459.4 566.1,455.7" fill="none" stroke="#c4c1bb" stroke-width="2.4" stroke-linejoin="round" stroke-linecap="round"/>
<polyline points="414.8,500.9 434.3,498.5 453.8,493.6 473.4,488.7" fill="none" stroke="#c4c1bb" stroke-width="2.6" stroke-linejoin="round" stroke-linecap="round"/>
<polyline points="419.6,510.7 439.2,505.8 458.7,500.9 478.2,498.5" fill="none" stroke="#c4c1bb" stroke-width="2.6" stroke-linejoin="round" stroke-linecap="round"/>
<polyline points="417.2,520.4 436.7,515.5 453.8,510.7 470.9,505.8" fill="none" stroke="#c4c1bb" stroke-width="2.6" stroke-linejoin="round" stroke-linecap="round"/>
<polyline points="429.4,525.3 448.9,518.0 466.0,515.5" fill="none" stroke="#c4c1bb" stroke-width="2.6" stroke-linejoin="round" stroke-linecap="round"/>
<polyline points="412.3,515.5 422.1,510.7 419.6,505.8" fill="none" stroke="#c4c1bb" stroke-width="2.6" stroke-linejoin="round" stroke-linecap="round"/>
<polyline points="461.2,486.2 468.5,500.9 463.6,515.5" fill="none" stroke="#c4c1bb" stroke-width="2.6" stroke-linejoin="round" stroke-linecap="round"/>
<polyline points="441.6,496.0 446.5,510.7 441.6,522.9" fill="none" stroke="#c4c1bb" stroke-width="2.6" stroke-linejoin="round" stroke-linecap="round"/>
<polyline points="411.2,572.2 424.9,569.8 442.4,571.0 454.8,567.3" fill="none" stroke="#c4c1bb" stroke-width="2.8" stroke-linejoin="round" stroke-linecap="round"/>
<polyline points="411.2,604.6 417.5,582.2 429.9,572.2" fill="none" stroke="#c4c1bb" stroke-width="2.8" stroke-linejoin="round" stroke-linecap="round"/>
<polyline points="419.9,510.0 434.9,517.4 449.8,514.9 464.8,505.0" fill="none" stroke="#c4c1bb" stroke-width="2.8" stroke-linejoin="round" stroke-linecap="round"/>
<polyline points="429.9,524.9 444.9,529.9 454.8,522.4" fill="none" stroke="#c4c1bb" stroke-width="2.8" stroke-linejoin="round" stroke-linecap="round"/>
<polyline points="437.4,537.4 442.4,562.3 447.4,582.2 449.8,609.6" fill="none" stroke="#c4c1bb" stroke-width="2.8" stroke-linejoin="round" stroke-linecap="round"/>
<polyline points="415.0,502.5 427.4,507.5 434.9,500.0" fill="none" stroke="#c4c1bb" stroke-width="2.8" stroke-linejoin="round" stroke-linecap="round"/>
<polyline points="444.9,507.5 454.8,517.4 469.8,512.5" fill="none" stroke="#c4c1bb" stroke-width="2.8" stroke-linejoin="round" stroke-linecap="round"/>
<polyline points="411.2,714.3 427.4,706.8 442.4,704.3" fill="none" stroke="#c4c1bb" stroke-width="2.8" stroke-linejoin="round" stroke-linecap="round"/>
<polyline points="419.9,724.2 434.9,719.2 444.9,711.8" fill="none" stroke="#c4c1bb" stroke-width="2.8" stroke-linejoin="round" stroke-linecap="round"/>
<polyline points="479.7,719.2 494.7,709.3 514.6,704.3" fill="none" stroke="#c4c1bb" stroke-width="2.8" stroke-linejoin="round" stroke-linecap="round"/>
<polyline points="487.2,736.7 504.7,724.2 522.1,719.2" fill="none" stroke="#c4c1bb" stroke-width="2.8" stroke-linejoin="round" stroke-linecap="round"/>
<polyline points="429.9,654.5 419.9,649.5" fill="none" stroke="#c4c1bb" stroke-width="2.8" stroke-linejoin="round" stroke-linecap="round"/>
<polyline points="474.8,639.5 487.2,647.0 492.2,639.5" fill="none" stroke="#c4c1bb" stroke-width="2.8" stroke-linejoin="round" stroke-linecap="round"/>
<polyline points="411.1,717.5 427.7,710.6 448.6,703.6 464.3,705.3 478.2,707.1 483.5,700.1" fill="none" stroke="#c4c1bb" stroke-width="4.6" stroke-linejoin="round" stroke-linecap="round"/>
<polyline points="485.2,729.7 502.6,717.5 527.1,712.3 544.5,717.5" fill="none" stroke="#c4c1bb" stroke-width="3.4" stroke-linejoin="round" stroke-linecap="round"/>
<polyline points="513.1,735.0 530.5,731.5 544.5,736.7 558.4,735.0" fill="none" stroke="#c4c1bb" stroke-width="3.8" stroke-linejoin="round" stroke-linecap="round"/>
<polyline points="411.1,794.6 429.4,789.7 446.5,792.1" fill="none" stroke="#c4c1bb" stroke-width="2.5" stroke-linejoin="round" stroke-linecap="round"/>
<polyline points="411.1,862.9 434.3,853.2 453.8,845.8 468.5,828.7 466.0,811.7" fill="none" stroke="#c4c1bb" stroke-width="2.5" stroke-linejoin="round" stroke-linecap="round"/>
<polyline points="510.0,775.0 519.7,782.4 532.0,794.6 551.5,787.2 571.0,789.7 573.5,811.7 580.8,828.7 590.5,850.7 593.0,870.2" fill="none" stroke="#c4c1bb" stroke-width="2.5" stroke-linejoin="round" stroke-linecap="round"/>
<polyline points="561.2,853.2 575.9,858.0 583.2,875.1 585.7,894.7 593.0,914.0" fill="none" stroke="#c4c1bb" stroke-width="2.5" stroke-linejoin="round" stroke-linecap="round"/>
<polyline points="566.1,831.2 580.8,836.1 585.7,843.4" fill="none" stroke="#c4c1bb" stroke-width="2.5" stroke-linejoin="round" stroke-linecap="round"/>
<polyline points="634.5,841.0 649.1,841.0 649.1,855.6 658.9,862.9" fill="none" stroke="#c4c1bb" stroke-width="2.5" stroke-linejoin="round" stroke-linecap="round"/>
<polyline points="639.4,870.2 644.3,884.9" fill="none" stroke="#c4c1bb" stroke-width="2.5" stroke-linejoin="round" stroke-linecap="round"/>
<polyline points="507.5,728.6 519.7,738.4 541.7,740.9" fill="none" stroke="#c4c1bb" stroke-width="2.5" stroke-linejoin="round" stroke-linecap="round"/>
<polyline points="514.9,723.8 532.0,721.3 546.6,728.6" fill="none" stroke="#c4c1bb" stroke-width="2.5" stroke-linejoin="round" stroke-linecap="round"/>
<polyline points="441.6,738.4 458.7,753.1 466.0,767.7" fill="none" stroke="#c4c1bb" stroke-width="2.5" stroke-linejoin="round" stroke-linecap="round"/>
<polyline points="820.7,914.3 824.8,902.8 837.4,894.4 858.3,888.1 875.1,881.8" fill="none" stroke="#c4c1bb" stroke-width="3" stroke-linejoin="round" stroke-linecap="round"/>
<polyline points="837.4,894.4 850.0,900.7 862.5,909.1" fill="none" stroke="#c4c1bb" stroke-width="3" stroke-linejoin="round" stroke-linecap="round"/>
<polyline points="850.0,900.7 858.3,896.5 870.9,890.2" fill="none" stroke="#c4c1bb" stroke-width="3" stroke-linejoin="round" stroke-linecap="round"/>
<polyline points="829.0,909.1 841.6,902.8 847.9,907.0" fill="none" stroke="#c4c1bb" stroke-width="3" stroke-linejoin="round" stroke-linecap="round"/>
<polyline points="877.2,879.8 887.6,875.6 891.8,867.2" fill="none" stroke="#c4c1bb" stroke-width="3" stroke-linejoin="round" stroke-linecap="round"/>
<polyline points="907.0,879.8 919.6,875.6 932.1,879.8 944.7,888.1 948.8,900.7 961.4,904.9" fill="none" stroke="#c4c1bb" stroke-width="2.8" stroke-linejoin="round" stroke-linecap="round"/>
<polyline points="944.7,888.1 957.2,879.8 969.8,881.8 978.1,890.2" fill="none" stroke="#c4c1bb" stroke-width="2.8" stroke-linejoin="round" stroke-linecap="round"/>
<polyline points="961.4,904.9 969.8,898.6 982.3,900.7" fill="none" stroke="#c4c1bb" stroke-width="2.8" stroke-linejoin="round" stroke-linecap="round"/>
<polyline points="988.6,881.8 1005.3,879.8 1024.2,877.7 1036.7,871.4" fill="none" stroke="#c4c1bb" stroke-width="2.8" stroke-linejoin="round" stroke-linecap="round"/>
<polyline points="1011.6,911.1 1020.0,900.7 1032.5,896.5 1049.3,902.8 1057.7,911.1" fill="none" stroke="#c4c1bb" stroke-width="2.8" stroke-linejoin="round" stroke-linecap="round"/>
<polyline points="580.8,142.4 595.4,146.5 607.6,160.0 612.5,179.5 624.7,194.2 646.7,211.2 663.8,223.4 678.4,232.0" fill="none" stroke="#fff" stroke-width="3" stroke-linejoin="round" stroke-linecap="round"/>
<polyline points="649.1,213.7 639.4,235.7 629.6,255.2 624.7,269.8 610.1,284.5 602.8,296.7 593.0,308.9 583.2,316.2 580.8,338.0" fill="none" stroke="#fff" stroke-width="3" stroke-linejoin="round" stroke-linecap="round"/>
<polyline points="411.1,319.9 434.3,306.5 463.6,289.4 488.0,284.5 502.7,289.4 512.4,301.6 532.0,301.6 544.2,308.9 553.9,323.5 557.6,338.0" fill="none" stroke="#fff" stroke-width="3" stroke-linejoin="round" stroke-linecap="round"/>
<polyline points="602.8,296.7 607.6,313.8 619.8,330.9 624.7,338.0" fill="none" stroke="#fff" stroke-width="2.4" stroke-linejoin="round" stroke-linecap="round"/>
<polyline points="411.1,272.3 439.2,275.9 461.2,284.5 470.9,286.4" fill="none" stroke="#fff" stroke-width="1.6" stroke-linejoin="round" stroke-linecap="round"/>
<polyline points="649.1,216.1 663.8,235.7 673.6,243.0" fill="none" stroke="#fff" stroke-width="1.6" stroke-linejoin="round" stroke-linecap="round"/>
<polyline points="556.4,145.3 563.7,142.9 573.5,145.3 566.1,149.0 557.6,147.8" fill="none" stroke="#fff" stroke-width="2" stroke-linejoin="round" stroke-linecap="round"/>
<polyline points="813.9,142.2 826.5,163.1 834.8,188.2 826.5,200.8 818.1,207.1" fill="none" stroke="#fff" stroke-width="1.8" stroke-linejoin="round" stroke-linecap="round"/>
<polyline points="834.8,188.2 847.4,200.8 864.1,207.1 897.6,205.0" fill="none" stroke="#fff" stroke-width="1.8" stroke-linejoin="round" stroke-linecap="round"/>
<polyline points="749.1,217.5 763.7,217.5 774.2,211.2 776.3,202.9" fill="none" stroke="#fff" stroke-width="2.6" stroke-linejoin="round" stroke-linecap="round"/>
<polyline points="747.0,194.5 755.3,207.1 767.9,209.1" fill="none" stroke="#fff" stroke-width="1.8" stroke-linejoin="round" stroke-linecap="round"/>
<polyline points="767.9,188.2 780.4,194.5 797.2,188.2 813.9,181.9 830.7,179.8 847.4,184.0" fill="none" stroke="#fff" stroke-width="1.8" stroke-linejoin="round" stroke-linecap="round"/>
<polyline points="784.6,200.8 805.5,194.5 826.5,188.2" fill="none" stroke="#fff" stroke-width="1.8" stroke-linejoin="round" stroke-linecap="round"/>
<polyline points="826.5,163.1 839.0,156.8 855.8,152.6 864.1,146.4" fill="none" stroke="#fff" stroke-width="1.8" stroke-linejoin="round" stroke-linecap="round"/>
<polyline points="826.5,169.4 839.0,163.1 851.6,165.2 847.4,171.5 830.7,172.5" fill="none" stroke="#fff" stroke-width="1.8" stroke-linejoin="round" stroke-linecap="round"/>
<polyline points="847.4,219.6 860.0,221.7 868.3,225.9" fill="none" stroke="#fff" stroke-width="1.8" stroke-linejoin="round" stroke-linecap="round"/>
<polyline points="868.3,200.8 880.9,196.6 897.6,194.5" fill="none" stroke="#fff" stroke-width="1.8" stroke-linejoin="round" stroke-linecap="round"/>
<polyline points="897.6,181.9 910.2,181.9 920.0,180.9" fill="none" stroke="#fff" stroke-width="1.8" stroke-linejoin="round" stroke-linecap="round"/>
<polyline points="751.1,200.8 759.5,192.4 770.0,196.6 778.3,190.3" fill="none" stroke="#fff" stroke-width="1.5" stroke-linejoin="round" stroke-linecap="round"/>
<polyline points="755.3,213.3 767.9,211.2 774.2,205.0" fill="none" stroke="#fff" stroke-width="1.5" stroke-linejoin="round" stroke-linecap="round"/>
<polyline points="778.3,198.7 788.8,192.4 797.2,196.6 809.7,190.3 822.3,192.4" fill="none" stroke="#fff" stroke-width="1.5" stroke-linejoin="round" stroke-linecap="round"/>
<polyline points="788.8,205.0 801.4,200.8 813.9,202.9 826.5,196.6" fill="none" stroke="#fff" stroke-width="1.5" stroke-linejoin="round" stroke-linecap="round"/>
<polyline points="805.5,213.3 818.1,209.1 830.7,211.2 839.0,205.0" fill="none" stroke="#fff" stroke-width="1.5" stroke-linejoin="round" stroke-linecap="round"/>
<polyline points="813.9,221.7 826.5,217.5 839.0,221.7 851.6,217.5" fill="none" stroke="#fff" stroke-width="1.5" stroke-linejoin="round" stroke-linecap="round"/>
<polyline points="839.0,192.4 847.4,188.2 855.8,192.4" fill="none" stroke="#fff" stroke-width="1.5" stroke-linejoin="round" stroke-linecap="round"/>
<polyline points="839.0,200.8 853.7,198.7" fill="none" stroke="#fff" stroke-width="1.5" stroke-linejoin="round" stroke-linecap="round"/>
<polyline points="864.1,192.4 876.7,190.3 889.2,192.4" fill="none" stroke="#fff" stroke-width="1.5" stroke-linejoin="round" stroke-linecap="round"/>
<polyline points="868.3,209.1 880.9,207.1 893.4,209.1" fill="none" stroke="#fff" stroke-width="1.5" stroke-linejoin="round" stroke-linecap="round"/>
<polyline points="872.5,221.7 885.1,219.6 895.5,221.7" fill="none" stroke="#fff" stroke-width="1.5" stroke-linejoin="round" stroke-linecap="round"/>
<polyline points="818.1,179.8 826.5,177.8 839.0,179.8 847.4,175.7" fill="none" stroke="#fff" stroke-width="1.5" stroke-linejoin="round" stroke-linecap="round"/>
<polyline points="801.4,186.1 809.7,184.0 818.1,186.1" fill="none" stroke="#fff" stroke-width="1.5" stroke-linejoin="round" stroke-linecap="round"/>
<polyline points="1017.9,144.3 1032.5,150.6 1053.5,152.6 1061.8,150.6 1074.4,142.2" fill="none" stroke="#fff" stroke-width="1.8" stroke-linejoin="round" stroke-linecap="round"/>
<polyline points="1061.8,150.6 1057.7,165.2 1053.5,179.8 1053.5,200.8 1061.8,217.5 1066.0,229.0" fill="none" stroke="#fff" stroke-width="2.2" stroke-linejoin="round" stroke-linecap="round"/>
<polyline points="1053.5,179.8 1036.7,177.8 1020.0,169.4 1007.4,167.3 994.9,173.6 997.0,192.4 986.5,205.0 976.1,217.5 974.0,229.0" fill="none" stroke="#fff" stroke-width="1.8" stroke-linejoin="round" stroke-linecap="round"/>
<polyline points="1087.0,150.6 1107.9,156.8 1128.8,156.8 1147.0,154.7" fill="none" stroke="#fff" stroke-width="1.8" stroke-linejoin="round" stroke-linecap="round"/>
<polyline points="1087.0,150.6 1095.3,167.3 1116.2,190.3 1137.2,207.1 1147.0,211.2" fill="none" stroke="#fff" stroke-width="1.8" stroke-linejoin="round" stroke-linecap="round"/>
<polyline points="1061.8,200.8 1074.4,200.8 1091.1,196.6 1091.1,184.0 1084.9,181.9" fill="none" stroke="#fff" stroke-width="1.8" stroke-linejoin="round" stroke-linecap="round"/>
<polyline points="1053.5,223.8 1066.0,221.7 1082.8,223.8 1095.3,229.0" fill="none" stroke="#fff" stroke-width="1.8" stroke-linejoin="round" stroke-linecap="round"/>
<polyline points="907.0,179.8 919.6,177.8 934.2,175.7" fill="none" stroke="#fff" stroke-width="1.6" stroke-linejoin="round" stroke-linecap="round"/>
<polyline points="1078.6,144.3 1080.7,154.7 1072.3,158.9" fill="none" stroke="#fff" stroke-width="2" stroke-linejoin="round" stroke-linecap="round"/>
<polyline points="1053.5,142.2 1061.8,150.6" fill="none" stroke="#fff" stroke-width="2" stroke-linejoin="round" stroke-linecap="round"/>
<polyline points="556.4,330.0 558.8,349.5 563.7,361.7 575.9,373.9 585.7,381.3 607.6,393.5 617.4,403.2 619.8,415.4" fill="none" stroke="#fff" stroke-width="2.4" stroke-linejoin="round" stroke-linecap="round"/>
<polyline points="585.7,330.0 578.3,344.6 578.3,361.7 583.2,378.8" fill="none" stroke="#fff" stroke-width="2.4" stroke-linejoin="round" stroke-linecap="round"/>
<polyline points="619.8,330.0 627.2,342.2 629.6,359.3 627.2,378.8 619.8,398.4 619.8,415.4" fill="none" stroke="#fff" stroke-width="2.6" stroke-linejoin="round" stroke-linecap="round"/>
<polyline points="639.4,337.3 649.1,349.5 654.0,366.6" fill="none" stroke="#fff" stroke-width="2" stroke-linejoin="round" stroke-linecap="round"/>
<polyline points="646.7,334.9 656.5,347.1 649.1,349.5" fill="none" stroke="#fff" stroke-width="2" stroke-linejoin="round" stroke-linecap="round"/>
<polyline points="561.2,352.0 575.9,356.9 580.8,366.6" fill="none" stroke="#fff" stroke-width="1.8" stroke-linejoin="round" stroke-linecap="round"/>
<polyline points="585.7,381.3 600.3,391.0 615.0,400.8 634.5,403.2" fill="none" stroke="#fff" stroke-width="1.8" stroke-linejoin="round" stroke-linecap="round"/>
<polyline points="527.1,449.6 536.8,457.0 544.2,466.7 545.4,476.5" fill="none" stroke="#fff" stroke-width="1.6" stroke-linejoin="round" stroke-linecap="round"/>
<polyline points="545.4,466.7 556.4,459.4 566.1,455.7" fill="none" stroke="#fff" stroke-width="1.4" stroke-linejoin="round" stroke-linecap="round"/>
<polyline points="414.8,500.9 434.3,498.5 453.8,493.6 473.4,488.7" fill="none" stroke="#fff" stroke-width="1.6" stroke-linejoin="round" stroke-linecap="round"/>
<polyline points="419.6,510.7 439.2,505.8 458.7,500.9 478.2,498.5" fill="none" stroke="#fff" stroke-width="1.6" stroke-linejoin="round" stroke-linecap="round"/>
<polyline points="417.2,520.4 436.7,515.5 453.8,510.7 470.9,505.8" fill="none" stroke="#fff" stroke-width="1.6" stroke-linejoin="round" stroke-linecap="round"/>
<polyline points="429.4,525.3 448.9,518.0 466.0,515.5" fill="none" stroke="#fff" stroke-width="1.6" stroke-linejoin="round" stroke-linecap="round"/>
<polyline points="412.3,515.5 422.1,510.7 419.6,505.8" fill="none" stroke="#fff" stroke-width="1.6" stroke-linejoin="round" stroke-linecap="round"/>
<polyline points="461.2,486.2 468.5,500.9 463.6,515.5" fill="none" stroke="#fff" stroke-width="1.6" stroke-linejoin="round" stroke-linecap="round"/>
<polyline points="441.6,496.0 446.5,510.7 441.6,522.9" fill="none" stroke="#fff" stroke-width="1.6" stroke-linejoin="round" stroke-linecap="round"/>
<polyline points="411.2,572.2 424.9,569.8 442.4,571.0 454.8,567.3" fill="none" stroke="#fff" stroke-width="1.8" stroke-linejoin="round" stroke-linecap="round"/>
<polyline points="411.2,604.6 417.5,582.2 429.9,572.2" fill="none" stroke="#fff" stroke-width="1.8" stroke-linejoin="round" stroke-linecap="round"/>
<polyline points="419.9,510.0 434.9,517.4 449.8,514.9 464.8,505.0" fill="none" stroke="#fff" stroke-width="1.8" stroke-linejoin="round" stroke-linecap="round"/>
<polyline points="429.9,524.9 444.9,529.9 454.8,522.4" fill="none" stroke="#fff" stroke-width="1.8" stroke-linejoin="round" stroke-linecap="round"/>
<polyline points="437.4,537.4 442.4,562.3 447.4,582.2 449.8,609.6" fill="none" stroke="#fff" stroke-width="1.8" stroke-linejoin="round" stroke-linecap="round"/>
<polyline points="415.0,502.5 427.4,507.5 434.9,500.0" fill="none" stroke="#fff" stroke-width="1.8" stroke-linejoin="round" stroke-linecap="round"/>
<polyline points="444.9,507.5 454.8,517.4 469.8,512.5" fill="none" stroke="#fff" stroke-width="1.8" stroke-linejoin="round" stroke-linecap="round"/>
<polyline points="411.2,714.3 427.4,706.8 442.4,704.3" fill="none" stroke="#fff" stroke-width="1.8" stroke-linejoin="round" stroke-linecap="round"/>
<polyline points="419.9,724.2 434.9,719.2 444.9,711.8" fill="none" stroke="#fff" stroke-width="1.8" stroke-linejoin="round" stroke-linecap="round"/>
<polyline points="479.7,719.2 494.7,709.3 514.6,704.3" fill="none" stroke="#fff" stroke-width="1.8" stroke-linejoin="round" stroke-linecap="round"/>
<polyline points="487.2,736.7 504.7,724.2 522.1,719.2" fill="none" stroke="#fff" stroke-width="1.8" stroke-linejoin="round" stroke-linecap="round"/>
<polyline points="429.9,654.5 419.9,649.5" fill="none" stroke="#fff" stroke-width="1.8" stroke-linejoin="round" stroke-linecap="round"/>
<polyline points="474.8,639.5 487.2,647.0 492.2,639.5" fill="none" stroke="#fff" stroke-width="1.8" stroke-linejoin="round" stroke-linecap="round"/>
<polyline points="411.1,717.5 427.7,710.6 448.6,703.6 464.3,705.3 478.2,707.1 483.5,700.1" fill="none" stroke="#fff" stroke-width="3.6" stroke-linejoin="round" stroke-linecap="round"/>
<polyline points="485.2,729.7 502.6,717.5 527.1,712.3 544.5,717.5" fill="none" stroke="#fff" stroke-width="2.4" stroke-linejoin="round" stroke-linecap="round"/>
<polyline points="513.1,735.0 530.5,731.5 544.5,736.7 558.4,735.0" fill="none" stroke="#fff" stroke-width="2.8" stroke-linejoin="round" stroke-linecap="round"/>
<polyline points="411.1,794.6 429.4,789.7 446.5,792.1" fill="none" stroke="#fff" stroke-width="1.5" stroke-linejoin="round" stroke-linecap="round"/>
<polyline points="411.1,862.9 434.3,853.2 453.8,845.8 468.5,828.7 466.0,811.7" fill="none" stroke="#fff" stroke-width="1.5" stroke-linejoin="round" stroke-linecap="round"/>
<polyline points="510.0,775.0 519.7,782.4 532.0,794.6 551.5,787.2 571.0,789.7 573.5,811.7 580.8,828.7 590.5,850.7 593.0,870.2" fill="none" stroke="#fff" stroke-width="1.5" stroke-linejoin="round" stroke-linecap="round"/>
<polyline points="561.2,853.2 575.9,858.0 583.2,875.1 585.7,894.7 593.0,914.0" fill="none" stroke="#fff" stroke-width="1.5" stroke-linejoin="round" stroke-linecap="round"/>
<polyline points="566.1,831.2 580.8,836.1 585.7,843.4" fill="none" stroke="#fff" stroke-width="1.5" stroke-linejoin="round" stroke-linecap="round"/>
<polyline points="634.5,841.0 649.1,841.0 649.1,855.6 658.9,862.9" fill="none" stroke="#fff" stroke-width="1.5" stroke-linejoin="round" stroke-linecap="round"/>
<polyline points="639.4,870.2 644.3,884.9" fill="none" stroke="#fff" stroke-width="1.5" stroke-linejoin="round" stroke-linecap="round"/>
<polyline points="507.5,728.6 519.7,738.4 541.7,740.9" fill="none" stroke="#fff" stroke-width="1.5" stroke-linejoin="round" stroke-linecap="round"/>
<polyline points="514.9,723.8 532.0,721.3 546.6,728.6" fill="none" stroke="#fff" stroke-width="1.5" stroke-linejoin="round" stroke-linecap="round"/>
<polyline points="441.6,738.4 458.7,753.1 466.0,767.7" fill="none" stroke="#fff" stroke-width="1.5" stroke-linejoin="round" stroke-linecap="round"/>
<polyline points="820.7,914.3 824.8,902.8 837.4,894.4 858.3,888.1 875.1,881.8" fill="none" stroke="#fff" stroke-width="2" stroke-linejoin="round" stroke-linecap="round"/>
<polyline points="837.4,894.4 850.0,900.7 862.5,909.1" fill="none" stroke="#fff" stroke-width="2" stroke-linejoin="round" stroke-linecap="round"/>
<polyline points="850.0,900.7 858.3,896.5 870.9,890.2" fill="none" stroke="#fff" stroke-width="2" stroke-linejoin="round" stroke-linecap="round"/>
<polyline points="829.0,909.1 841.6,902.8 847.9,907.0" fill="none" stroke="#fff" stroke-width="2" stroke-linejoin="round" stroke-linecap="round"/>
<polyline points="877.2,879.8 887.6,875.6 891.8,867.2" fill="none" stroke="#fff" stroke-width="2" stroke-linejoin="round" stroke-linecap="round"/>
<polyline points="907.0,879.8 919.6,875.6 932.1,879.8 944.7,888.1 948.8,900.7 961.4,904.9" fill="none" stroke="#fff" stroke-width="1.8" stroke-linejoin="round" stroke-linecap="round"/>
<polyline points="944.7,888.1 957.2,879.8 969.8,881.8 978.1,890.2" fill="none" stroke="#fff" stroke-width="1.8" stroke-linejoin="round" stroke-linecap="round"/>
<polyline points="961.4,904.9 969.8,898.6 982.3,900.7" fill="none" stroke="#fff" stroke-width="1.8" stroke-linejoin="round" stroke-linecap="round"/>
<polyline points="988.6,881.8 1005.3,879.8 1024.2,877.7 1036.7,871.4" fill="none" stroke="#fff" stroke-width="1.8" stroke-linejoin="round" stroke-linecap="round"/>
<polyline points="1011.6,911.1 1020.0,900.7 1032.5,896.5 1049.3,902.8 1057.7,911.1" fill="none" stroke="#fff" stroke-width="1.8" stroke-linejoin="round" stroke-linecap="round"/>
<polyline points="737.5,142.2 751.1,149.5 758.5,156.8 760.6,173.6 763.7,190.3 772.1,200.8 788.8,209.1 809.7,218.6 826.5,226.9 834.8,229.0" fill="none" stroke="#c6c48c" stroke-width="5.8" stroke-linejoin="round" stroke-linecap="round"/>
<polyline points="906.0,142.2 901.8,150.6 898.7,169.4 897.6,200.8 899.7,229.0" fill="none" stroke="#c6c48c" stroke-width="5.8" stroke-linejoin="round" stroke-linecap="round"/>
<polyline points="600.3,914.0 595.4,894.7 594.2,877.6 597.9,869.0 610.1,866.6 624.7,869.0 639.4,862.9 658.9,862.9 673.6,869.0 685.0,867.8" fill="none" stroke="#c6c48c" stroke-width="4.8" stroke-linejoin="round" stroke-linecap="round"/>
<polyline points="737.5,142.2 751.1,149.5 758.5,156.8 760.6,173.6 763.7,190.3 772.1,200.8 788.8,209.1 809.7,218.6 826.5,226.9 834.8,229.0" fill="none" stroke="#f6f9b8" stroke-width="4.8" stroke-linejoin="round" stroke-linecap="round"/>
<polyline points="906.0,142.2 901.8,150.6 898.7,169.4 897.6,200.8 899.7,229.0" fill="none" stroke="#f6f9b8" stroke-width="4.8" stroke-linejoin="round" stroke-linecap="round"/>
<polyline points="600.3,914.0 595.4,894.7 594.2,877.6 597.9,869.0 610.1,866.6 624.7,869.0 639.4,862.9 658.9,862.9 673.6,869.0 685.0,867.8" fill="none" stroke="#f6f9b8" stroke-width="3.8" stroke-linejoin="round" stroke-linecap="round"/>
<polyline points="868.3,142.2 862.0,150.6 858.9,165.2 858.9,184.0 863.1,200.8 868.3,217.5 873.6,229.0" fill="none" stroke="#6e6e6e" stroke-width="1.8" stroke-linejoin="round"/>
<polyline points="868.3,142.2 862.0,150.6 858.9,165.2 858.9,184.0 863.1,200.8 868.3,217.5 873.6,229.0" fill="none" stroke="#f2f2f2" stroke-width="0.7" stroke-dasharray="3 3" stroke-linejoin="round"/>
<polyline points="1020.0,142.2 1011.6,148.5 990.7,156.8 976.1,165.2 967.7,177.8" fill="none" stroke="#6e6e6e" stroke-width="1.8" stroke-linejoin="round"/>
<polyline points="1020.0,142.2 1011.6,148.5 990.7,156.8 976.1,165.2 967.7,177.8" fill="none" stroke="#f2f2f2" stroke-width="0.7" stroke-dasharray="3 3" stroke-linejoin="round"/>
<polyline points="967.7,177.8 962.5,196.6 959.3,217.5" fill="none" stroke="#858585" stroke-width="6" stroke-linejoin="round"/>
<polyline points="967.7,177.8 962.5,196.6 959.3,217.5" fill="none" stroke="#b4b4b4" stroke-width="4.0" stroke-linejoin="round"/>
<polyline points="967.7,177.8 962.5,196.6 959.3,217.5" fill="none" stroke="#8c8c8c" stroke-width="2.8" stroke-linejoin="round"/>
<polyline points="959.3,217.5 957.2,229.0" fill="none" stroke="#6e6e6e" stroke-width="1.8" stroke-linejoin="round"/>
<polyline points="959.3,217.5 957.2,229.0" fill="none" stroke="#f2f2f2" stroke-width="0.7" stroke-dasharray="3 3" stroke-linejoin="round"/>
<polyline points="558.8,388.6 571.0,415.4 585.7,447.2" fill="none" stroke="#6e6e6e" stroke-width="1.2" stroke-linejoin="round"/>
<polyline points="558.8,388.6 571.0,415.4 585.7,447.2" fill="none" stroke="#f2f2f2" stroke-width="0.5" stroke-dasharray="3 3" stroke-linejoin="round"/>
<polyline points="411.1,737.6 427.7,736.7 457.3,730.6 474.7,725.4 487.0,715.8 502.6,701.8 513.1,696.6 527.1,693.1" fill="none" stroke="#858585" stroke-width="3.6" stroke-linejoin="round"/>
<polyline points="411.1,737.6 427.7,736.7 457.3,730.6 474.7,725.4 487.0,715.8 502.6,701.8 513.1,696.6 527.1,693.1" fill="none" stroke="#b4b4b4" stroke-width="1.6" stroke-linejoin="round"/>
<polyline points="411.1,737.6 427.7,736.7 457.3,730.6 474.7,725.4 487.0,715.8 502.6,701.8 513.1,696.6 527.1,693.1" fill="none" stroke="#8c8c8c" stroke-width="0.5" stroke-linejoin="round"/>
<polyline points="411.1,785.5 439.9,778.6 464.3,774.2 471.3,769.9 481.7,757.6 488.7,745.4 499.2,729.7 509.6,715.8 520.1,708.8 541.0,706.2" fill="none" stroke="#858585" stroke-width="3.6" stroke-linejoin="round"/>
<polyline points="411.1,785.5 439.9,778.6 464.3,774.2 471.3,769.9 481.7,757.6 488.7,745.4 499.2,729.7 509.6,715.8 520.1,708.8 541.0,706.2" fill="none" stroke="#b4b4b4" stroke-width="1.6" stroke-linejoin="round"/>
<polyline points="411.1,785.5 439.9,778.6 464.3,774.2 471.3,769.9 481.7,757.6 488.7,745.4 499.2,729.7 509.6,715.8 520.1,708.8 541.0,706.2" fill="none" stroke="#8c8c8c" stroke-width="0.5" stroke-linejoin="round"/>
<rect x="860.4" y="202.9" width="5.6" height="5.6" fill="#5f6db8"/>
<polyline points="1147.0,220.7 1137.2,230.1" fill="none" stroke="#f9c88a" stroke-width="4" stroke-linejoin="round" stroke-linecap="round" />
<rect x="605.7" y="419" width="40" height="15" rx="2" fill="#f4f2ed" stroke="#b9b6b0" stroke-width="1"/>
<polyline points="412.5,647.0 422.4,633.3 437.4,623.3 457.3,615.8 481.0,609.6" fill="none" stroke="#e892a2" stroke-width="5.5" stroke-linejoin="round" stroke-linecap="round" />
<polyline points="411.2,635.8 424.9,629.5" fill="none" stroke="#e892a2" stroke-width="3" stroke-linejoin="round" stroke-linecap="round" />
<polyline points="415.0,659.4 415.0,691.8" fill="none" stroke="#c6c48c" stroke-width="4.6" stroke-linejoin="round" stroke-linecap="round" />
<polyline points="415.0,659.4 415.0,691.8" fill="none" stroke="#f6f9b8" stroke-width="3.6" stroke-linejoin="round" stroke-linecap="round" />
<polyline points="411.2,694.8 454.8,693.1 492.2,691.8 509.6,689.3 517.1,681.9 520.1,675.6" fill="none" stroke="#c9a671" stroke-width="5.4" stroke-linejoin="round" stroke-linecap="round" />
<polyline points="411.2,694.8 454.8,693.1 492.2,691.8 509.6,689.3 517.1,681.9 520.1,675.6" fill="none" stroke="#f9d6a0" stroke-width="4.4" stroke-linejoin="round" stroke-linecap="round" />
<rect x="507" y="694.6" width="6" height="6" fill="#5f6db8"/>
<polyline points="654.0,803.1 661.3,811.7 665.0,828.7" fill="none" stroke="#f9b29c" stroke-width="5" stroke-linejoin="round" stroke-linecap="round" />
<polyline points="448.9,782.4 453.8,811.7 456.3,848.3 457.5,884.9 453.8,914.0" fill="none" stroke="#b6d8e6" stroke-width="1.3" stroke-linejoin="round" stroke-linecap="round" stroke-dasharray="3 2"/>
<polyline points="462.4,782.4 464.8,811.7 462.4,848.3 459.9,914.0" fill="none" stroke="#b6d8e6" stroke-width="1.3" stroke-linejoin="round" stroke-linecap="round" stroke-dasharray="3 2"/>
<rect x="650.5" y="830.6" width="40" height="16.4" rx="2" fill="#f9d9cf" stroke="#d3978a" stroke-width="1"/>
<polyline points="670.0,868.2 690.9,866.2 726.5,866.2" fill="none" stroke="#f6f9b8" stroke-width="3.4" stroke-linejoin="round" stroke-linecap="round" />
<polyline points="739.1,875.6 753.7,873.5 768.3,867.2" fill="none" stroke="#f6f9b8" stroke-width="3" stroke-linejoin="round" stroke-linecap="round" />
<polyline points="726.5,866.2 739.1,875.6 753.7,878.7 770.4,875.6 787.2,871.4 799.7,870.3 810.2,875.6 820.7,883.9 833.2,888.1 847.9,887.1 862.5,881.8 875.1,878.7" fill="none" stroke="#f9a994" stroke-width="5.2" stroke-linejoin="round" stroke-linecap="round" />
<polyline points="883.4,866.2 889.7,881.8 900.2,891.3" fill="none" stroke="#555" stroke-width="1.4" stroke-linejoin="round" stroke-linecap="round" />
<rect x="893" y="893.4" width="27.6" height="16.6" rx="2.5" fill="#f3f1c9" stroke="#bdb98a" stroke-width="1"/><rect x="908.5" y="910" width="2" height="4" fill="#8a8650"/>
<polyline points="1137,405 1147,403" fill="none" stroke="#f6f9b8" stroke-width="2.5" stroke-linejoin="round" stroke-linecap="round" />
</g></svg>
<div class="a" style="left:410px;top:141px;width:737px;height:1px;background:#828790;"></div>
<div class="a" style="left:410px;top:141px;width:1px;height:774px;background:#828790;"></div>
<div class="a" style="left:410px;top:914px;width:737px;height:1px;background:#828790;"></div>
<div class="a" style="left:411px;top:142px;width:736px;height:772px;overflow:hidden"><div class="a" style="left:-411px;top:-142px;width:1147px;height:963px">
<span class="t" style="left:794px;top:202.95px;font-size:11px;color:#444;font-family:'DejaVu Sans', sans-serif;text-shadow:-1px 0 #f6f4ee,1px 0 #f6f4ee,0 -1px #f6f4ee,0 1px #f6f4ee,-1px -1px #f6f4ee,1px 1px #f6f4ee,1px -1px #f6f4ee,-1px 1px #f6f4ee;transform:scaleX(0.9552)">Wittenbach</span>
<span class="t" style="left:1042px;top:156.95px;font-size:11px;color:#444;font-family:'DejaVu Sans', sans-serif;text-shadow:-1px 0 #f6f4ee,1px 0 #f6f4ee,0 -1px #f6f4ee,0 1px #f6f4ee,-1px -1px #f6f4ee,1px 1px #f6f4ee,1px -1px #f6f4ee,-1px 1px #f6f4ee;transform:scaleX(0.9760)">Mörschwil</span>
<span class="t" style="left:1097.8px;top:209.15px;font-size:11px;color:#444;font-family:'DejaVu Sans', sans-serif;text-shadow:-1px 0 #f6f4ee,1px 0 #f6f4ee,0 -1px #f6f4ee,0 1px #f6f4ee,-1px -1px #f6f4ee,1px 1px #f6f4ee,1px -1px #f6f4ee,-1px 1px #f6f4ee;transform:scaleX(0.9805)">Fahrn-Riet</span>
<span class="t" style="left:1117.3px;top:164.57px;font-size:9.6px;color:#be3a45;font-family:'DejaVu Sans', sans-serif;font-style:italic;text-shadow:-1px 0 #f6f4ee,1px 0 #f6f4ee,0 -1px #f6f4ee,0 1px #f6f4ee,-1px -1px #f6f4ee,1px 1px #f6f4ee,1px -1px #f6f4ee,-1px 1px #f6f4ee;transform:scaleX(0.9409)">Verzweigung</span>
<span class="t" style="left:549.5px;top:365.45px;font-size:11px;color:#555;font-family:'DejaVu Sans', sans-serif;text-shadow:-1px 0 #f6f4ee,1px 0 #f6f4ee,0 -1px #f6f4ee,0 1px #f6f4ee,-1px -1px #f6f4ee,1px 1px #f6f4ee,1px -1px #f6f4ee,-1px 1px #f6f4ee;transform:scaleX(0.9732)">Engelburg</span>
<span class="t" style="left:583.2px;top:388.07px;font-size:9.6px;color:#777;font-family:'DejaVu Sans', sans-serif;font-style:italic;text-shadow:-1px 0 #f6f4ee,1px 0 #f6f4ee,0 -1px #f6f4ee,0 1px #f6f4ee,-1px -1px #f6f4ee,1px 1px #f6f4ee,1px -1px #f6f4ee,-1px 1px #f6f4ee;transform:scaleX(0.9344)">Engelburg</span>
<span class="t" style="left:612px;top:420.97px;font-size:9.6px;color:#555;font-family:'DejaVu Sans', sans-serif;transform:scaleX(0.9172)">SG 525</span>
<span class="t" style="left:656.5px;top:833.97px;font-size:9.6px;color:#8a4a40;font-family:'DejaVu Sans', sans-serif;transform:scaleX(0.9826)">AR 9</span>
<span class="t" style="left:897.4px;top:896.17px;font-size:9.6px;color:#6a6840;font-family:'DejaVu Sans', sans-serif;font-weight:bold;transform:scaleX(0.8986)">447</span>
<span class="t" style="left:386px;top:629.27px;font-size:9.6px;color:#b0343f;font-family:'DejaVu Sans', sans-serif;font-style:italic;text-shadow:-1px 0 #f6f4ee,1px 0 #f6f4ee,0 -1px #f6f4ee,0 1px #f6f4ee,-1px -1px #f6f4ee,1px 1px #f6f4ee,1px -1px #f6f4ee,-1px 1px #f6f4ee;transform:scaleX(0.9003)">St. Gallen Winkeln</span>
<span class="t" style="left:411.5px;top:641.67px;font-size:9.6px;color:#b0343f;font-family:'DejaVu Sans', sans-serif;font-style:italic;text-shadow:-1px 0 #f6f4ee,1px 0 #f6f4ee,0 -1px #f6f4ee,0 1px #f6f4ee,-1px -1px #f6f4ee,1px 1px #f6f4ee,1px -1px #f6f4ee,-1px 1px #f6f4ee;transform:scaleX(0.9003)">80</span>
<span class="t" style="left:386px;top:665.37px;font-size:9.6px;color:#b0343f;font-family:'DejaVu Sans', sans-serif;font-style:italic;text-shadow:-1px 0 #f6f4ee,1px 0 #f6f4ee,0 -1px #f6f4ee,0 1px #f6f4ee,-1px -1px #f6f4ee,1px 1px #f6f4ee,1px -1px #f6f4ee,-1px 1px #f6f4ee;transform:scaleX(0.8585)">Winkeln</span>
<span class="t" style="left:443px;top:553.55px;font-size:11px;color:#555;font-family:'DejaVu Sans', sans-serif;text-shadow:-1px 0 #f6f4ee,1px 0 #f6f4ee,0 -1px #f6f4ee,0 1px #f6f4ee,-1px -1px #f6f4ee,1px 1px #f6f4ee,1px -1px #f6f4ee,-1px 1px #f6f4ee;transform:scaleX(0.9295)">A</span>
<span class="t" style="left:0px;top:-11.03px;font-size:10px;color:#5a7fc0;font-family:'DejaVu Sans', sans-serif;font-style:italic;text-shadow:-1px 0 #f6f4ee,1px 0 #f6f4ee,0 -1px #f6f4ee,0 1px #f6f4ee,-1px -1px #f6f4ee,1px 1px #f6f4ee,1px -1px #f6f4ee,-1px 1px #f6f4ee;left:596px;top:813px;transform-origin:0 50%;rotate:64deg;transform:scaleX(0.8812)">Sitter</span>
<span class="t" style="left:672px;top:860.27px;font-size:9.5px;color:#555;font-family:'DejaVu Sans', sans-serif;text-shadow:-1px 0 #f6f4ee,1px 0 #f6f4ee,0 -1px #f6f4ee,0 1px #f6f4ee,-1px -1px #f6f4ee,1px 1px #f6f4ee,1px -1px #f6f4ee,-1px 1px #f6f4ee;transform:scaleX(0.9930)">Steinstrasse</span>
</div></div>
<svg style="left:0;top:0" width="1147" height="963" viewBox="0 0 1147 963">
<defs>
<clipPath id="orthoclip"><polygon points="441.6,539 690,391.3 690,782 613.7,825 590,795 566,753 547.8,720 519.7,688.5 485.6,622.5 484,609 478.2,603"/></clipPath>
<filter id="nzo" x="0" y="0" width="100%" height="100%"><feTurbulence type="fractalNoise" baseFrequency="0.22" numOctaves="3" seed="11"/><feColorMatrix type="matrix" values="0 0 0 0 0.05  0 0 0 0 0.07  0 0 0 0 0.03  2.4 0 0 0 -0.75"/></filter>
<filter id="nzt" x="0" y="0" width="100%" height="100%"><feTurbulence type="fractalNoise" baseFrequency="0.3" numOctaves="2" seed="5"/><feColorMatrix type="matrix" values="0 0 0 0 0.04  0 0 0 0 0.06  0 0 0 0 0.03  2.2 0 0 0 -0.7"/></filter>
<filter id="nzw" x="0" y="0" width="100%" height="100%"><feTurbulence type="fractalNoise" baseFrequency="0.33" numOctaves="2" seed="23"/><feColorMatrix type="matrix" values="0 0 0 0 0.72  0 0 0 0 0.72  0 0 0 0 0.66  0 3.4 0 0 -1.75"/></filter>
<clipPath id="urbclip"><polygon points="441,539 560,468 600,520 500,580 470,590"/><polygon points="500,650 690,545 690,690 570,750 530,700"/><polygon points="560,560 690,490 690,545 600,600"/></clipPath>
<filter id="blur1"><feGaussianBlur stdDeviation="1.2"/></filter>
</defs>
<g clip-path="url(#orthoclip)">
<rect x="430" y="380" width="270" height="460" fill="#40463a"/>
<g filter="url(#blur1)">
<polygon points="441,539 560,468 600,520 500,580 470,590" fill="#5b5f50"/>
<polygon points="560,468 690,391 690,430 600,480" fill="#55583f"/>
<polygon points="480,600 690,480 690,520 500,635" fill="#2f3a2a"/>
<polygon points="500,650 690,545 690,600 560,680 520,690" fill="#6a6c60"/>
<polygon points="530,700 690,610 690,680 570,750" fill="#75766c"/>
<polygon points="570,755 690,690 690,740 600,800" fill="#3a452f"/>
<polygon points="600,800 690,745 690,790 614,826" fill="#4f5a3c"/>
<polygon points="486,622 520,600 560,690 548,720 520,688" fill="#39432f"/>
<polygon points="550,720 590,700 640,800 614,826" fill="#2c3626"/>
</g>
<rect x="430" y="380" width="270" height="460" filter="url(#nzo)" opacity="0.8"/>
<g clip-path="url(#urbclip)"><rect x="430" y="380" width="270" height="460" filter="url(#nzw)" opacity="0.55"/></g>

<line x1="474.9" y1="548.2" x2="700" y2="418.1" stroke="#ee14ee" stroke-width="11.2" stroke-linecap="round"/>
<line x1="479.8" y1="567.7" x2="700" y2="440.4" stroke="#ee14ee" stroke-width="11.2" stroke-linecap="round"/>
<line x1="493.2" y1="582.2" x2="700" y2="462.6" stroke="#ee14ee" stroke-width="11.2" stroke-linecap="round"/>
<line x1="503.0" y1="598.8" x2="700" y2="484.9" stroke="#ee14ee" stroke-width="11.2" stroke-linecap="round"/>
<line x1="514.0" y1="614.6" x2="700" y2="507.1" stroke="#ee14ee" stroke-width="11.2" stroke-linecap="round"/>
<line x1="517.6" y1="634.8" x2="700" y2="529.4" stroke="#ee14ee" stroke-width="11.2" stroke-linecap="round"/>
<line x1="533.5" y1="647.9" x2="700" y2="551.6" stroke="#ee14ee" stroke-width="11.2" stroke-linecap="round"/>
<line x1="539.6" y1="666.6" x2="700" y2="573.9" stroke="#ee14ee" stroke-width="11.2" stroke-linecap="round"/>
<line x1="553.0" y1="681.1" x2="700" y2="596.1" stroke="#ee14ee" stroke-width="11.2" stroke-linecap="round"/>
<line x1="561.6" y1="698.4" x2="700" y2="618.4" stroke="#ee14ee" stroke-width="11.2" stroke-linecap="round"/>
<line x1="572.6" y1="714.3" x2="700" y2="640.6" stroke="#ee14ee" stroke-width="11.2" stroke-linecap="round"/>
<line x1="581.6" y1="731.3" x2="700" y2="662.9" stroke="#ee14ee" stroke-width="11.2" stroke-linecap="round"/>
<line x1="590.7" y1="748.3" x2="700" y2="685.1" stroke="#ee14ee" stroke-width="11.2" stroke-linecap="round"/>
<line x1="597.6" y1="766.6" x2="700" y2="707.4" stroke="#ee14ee" stroke-width="11.2" stroke-linecap="round"/>
<line x1="609.0" y1="782.2" x2="700" y2="729.6" stroke="#ee14ee" stroke-width="11.2" stroke-linecap="round"/>
<line x1="618.5" y1="799.0" x2="700" y2="751.9" stroke="#ee14ee" stroke-width="11.2" stroke-linecap="round"/>
<circle cx="596.6" cy="610.4" r="4.6" fill="#00f0f0"/>
</g></svg>
<div class="a" style="left:676.4px;top:229px;width:460.6px;height:637px;background:#f0f0f0;box-shadow:0 0 6px 1px rgba(0,0,0,0.45)"></div>
<div class="a" style="left:676.4px;top:229.4px;width:460.6px;height:30.2px;background:#2c7be3;"></div>
<span class="t" style="left:684.3px;top:236.43px;font-size:13px;color:#fff;transform:scaleX(0.8739)">Quality Control Viewer - Strip:Ct10_1500_131342 - Take:011 11 131425</span>
<div class="a" style="left:1117px;top:237.5px;width:19px;height:18px;background:#c9454d;"></div>
<svg style="left:1121px;top:242px" width="10" height="10"><path d="M 2.2 2.4 L 7.8 8 M 7.8 2.4 L 2.2 8" stroke="#fff" stroke-width="1.6" fill="none"/></svg>
<div class="a" style="left:683px;top:271px;width:127.6px;height:20px;background:#e1e1e1;border:1px solid #adadad;box-sizing:border-box;"></div>
<span class="t" style="left:687.2px;top:273.63px;font-size:13px;color:#000;transform:scaleX(0.7619)">Aerial_RGB</span>
<svg style="left:797px;top:278.6px" width="9" height="6"><path d="M 0.5 0.4 H 8.1 L 4.3 4.7 Z" fill="#000"/></svg>
<svg style="left:815px;top:269px" width="23" height="23" viewBox="0 0 23 23">
<defs><linearGradient id="gr1" x1="0" y1="0" x2="1" y2="1"><stop offset="0" stop-color="#d2d2d2"/><stop offset="1" stop-color="#8a8a8a"/></linearGradient></defs>
<path d="M 1.4 11 C 0.4 4.4 7.6 -0.4 14 2.2 L 15.6 0.2 L 21.6 10.2 L 10 9.6 L 11.8 7 C 8.8 6 6.6 7.8 7 11.6 Z" fill="url(#gr1)" stroke="#a0a0a0" stroke-width="0.5"/>
<path d="M 21.6 12 C 22.6 18.6 15.4 23.4 9 20.8 L 7.4 22.8 L 1.4 12.8 L 13 13.4 L 11.2 16 C 14.2 17 16.4 15.2 16 11.4 Z" fill="url(#gr1)" stroke="#a0a0a0" stroke-width="0.5"/></svg>
<span class="t" style="left:851px;top:273.63px;font-size:13px;color:#000;transform:scaleX(0.7552)">Zoom</span>
<div class="a" style="left:883.4px;top:271px;width:53.3px;height:19.8px;background:#e1e1e1;border:1px solid #adadad;box-sizing:border-box;"></div>
<span class="t" style="left:887.6px;top:273.63px;font-size:13px;color:#000;transform:scaleX(0.8361)">1 : 64</span>
<svg style="left:923px;top:278.6px" width="9" height="6"><path d="M 0.5 0.4 H 8.1 L 4.3 4.7 Z" fill="#000"/></svg>
<div class="a" style="left:677px;top:314px;width:21px;height:20px;background:#e1e1e1;border:1px solid #adadad;box-sizing:border-box;"></div>
<svg style="left:679px;top:316px" width="16" height="16" viewBox="0 0 16 16"><rect x="0.5" y="0.5" width="15" height="15" rx="1" fill="#f8f8f0" stroke="#4c5a4c" stroke-width="1"/>
<rect x="2" y="2" width="6.4" height="7" fill="#efe680"/><rect x="8.4" y="2" width="5.6" height="6" fill="#8eb2ea"/><path d="M 2 9 H 8.4 V 8 H 14 V 14 H 2 Z" fill="#a6d07c"/>
<path d="M 4.4 2 V 14 M 6.8 2 V 14 M 9.2 2 V 14 M 11.6 2 V 14 M 2 4.4 H 14 M 2 6.8 H 14 M 2 9.2 H 14 M 2 11.6 H 14" stroke="#fff" stroke-opacity="0.45" stroke-width="0.5"/>
<path d="M 3.6 2.4 L 10.6 14 M 13.6 9 L 7.4 13.6" stroke="#f0483a" stroke-width="1.2" fill="none"/></svg>
<div class="a" style="left:706px;top:314px;width:21px;height:20px;background:#e1e1e1;border:1px solid #adadad;box-sizing:border-box;"></div>
<div class="a" style="left:708px;top:315.8px;width:16.4px;height:16.4px;border-radius:50%;background:radial-gradient(circle closest-side,#fff 0%,rgba(255,255,255,0.6) 35%,rgba(255,255,255,0) 75%),conic-gradient(from 0deg,#30e030,#ffff20 45deg,#ff2020 90deg,#ff20ff 150deg,#3030ff 215deg,#20e0ff 280deg,#30e030 360deg)"></div>
<div class="a" style="left:733.8px;top:308.2px;width:403.2px;height:31.4px;background:#fff;border:1px solid #747b88;box-sizing:border-box;border-right:none;"></div>
<div class="a" style="left:1031.8px;top:310px;width:89px;height:27.6px;background:#d9d9d9;"></div>
<div class="a" style="left:739px;top:318.4px;width:13px;height:13px;box-sizing:border-box;border:1px solid #333;background:#fff"></div><svg style="left:739px;top:318.4px" width="13" height="13"><path d="M 1.9 6.9 L 4.8 9.7 L 11 3" stroke="#222" stroke-width="1.25" fill="none"/></svg>
<span class="t" style="left:758.3px;top:315.83px;font-size:13px;color:#000;transform:scaleX(0.9170)">Nadir</span>
<div class="a" style="left:793px;top:318.4px;width:13px;height:13px;box-sizing:border-box;border:1px solid #333;background:#fff"></div><svg style="left:793px;top:318.4px" width="13" height="13"><path d="M 1.9 6.9 L 4.8 9.7 L 11 3" stroke="#222" stroke-width="1.25" fill="none"/></svg>
<span class="t" style="left:812.3px;top:315.83px;font-size:13px;color:#000;transform:scaleX(0.8853)">Left</span>
<div class="a" style="left:838.4px;top:318.4px;width:13px;height:13px;box-sizing:border-box;border:1px solid #333;background:#fff"></div><svg style="left:838.4px;top:318.4px" width="13" height="13"><path d="M 1.9 6.9 L 4.8 9.7 L 11 3" stroke="#222" stroke-width="1.25" fill="none"/></svg>
<span class="t" style="left:857.3px;top:315.83px;font-size:13px;color:#000;transform:scaleX(0.9091)">Right</span>
<div class="a" style="left:891.4px;top:318.4px;width:13px;height:13px;box-sizing:border-box;border:1px solid #333;background:#fff"></div><svg style="left:891.4px;top:318.4px" width="13" height="13"><path d="M 1.9 6.9 L 4.8 9.7 L 11 3" stroke="#222" stroke-width="1.25" fill="none"/></svg>
<span class="t" style="left:910.3px;top:315.83px;font-size:13px;color:#000;transform:scaleX(0.8807)">Forward</span>
<div class="a" style="left:959.2px;top:318.4px;width:13px;height:13px;box-sizing:border-box;border:1px solid #333;background:#fff"></div><svg style="left:959.2px;top:318.4px" width="13" height="13"><path d="M 1.9 6.9 L 4.8 9.7 L 11 3" stroke="#222" stroke-width="1.25" fill="none"/></svg>
<span class="t" style="left:978.6px;top:315.83px;font-size:13px;color:#000;transform:scaleX(0.8760)">Backward</span>
<div class="a" style="left:1035.2px;top:318.4px;width:13px;height:13px;box-sizing:border-box;border:1px solid #333;background:#fff"></div>
<span class="t" style="left:1054.4px;top:315.83px;font-size:13px;color:#000;transform:scaleX(0.9093)">Background</span>
<svg style="left:677px;top:347px" width="459.5" height="492" viewBox="677 347 459.5 492"><rect x="677" y="347" width="460" height="492" fill="#000"/>
<clipPath id="tc1"><polygon points="758.2,431.8 838.8,384.4 873.7,465.3 811.9,502.3"/></clipPath><g clip-path="url(#tc1)"><rect x="677" y="347" width="460" height="492" fill="#4b5642"/><g filter="url(#blur1)"><polygon points="758.2,431.8 778.4,419.9 789.9,433.3 788.0,450.6 786.0,469.7" fill="#2b3630"/><polygon points="779.3,418.9 795.6,409.3 803.3,427.5 791.8,433.3" fill="#5c644f"/><polygon points="795.6,409.3 816.7,396.9 820.6,414.1 803.3,427.5" fill="#425037"/><polygon points="816.7,396.9 838.8,384.4 847.4,408.4 830.1,418.0 820.6,414.1" fill="#4c5349"/><polygon points="816.7,405.5 828.2,404.5 829.2,414.1 818.6,416.0" fill="#83909a"/><polygon points="788.0,450.6 803.3,444.8 807.1,460.1 789.9,469.7" fill="#656453"/><polygon points="803.3,444.8 822.5,435.2 835.9,446.7 807.1,460.1" fill="#676d5c"/><polygon points="828.2,431.4 855.1,421.8 860.8,437.1 835.9,446.7" fill="#616450"/><polygon points="789.9,469.7 801.4,465.9 812.9,481.2 801.4,488.9" fill="#656451"/><polygon points="801.4,465.9 862.8,439.1 873.7,465.3 826.3,492.8 811.9,502.3 801.4,488.9 812.9,481.2" fill="#38462b"/><polygon points="824.4,473.6 851.2,469.7 852.2,477.4 825.4,480.3" fill="#706c64"/><polygon points="809.1,429.5 816.7,428.5 817.7,436.2 810.0,437.1" fill="#895f52"/></g><rect x="677" y="347" width="460" height="492" filter="url(#nzt)" opacity="0.4"/></g>
<clipPath id="tc2"><polygon points="986.5,495.9 1055,442.1 1102.6,522.1 1022.3,556.8"/></clipPath><g clip-path="url(#tc2)"><rect x="677" y="347" width="460" height="492" fill="#84877d"/><g filter="url(#blur1)"><polygon points="986.5,495.9 1042.6,451.9 1053.5,442.1 1062.8,457.4 1047.3,460.5 1025.4,471.4 1019.2,487.0 1022.3,501.0 1011.4,516.6 1000.5,519.7" fill="#55634d"/><polygon points="1025.4,471.4 1044.1,453.5 1053.5,459.0 1047.3,471.4 1033.2,482.3" fill="#9a8a7a"/><polygon points="1017.7,482.3 1023.9,480.8 1024.7,488.6 1018.4,489.3" fill="#d0cbbf"/><polygon points="1022.3,507.3 1047.3,504.1 1048.8,526.0 1025.4,529.1" fill="#979a96"/><polygon points="1069.1,508.8 1089.3,504.9 1090.1,511.9 1069.8,515.0" fill="#c4c2b4"/><polygon points="1013.0,535.3 1097.1,516.6 1102.6,522.1 1069.1,536.9 1016.1,543.1" fill="#8b8d88"/><polygon points="1016.1,543.1 1041.0,538.4 1053.5,544.6 1022.3,556.8" fill="#5f6a54"/><polygon points="1047.3,460.5 1069.1,466.7 1078.4,485.4 1059.7,494.8 1044.1,479.2" fill="#7e8279"/><polygon points="1048.8,519.7 1056.6,518.9 1056.9,529.1 1049.1,529.8" fill="#cbcbc7"/></g><rect x="677" y="347" width="460" height="492" filter="url(#nzt)" opacity="0.4"/></g>
<clipPath id="tc3"><polygon points="860.9,568.6 909.5,540 948,606 899.4,634.7"/></clipPath><g clip-path="url(#tc3)"><rect x="677" y="347" width="460" height="492" fill="#686b63"/><g filter="url(#blur1)"><polygon points="860.9,568.6 909.5,540.0 914.2,549.7 910.2,583.4 903.4,592.9 880.5,601.0 873.7,590.2" fill="#2a3525"/><polygon points="860.9,568.6 880.5,557.8 884.5,564.5 867.0,576.7" fill="#444f37"/><polygon points="889.9,606.4 904.8,603.7 907.5,617.2 895.3,623.9" fill="#495739"/><polygon points="881.2,601.0 886.6,599.0 887.2,602.3 882.5,604.8" fill="#57a5bf"/><polygon points="907.5,568.6 912.9,567.2 913.6,583.4 908.2,584.8" fill="#888882"/></g><rect x="677" y="347" width="460" height="492" filter="url(#nzt)" opacity="0.4"/></g>
<clipPath id="tc4"><polygon points="694.8,655.3 778.1,617.9 815.5,681.8 744.7,738.7"/></clipPath><g clip-path="url(#tc4)"><rect x="677" y="347" width="460" height="492" fill="#3c4732"/><g filter="url(#blur1)"><polygon points="694.8,655.3 726.7,642.1 729.9,651.4 704.9,667.0" fill="#384235"/><polygon points="711.2,665.4 742.3,662.3 743.9,677.9 715.8,681.0" fill="#62625e"/><polygon points="728.3,681.0 748.5,681.0 750.1,691.9 729.9,693.5" fill="#515645"/><polygon points="715.8,684.1 728.3,681.0 729.9,696.6 720.5,699.7" fill="#232c21"/><polygon points="725.2,707.5 767.2,705.9 789.1,687.2 815.5,681.8 789.1,707.5 745.4,724.6 744.7,738.7 731.4,718.4" fill="#575954"/><polygon points="785.9,637.4 798.4,651.4 815.5,681.8 792.2,693.5 787.5,671.7" fill="#595b55"/><polygon points="761.0,677.9 771.9,649.9 775.0,651.4 767.2,679.5" fill="#888886"/><polygon points="745.4,724.6 767.2,715.3 779.7,721.5 744.7,738.7" fill="#404639"/><polygon points="742.3,687.2 779.7,681.0 789.1,687.2 767.2,705.9 745.4,704.4" fill="#283223"/></g><rect x="677" y="347" width="460" height="492" filter="url(#nzt)" opacity="0.4"/></g>
<clipPath id="tc5"><polygon points="932.1,701.2 989.7,666.7 1041.5,732.8 965.2,777.9"/></clipPath><g clip-path="url(#tc5)"><rect x="677" y="347" width="460" height="492" fill="#242c25"/><g filter="url(#blur1)"><polygon points="992.8,691.4 1010.3,692.2 1019.0,703.8 1000.1,714.0" fill="#4f513e"/><polygon points="1003.0,714.0 1023.4,708.1 1035.0,722.7 1011.7,731.4 997.2,729.9" fill="#3a462e"/><polygon points="1030.6,725.6 1041.5,732.8 1032.1,737.2" fill="#4f523d"/><polygon points="952.2,745.9 997.2,737.2 997.2,743.0 958.0,760.5" fill="#394330"/><polygon points="932.1,701.2 989.7,666.7 997.2,686.3 991.4,708.1 997.2,731.4 953.6,743.0 946.3,731.4" fill="#202821"/></g><rect x="677" y="347" width="460" height="492" filter="url(#nzt)" opacity="0.4"/></g>
</svg>
<span class="t" style="left:682.1px;top:850.45px;font-size:11.6px;color:#000;font-family:'Liberation Mono', monospace;transform:scaleX(0.9971)">LaRGB16bit(38806, 39651, 38735) | RGB8bit(113, 112, 109)</span>
<div class="a" style="left:1086px;top:848.8px;width:20px;height:14.6px;background:#71706d;"></div>
<div class="a" style="left:1081.5px;top:847px;width:1px;height:18px;background:#d0d0d0;"></div>
<div class="a" style="left:1107.5px;top:847px;width:1px;height:18px;background:#d0d0d0;"></div>
<div class="a" style="left:1118.5px;top:847px;width:1px;height:18px;background:#d0d0d0;"></div>
<svg style="left:1123px;top:853px" width="12" height="12"><g fill="#b8b8b8"><rect x="8" y="0" width="2" height="2"/><rect x="4" y="4" width="2" height="2"/><rect x="8" y="4" width="2" height="2"/><rect x="0" y="8" width="2" height="2"/><rect x="4" y="8" width="2" height="2"/><rect x="8" y="8" width="2" height="2"/></g></svg>
<div class="a" style="left:911px;top:586px;width:121px;height:72px;background:#f0f0f0;box-shadow:1px 1px 2px rgba(0,0,0,0.3);"></div>
<span class="t" style="left:946.3px;top:592.23px;font-size:13px;color:#000;transform:scaleX(0.8911)">QC failed</span>
<span class="t" style="left:946.3px;top:614.03px;font-size:13px;color:#000;transform:scaleX(0.8794)">QC ok</span>
<span class="t" style="left:946.3px;top:636.23px;font-size:13px;color:#000;transform:scaleX(0.8613)">reset QC</span>
<svg style="left:1012px;top:595.5px" width="6" height="9"><path d="M 0.7 0.6 V 7.8 L 5.3 4.2 Z" fill="#000"/></svg>
<svg style="left:911px;top:585.6px" width="13" height="21" viewBox="0 0 13 21"><path d="M 0.7 0.8 V 16.6 L 4.4 13.2 L 7.2 19.6 L 9.6 18.6 L 6.8 12.4 H 11.8 Z" fill="#fff" stroke="#000" stroke-width="1"/></svg>
</body></html>
